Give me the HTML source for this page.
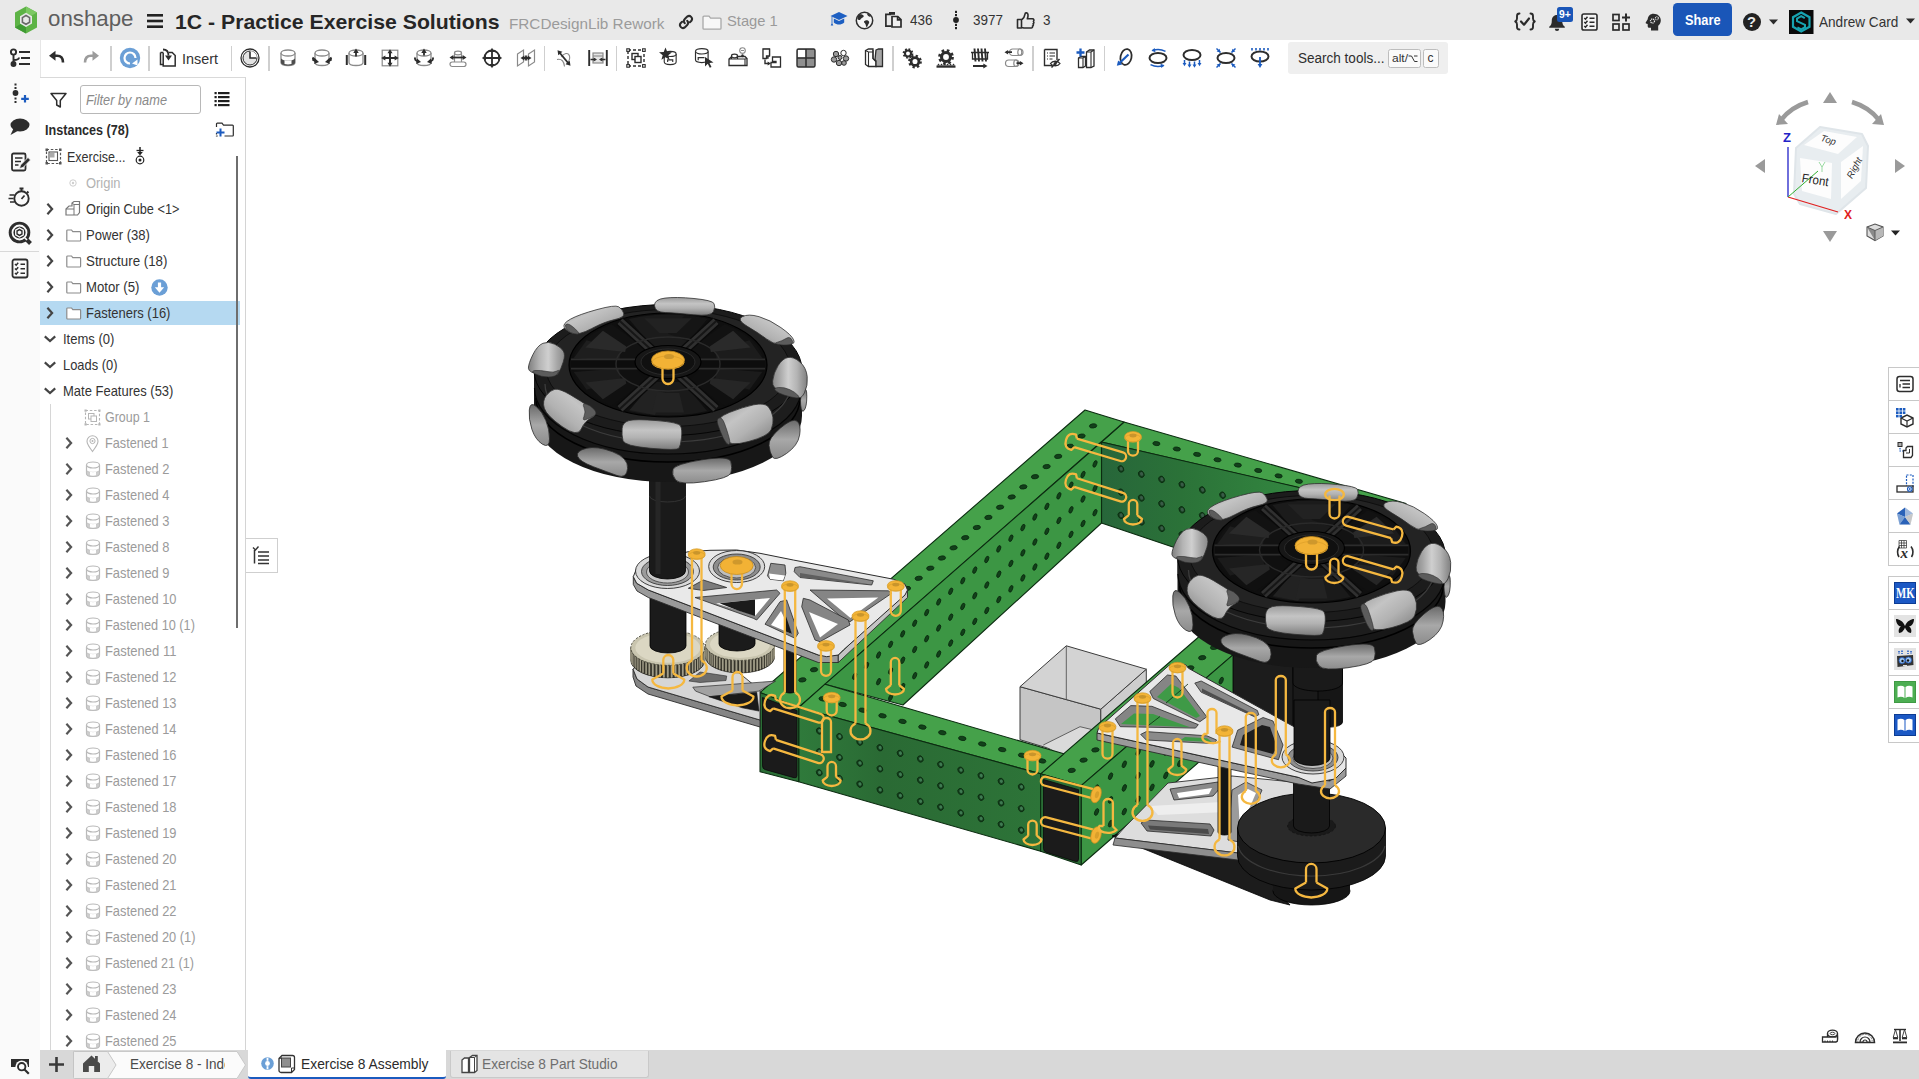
<!DOCTYPE html>
<html><head><meta charset="utf-8"><title>Onshape</title>
<style>
html,body{margin:0;padding:0;background:#fff}
html{width:1919px;height:1079px;overflow:hidden}
body{width:1919px;height:1079px;position:relative;overflow:hidden;font-family:"Liberation Sans",sans-serif}
svg{overflow:visible;display:block}
</style></head><body>
<div style="position:absolute;left:0;top:0;width:1919px;height:40px;background:#e9e9e9"></div>
<svg style="position:absolute;left:14px;top:6px;" width="24" height="28" viewBox="0 0 24 28"><polygon points="12,0.5 23,6.5 23,21.5 12,27.5 1,21.5 1,6.5" fill="#5db346"/>
<polygon points="12,0.5 23,6.5 17,10 12,7.2" fill="#7cc863"/>
<polygon points="1,21.5 12,27.5 12,21 6.5,18" fill="#3f9a33"/>
<polygon points="12,6.8 18,10.2 18,17.5 12,21 6,17.5 6,10.2" fill="#e9e9e9"/>
<polygon points="12,9.5 15.6,11.6 15.6,16.2 12,18.3 8.4,16.2 8.4,11.6" fill="none" stroke="#6a6a6a" stroke-width="1.6"/>
<polygon points="12,12.2 13.4,13 13.4,14.8 12,15.6 10.6,14.8 10.6,13" fill="#e9e9e9"/></svg>
<span style="position:absolute;left:48.0px;top:6.6px;font-size:21.5px;line-height:25.8px;color:#5e5e5e;white-space:nowrap;transform-origin:0 50%;transform:scaleX(1.0364);">onshape</span>
<svg style="position:absolute;left:146px;top:13px;" width="18" height="16" viewBox="0 0 18 16"><rect x="1" y="1" width="16" height="2.6" fill="#222"/><rect x="1" y="6.7" width="16" height="2.6" fill="#222"/><rect x="1" y="12.4" width="16" height="2.6" fill="#222"/></svg>
<span style="position:absolute;left:175.0px;top:9.4px;font-size:20.8px;line-height:25.0px;color:#262626;white-space:nowrap;transform-origin:0 50%;transform:scaleX(1.0207);font-weight:bold;">1C - Practice Exercise Solutions</span>
<span style="position:absolute;left:508.7px;top:15.7px;font-size:14.6px;line-height:17.5px;color:#9b9b9b;white-space:nowrap;transform-origin:0 50%;transform:scaleX(1.0472);">FRCDesignLib Rework</span>
<svg style="position:absolute;left:678px;top:14px;" width="16" height="16" viewBox="0 0 16 16"><g fill="none" stroke="#2b2b2b" stroke-width="2" stroke-linecap="round"><path d="M6.8 9.2a3 3 0 0 1 0-4.2l2.4-2.4a3 3 0 0 1 4.2 4.2l-1.5 1.5"/><path d="M9.2 6.8a3 3 0 0 1 0 4.2l-2.4 2.4a3 3 0 0 1-4.2-4.2l1.5-1.5"/></g></svg>
<svg style="position:absolute;left:702px;top:14.5px;" width="20" height="15" viewBox="0 0 20 15"><path d="M1 2.2a1 1 0 0 1 1-1h5l1.6 2h9.4a1 1 0 0 1 1 1v9a1 1 0 0 1-1 1H2a1 1 0 0 1-1-1z" fill="#f7f7f7" stroke="#a8a8a8" stroke-width="1.3"/></svg>
<span style="position:absolute;left:726.7px;top:12.2px;font-size:15px;line-height:18.0px;color:#9a9a9a;white-space:nowrap;transform-origin:0 50%;transform:scaleX(0.9824);">Stage 1</span>
<svg style="position:absolute;left:830px;top:11px;" width="18" height="16" viewBox="0 0 18 16"><polygon points="9,1 17.5,5 9,9 0.5,5" fill="#1d5fc2"/><path d="M3.8 7.6v3.8c1.6 1.4 3.4 2 5.2 2s3.6-.6 5.2-2V7.6L9 10z" fill="#1d5fc2"/><path d="M1.6 5.4v7.2l-.9 2h2.6l-.9-2V6z" fill="#1d5fc2"/></svg>
<svg style="position:absolute;left:855px;top:10.5px;" width="19" height="19" viewBox="0 0 19 19"><circle cx="9.5" cy="9.5" r="8.2" fill="#f4f4f4" stroke="#2e2e2e" stroke-width="1.5"/><path d="M5 3.2c1.5-.2 3 .3 3.6 1.5.5 1-.6 1.8-1.7 2.2-1.2.4-1 1.6-2 2-.9.3-2-.3-2.6-1.2.2-2 1.2-3.6 2.700-4.500zM10.500 9.500c1.300-.4 2.800 0 3.500 1 .6 1-.2 2-.8 3-.5.900-.6 2.200-1.600 2.600-.8-.7-.7-2-1.200-3-.4-1-1.700-1.500-1.400-2.500.1-.6.800-.9 1.500-1.100zM12 2.200c1.600.6 3 1.800 3.800 3.300-.9.300-1.900.1-2.500-.6-.6-.7-1.500-1.500-1.300-2.700z" fill="#2e2e2e"/></svg>
<svg style="position:absolute;left:884px;top:11px;" width="19" height="17" viewBox="0 0 19 17"><g fill="none" stroke="#2b2b2b" stroke-width="1.7"><path d="M7 3.400H1.900v11.700h5.600"/><rect x="5" y="1" width="6" height="2.800" fill="#2b2b2b" stroke="none"/><path d="M8 5.500h5.800l3.200 3.200v7.300H8z" fill="#f0f0f0"/><path d="M13.600 5.700v3.200h3.200"/></g></svg>
<span style="position:absolute;left:910.0px;top:12.4px;font-size:14.6px;line-height:17.5px;color:#333;white-space:nowrap;transform-origin:0 50%;transform:scaleX(0.9236);">436</span>
<svg style="position:absolute;left:951px;top:10px;" width="10" height="20" viewBox="0 0 10 20"><circle cx="5" cy="10" r="2.900" fill="#222"/><g fill="#222"><rect x="4" y="0.800" width="2" height="2.200"/><rect x="4" y="4" width="2" height="2.200"/><rect x="4" y="13.800" width="2" height="2.200"/><rect x="4" y="17" width="2" height="2.200"/></g></svg>
<span style="position:absolute;left:972.5px;top:12.4px;font-size:14.6px;line-height:17.5px;color:#333;white-space:nowrap;transform-origin:0 50%;transform:scaleX(0.9236);">3977</span>
<svg style="position:absolute;left:1015.5px;top:10px;" width="20" height="20" viewBox="0 0 20 20"><path d="M1.500 9.500h4v8.500h-4zM5.500 10c2-1.500 3.200-3.600 3.600-6.200.2-1.500 2.600-1.200 2.900.8.200 1.500-.2 3-.7 4.200h5.200c1.400 0 1.900 1.700.9 2.500.8.700.6 2-.3 2.500.6.800.3 1.900-.6 2.300.4 1-.2 1.900-1.300 1.900H8.500c-1.200 0-2-.5-3-.5z" fill="none" stroke="#2b2b2b" stroke-width="1.600" stroke-linejoin="round"/></svg>
<span style="position:absolute;left:1042.5px;top:12.4px;font-size:14.6px;line-height:17.5px;color:#333;white-space:nowrap;transform-origin:0 50%;transform:scaleX(0.9236);">3</span>
<svg style="position:absolute;left:1514px;top:12px;" width="22" height="19" viewBox="0 0 22 19"><g fill="none" stroke="#2b2b2b" stroke-width="1.900" stroke-linecap="round" stroke-linejoin="round"><path d="M5.500 1.500c-2 0-2.500 1-2.500 2.500v2.500c0 1.500-.6 2.500-1.800 3 1.200.5 1.800 1.500 1.800 3V15c0 1.500.5 2.500 2.500 2.500"/><path d="M16.500 1.500c2 0 2.500 1 2.500 2.500v2.500c0 1.500.6 2.500 1.800 3-1.200.5-1.800 1.500-1.800 3V15c0 1.500-.5 2.500-2.500 2.500"/><path d="M7 9.500l3 3.200 5-6.200" stroke-width="2.200"/></g></svg>
<svg style="position:absolute;left:1548px;top:14px;" width="18" height="17" viewBox="0 0 18 17"><path d="M9 1c3.400 0 5.200 2.600 5.200 5.600 0 3.400.9 4.900 2.600 6.200v1H1.200v-1c1.700-1.300 2.600-2.800 2.600-6.200C3.800 3.600 5.600 1 9 1z" fill="#2b2b2b"/><path d="M6.800 14.800a2.200 2.200 0 0 0 4.400 0z" fill="#2b2b2b"/></svg>
<div style="position:absolute;left:1557px;top:6.500px;width:15.800px;height:15px;background:#1a56b8;border-radius:2.500px"></div>
<span style="position:absolute;left:1559.0px;top:7.7px;font-size:10.5px;line-height:12.6px;color:#fff;white-space:nowrap;transform-origin:0 50%;transform:scaleX(0.9858);font-weight:bold;">9+</span>
<svg style="position:absolute;left:1580.5px;top:13px;" width="17" height="18" viewBox="0 0 17 18"><rect x="1" y="1" width="15" height="16" rx="1.800" fill="#f4f4f4" stroke="#2b2b2b" stroke-width="1.600"/><g stroke="#2b2b2b" stroke-width="1.500" fill="none"><path d="M3.300 5l1.200 1.200 2-2.400M3.300 9l1.200 1.200 2-2.400M3.300 13l1.200 1.200 2-2.400"/><path d="M8.500 5.200h5M8.500 9.200h5M8.500 13.200h5"/></g></svg>
<svg style="position:absolute;left:1612px;top:13px;" width="19" height="18" viewBox="0 0 19 18"><g fill="none" stroke="#2b2b2b" stroke-width="1.700"><rect x="1" y="1.500" width="6" height="6"/><rect x="1" y="11" width="6" height="6"/><rect x="11" y="11" width="6" height="6"/><path d="M14 0.500v8M10 4.500h8" stroke-width="2"/></g></svg>
<svg style="position:absolute;left:1645px;top:13px;" width="18" height="18" viewBox="0 0 18 18"><path d="M8.500.800c4.200 0 7.300 2.900 7.300 6.600 0 2.300-1.100 4-2.600 5.300V17.500H6v-2.700H4.200c-.9 0-1.500-.6-1.500-1.500v-2.200L1 10.400c-.4-.2-.5-.6-.3-1l2-3.200C3.100 3 5.300.800 8.500.800z" fill="#2b2b2b"/><circle cx="7.500" cy="8" r="2" fill="none" stroke="#e9e9e9" stroke-width="1.300" stroke-dasharray="1.100 0.700"/><circle cx="11.800" cy="5.200" r="1.500" fill="none" stroke="#e9e9e9" stroke-width="1.100" stroke-dasharray="0.900 0.600"/></svg>
<div style="position:absolute;left:1673px;top:3px;width:59px;height:33px;background:#1a56b8;border-radius:4.500px"></div>
<span style="position:absolute;left:1685.0px;top:11.1px;font-size:15.5px;line-height:18.6px;color:#fff;white-space:nowrap;transform-origin:0 50%;transform:scaleX(0.8241);font-weight:bold;">Share</span>
<div style="position:absolute;left:1742.500px;top:12.500px;width:18.500px;height:18.500px;border-radius:50%;background:#222"></div>
<span style="position:absolute;left:1747.3px;top:13.0px;font-size:15px;line-height:18.0px;color:#e9e9e9;white-space:nowrap;transform-origin:0 50%;transform:scaleX(0.9823);font-weight:bold;">?</span>
<svg style="position:absolute;left:1768.5px;top:18.5px;" width="9" height="6" viewBox="0 0 9 6"><polygon points="0,0.500 9,0.500 4.500,5.500" fill="#2b2b2b"/></svg>
<svg style="position:absolute;left:1789px;top:9.8px;" width="24.5" height="24" viewBox="0 0 24.5 24"><rect width="24.500" height="24" fill="#0a0a0a"/><polygon points="12.200,2.500 20.500,7.200 20.500,16.800 12.200,21.500 4,16.800 4,7.200" fill="none" stroke="#17a3b0" stroke-width="2.200"/><path d="M15.800 8.200l-3.600-2-4.200 2.400v2.600l8 3.600v2.400l-3.800 2.200-3.800-2.100" fill="none" stroke="#17a3b0" stroke-width="2"/></svg>
<span style="position:absolute;left:1819.2px;top:12.5px;font-size:15px;line-height:18.0px;color:#333;white-space:nowrap;transform-origin:0 50%;transform:scaleX(0.9059);">Andrew Card</span>
<svg style="position:absolute;left:1905.5px;top:17.5px;" width="9" height="6" viewBox="0 0 9 6"><polygon points="0,0.500 9,0.500 4.500,5.500" fill="#2b2b2b"/></svg>
<div style="position:absolute;left:40px;top:40px;width:1879px;height:37px;background:#fff"></div>
<div style="position:absolute;left:110.25px;top:45.500px;width:1.500px;height:25px;background:#cfcfcf"></div>
<div style="position:absolute;left:148.25px;top:45.500px;width:1.500px;height:25px;background:#cfcfcf"></div>
<div style="position:absolute;left:230.75px;top:45.500px;width:1.500px;height:25px;background:#cfcfcf"></div>
<div style="position:absolute;left:268.25px;top:45.500px;width:1.500px;height:25px;background:#cfcfcf"></div>
<div style="position:absolute;left:543.95px;top:45.500px;width:1.500px;height:25px;background:#cfcfcf"></div>
<div style="position:absolute;left:615.95px;top:45.500px;width:1.500px;height:25px;background:#cfcfcf"></div>
<div style="position:absolute;left:892.05px;top:45.500px;width:1.500px;height:25px;background:#cfcfcf"></div>
<div style="position:absolute;left:1032.05px;top:45.500px;width:1.500px;height:25px;background:#cfcfcf"></div>
<div style="position:absolute;left:1103.85px;top:45.500px;width:1.500px;height:25px;background:#cfcfcf"></div>
<svg style="position:absolute;left:45px;top:46px;" width="24" height="24" viewBox="0 0 24 24"><path d="M6.500 9.800h5.500c4 0 6 2.600 6 6.700" fill="none" stroke="#2d2d2d" stroke-width="2.600"/><polygon points="4,9.800 10.500,4.800 10.500,14.800" fill="#2d2d2d"/></svg>
<svg style="position:absolute;left:79px;top:46px;" width="24" height="24" viewBox="0 0 24 24"><path d="M17.500 9.800h-5.500c-4 0-6 2.600-6 6.700" fill="none" stroke="#9c9c9c" stroke-width="2.600"/><polygon points="20,9.800 13.500,4.800 13.500,14.800" fill="#9c9c9c"/></svg>
<svg style="position:absolute;left:118px;top:46px;" width="24" height="24" viewBox="0 0 24 24"><circle cx="12" cy="12" r="10.200" fill="#6b9fd6"/><path d="M17.500 12a5.500 5.500 0 1 0-5.500 5.500" fill="none" stroke="#fff" stroke-width="2.200"/><polygon points="14,17.500 19.500,13.500 19.500,19.500" fill="#fff" transform="rotate(0)"/></svg>
<svg style="position:absolute;left:156px;top:46px;" width="24" height="24" viewBox="0 0 24 24"><path d="M4.500 6.500h3M13 6.500h3.200l3 3v10.500h-12v-13" fill="none" stroke="#2d2d2d" stroke-width="1.500"/><path d="M4.500 6.500v12h3" fill="none" stroke="#2d2d2d" stroke-width="1.500"/><path d="M7 3.500c3.500 0 5.500 1.500 5.500 6" fill="none" stroke="#2d2d2d" stroke-width="1.800"/><polygon points="12.500,14.500 9,9.500 16,9.500" fill="#2d2d2d"/></svg>
<span style="position:absolute;left:181.5px;top:49.7px;font-size:15.2px;line-height:18.2px;color:#333;white-space:nowrap;transform-origin:0 50%;transform:scaleX(0.9470);">Insert</span>
<svg style="position:absolute;left:238px;top:46px;" width="24" height="24" viewBox="0 0 24 24"><circle cx="12" cy="12" r="9" fill="#fff" stroke="#2d2d2d" stroke-width="1.300"/><circle cx="12" cy="12" r="7" fill="#e3e3e3" stroke="#2d2d2d" stroke-width="1"/><path d="M12 5v7h7A7 7 0 0 0 12 5z" fill="#fff"/><path d="M12 5.500v6.500h6.500" fill="none" stroke="#2d2d2d" stroke-width="1.600"/></svg>
<svg style="position:absolute;left:276px;top:46px;" width="24" height="24" viewBox="0 0 24 24"><path d="M5 7v9.500c0 1.800 3.100 3 7 3s7-1.200 7-3V7" fill="#fff" stroke="#8a8a8a" stroke-width="1.300"/><ellipse cx="12" cy="7" rx="7" ry="3" fill="#fff" stroke="#8a8a8a" stroke-width="1.300"/><path d="M5 12.500v4c0 1.800 3.100 3 7 3s7-1.200 7-3v-4c-1.500 1.500-4 2.200-7 2.200s-5.500-.7-7-2.200z" fill="#4d4d4d"/><path d="M8.500 14.300v3.700c2 .6 5 .6 7 0v-3.700c-2 .5-5 .5-7 0z" fill="#fff"/></svg>
<svg style="position:absolute;left:310px;top:46px;" width="24" height="24" viewBox="0 0 24 24"><path d="M5 7v9.500c0 1.800 3.100 3 7 3s7-1.200 7-3V7" fill="#fff" stroke="#8a8a8a" stroke-width="1.300"/><ellipse cx="12" cy="7" rx="7" ry="3" fill="#fff" stroke="#8a8a8a" stroke-width="1.300"/><path d="M3.500 11.500c-1.500 1.500 0 3.500 3.500 4.200M20.500 11.500c1.500 1.500 0 3.500-3.500 4.200" fill="none" stroke="#2d2d2d" stroke-width="1.800"/><polygon points="0,0 -4.42,-2.72 -4.42,2.72" fill="#2d2d2d" transform="translate(9,16) rotate(10)"/><polygon points="0,0 -4.42,-2.72 -4.42,2.72" fill="#2d2d2d" transform="translate(15,16) rotate(170)"/><polygon points="0,0 -3.38,-2.08 -3.38,2.08" fill="#2d2d2d" transform="translate(3.2,11) rotate(-110)"/><polygon points="0,0 -3.38,-2.08 -3.38,2.08" fill="#2d2d2d" transform="translate(20.8,11) rotate(-70)"/></svg>
<svg style="position:absolute;left:344px;top:46px;" width="24" height="24" viewBox="0 0 24 24"><path d="M5 7v9.500c0 1.800 3.100 3 7 3s7-1.200 7-3V7" fill="#fff" stroke="#8a8a8a" stroke-width="1.300"/><ellipse cx="12" cy="7" rx="7" ry="3" fill="#fff" stroke="#8a8a8a" stroke-width="1.300"/><path d="M12 4.500v6" stroke="#2d2d2d" stroke-width="1.800"/><polygon points="0,0 -4.42,-2.72 -4.42,2.72" fill="#2d2d2d" transform="translate(12,2.5) rotate(-90)"/><path d="M2.800 9v10M21.200 9v10" stroke="#2d2d2d" stroke-width="2"/></svg>
<svg style="position:absolute;left:378px;top:46px;" width="24" height="24" viewBox="0 0 24 24"><rect x="4.200" y="4.200" width="15.600" height="15.600" fill="#fff" stroke="#8a8a8a" stroke-width="1.200"/><path d="M12 5.500v13M5.500 12h13" stroke="#2d2d2d" stroke-width="2"/><polygon points="0,0 -4.16,-2.56 -4.16,2.56" fill="#2d2d2d" transform="translate(12,3.2) rotate(-90)"/><polygon points="0,0 -4.16,-2.56 -4.16,2.56" fill="#2d2d2d" transform="translate(12,20.8) rotate(90)"/><polygon points="0,0 -4.16,-2.56 -4.16,2.56" fill="#2d2d2d" transform="translate(3.2,12) rotate(180)"/><polygon points="0,0 -4.16,-2.56 -4.16,2.56" fill="#2d2d2d" transform="translate(20.8,12) rotate(0)"/></svg>
<svg style="position:absolute;left:412px;top:46px;" width="24" height="24" viewBox="0 0 24 24"><path d="M5 7v9.500c0 1.800 3.100 3 7 3s7-1.200 7-3V7" fill="#fff" stroke="#8a8a8a" stroke-width="1.300"/><ellipse cx="12" cy="7" rx="7" ry="3" fill="#fff" stroke="#8a8a8a" stroke-width="1.300"/><path d="M12 4.500v5" stroke="#2d2d2d" stroke-width="1.800"/><polygon points="0,0 -4.42,-2.72 -4.42,2.72" fill="#2d2d2d" transform="translate(12,2.5) rotate(-90)"/><path d="M3.500 11.500c-1.500 1.500 0 3.500 3.500 4.200M20.500 11.500c1.500 1.500 0 3.500-3.500 4.200" fill="none" stroke="#2d2d2d" stroke-width="1.800"/><polygon points="0,0 -4.42,-2.72 -4.42,2.72" fill="#2d2d2d" transform="translate(9,16) rotate(10)"/><polygon points="0,0 -4.42,-2.72 -4.42,2.72" fill="#2d2d2d" transform="translate(15,16) rotate(170)"/></svg>
<svg style="position:absolute;left:446px;top:46px;" width="24" height="24" viewBox="0 0 24 24"><path d="M8.500 7v10M15.500 7v10" stroke="#8a8a8a" stroke-width="1.200"/><ellipse cx="12" cy="7" rx="3.500" ry="1.800" fill="#fff" stroke="#8a8a8a" stroke-width="1.200"/><rect x="4" y="16" width="16" height="4.500" rx="2.200" fill="#fff" stroke="#8a8a8a" stroke-width="1.200"/><path d="M6 11.500h12" stroke="#2d2d2d" stroke-width="1.800"/><polygon points="0,0 -3.9,-2.4 -3.9,2.4" fill="#2d2d2d" transform="translate(3.5,11.5) rotate(180)"/><polygon points="0,0 -3.9,-2.4 -3.9,2.4" fill="#2d2d2d" transform="translate(20.5,11.5) rotate(0)"/></svg>
<svg style="position:absolute;left:480px;top:46px;" width="24" height="24" viewBox="0 0 24 24"><circle cx="12" cy="12" r="7.500" fill="#fff" stroke="#2d2d2d" stroke-width="1.800"/><path d="M12 5v14M5 12h14" stroke="#2d2d2d" stroke-width="1.800"/><polygon points="0,0 -4.16,-2.56 -4.16,2.56" fill="#2d2d2d" transform="translate(12,1.8) rotate(-90)"/><polygon points="0,0 -4.16,-2.56 -4.16,2.56" fill="#2d2d2d" transform="translate(12,22.2) rotate(90)"/><polygon points="0,0 -4.16,-2.56 -4.16,2.56" fill="#2d2d2d" transform="translate(1.8,12) rotate(180)"/><polygon points="0,0 -4.16,-2.56 -4.16,2.56" fill="#2d2d2d" transform="translate(22.2,12) rotate(0)"/></svg>
<svg style="position:absolute;left:514px;top:46px;" width="24" height="24" viewBox="0 0 24 24"><path d="M3.500 8l6-4v12l-6 4zM14.500 8l6-4v12l-6 4z" fill="#fff" stroke="#8a8a8a" stroke-width="1.200"/><path d="M8.500 12h7M12 9.500v5" stroke="#2d2d2d" stroke-width="1.800"/><polygon points="0,0 -3.9,-2.4 -3.9,2.4" fill="#2d2d2d" transform="translate(6.5,12) rotate(180)"/><polygon points="0,0 -3.9,-2.4 -3.9,2.4" fill="#2d2d2d" transform="translate(17.5,12) rotate(0)"/></svg>
<svg style="position:absolute;left:552px;top:46px;" width="24" height="24" viewBox="0 0 24 24"><path d="M5 13.500c5-1 7 2 7.500 7M9.500 11c2-4 7-5 8-1s-1 6-3 8" fill="none" stroke="#8a8a8a" stroke-width="1.100"/><path d="M7 6l10 12" stroke="#2d2d2d" stroke-width="1.900"/><polygon points="0,0 -4.42,-2.72 -4.42,2.72" fill="#2d2d2d" transform="translate(5.5,4.2) rotate(-130)"/><polygon points="0,0 -4.42,-2.72 -4.42,2.72" fill="#2d2d2d" transform="translate(18.5,19.8) rotate(50)"/></svg>
<svg style="position:absolute;left:586px;top:46px;" width="24" height="24" viewBox="0 0 24 24"><rect x="7" y="7" width="10" height="10" fill="#e4e4e4" stroke="#8a8a8a" stroke-width="1.200"/><path d="M7 10h10" stroke="#8a8a8a" stroke-width="1.100"/><path d="M3.200 4v16M20.800 4v16" stroke="#2d2d2d" stroke-width="1.900"/><path d="M4.500 13.500h5M14.500 13.500h5" stroke="#2d2d2d" stroke-width="1.600"/><polygon points="0,0 -3.38,-2.08 -3.38,2.08" fill="#2d2d2d" transform="translate(11,13.5) rotate(0)"/><polygon points="0,0 -3.38,-2.08 -3.38,2.08" fill="#2d2d2d" transform="translate(13,13.5) rotate(180)"/></svg>
<svg style="position:absolute;left:624px;top:46px;" width="24" height="24" viewBox="0 0 24 24"><rect x="4" y="4" width="16" height="16" fill="none" stroke="#2d2d2d" stroke-width="1.400" stroke-dasharray="3 2"/><g fill="#fff" stroke="#2d2d2d" stroke-width="1.100"><rect x="2.800" y="2.800" width="2.600" height="2.600"/><rect x="18.600" y="2.800" width="2.600" height="2.600"/><rect x="2.800" y="18.600" width="2.600" height="2.600"/><rect x="18.600" y="18.600" width="2.600" height="2.600"/></g><rect x="8" y="7.500" width="6" height="6" fill="#fff" stroke="#2d2d2d" stroke-width="1.400"/><rect x="11" y="10.500" width="6" height="6" fill="#fff" stroke="#2d2d2d" stroke-width="1.400"/></svg>
<svg style="position:absolute;left:658px;top:46px;" width="24" height="24" viewBox="0 0 24 24"><g transform="translate(2,2) scale(0.850)"><path d="M5 7v9.500c0 1.800 3.100 3 7 3s7-1.200 7-3V7" fill="#fff" stroke="#2d2d2d" stroke-width="1.300"/><ellipse cx="12" cy="7" rx="7" ry="3" fill="#fff" stroke="#2d2d2d" stroke-width="1.300"/><path d="M9 16.500v-2.500h6v2.500" fill="none" stroke="#2d2d2d" stroke-width="1.300"/></g><polygon points="7.500,1.500 9.300,6 14,6.200 10.300,9.200 11.600,13.800 7.500,11.200 3.400,13.800 4.700,9.200 1,6.200 5.700,6" fill="#2d2d2d"/></svg>
<svg style="position:absolute;left:692px;top:46px;" width="24" height="24" viewBox="0 0 24 24"><g transform="translate(-1,-1) scale(0.900)"><path d="M5 7v9.500c0 1.800 3.100 3 7 3s7-1.200 7-3V7" fill="#fff" stroke="#2d2d2d" stroke-width="1.300"/><ellipse cx="12" cy="7" rx="7" ry="3" fill="#fff" stroke="#2d2d2d" stroke-width="1.300"/><path d="M8 17v-3h7" fill="none" stroke="#2d2d2d" stroke-width="1.300"/></g><polygon points="13,11 21.500,16.500 17.500,17 19.500,21 17.800,21.800 15.800,17.800 13,20.500" fill="#2d2d2d"/></svg>
<svg style="position:absolute;left:726px;top:46px;" width="24" height="24" viewBox="0 0 24 24"><path d="M3 13l3-2.500h13l2 2v7H3z" fill="#fff" stroke="#2d2d2d" stroke-width="1.300"/><path d="M3 13h16v6.500M19 13l2-.5" fill="none" stroke="#2d2d2d" stroke-width="1.100"/><ellipse cx="8.500" cy="10" rx="3" ry="1.800" fill="#fff" stroke="#2d2d2d" stroke-width="1.200"/><path d="M5.500 10v3M11.500 10v3" stroke="#2d2d2d" stroke-width="1.200"/><circle cx="16.500" cy="4.500" r="2.800" fill="#fff" stroke="#8a8a8a" stroke-width="1.100"/><path d="M15 4.500h3M16.500 7.300v2.500" stroke="#8a8a8a" stroke-width="1.100"/><polygon points="0,0 -2.86,-1.76 -2.86,1.76" fill="#2d2d2d" transform="translate(16.5,11.5) rotate(90)"/></svg>
<svg style="position:absolute;left:760px;top:46px;" width="24" height="24" viewBox="0 0 24 24"><path d="M3.500 3.500h6v5.500h-1.500v3h-4.500zM3.500 8l1.500-1.500" fill="#fff" stroke="#2d2d2d" stroke-width="1.300"/><path d="M3 3h6.500v7h-3v2.500H3z" fill="#fff" stroke="#2d2d2d" stroke-width="1.300"/><path d="M12.500 11h8v10h-9.500v-4.500h5v-1h-3.500z" fill="#fff" stroke="#2d2d2d" stroke-width="1.300" transform="translate(0,0)"/><path d="M5 13.500v4h4" fill="none" stroke="#2d2d2d" stroke-width="1.400"/><polygon points="0,0 -3.38,-2.08 -3.38,2.08" fill="#2d2d2d" transform="translate(11,17.5) rotate(0)"/></svg>
<svg style="position:absolute;left:794px;top:46px;" width="24" height="24" viewBox="0 0 24 24"><rect x="3" y="3" width="18" height="18" rx="1.500" fill="#8f8f8f" stroke="#2d2d2d" stroke-width="1.400"/><rect x="4" y="4" width="7.500" height="7.500" fill="#fff"/><path d="M12 3v18M3 12h18" stroke="#2d2d2d" stroke-width="1.500"/></svg>
<svg style="position:absolute;left:828px;top:46px;" width="24" height="24" viewBox="0 0 24 24"><g fill="#9a9a9a" stroke="#2d2d2d" stroke-width="1"><circle cx="8" cy="8" r="2.700"/><circle cx="15.500" cy="7" r="2.700" fill="#fff"/><circle cx="6" cy="13.500" r="2.700"/><circle cx="18" cy="12.500" r="2.700"/><circle cx="11" cy="17" r="2.700"/><circle cx="12" cy="11.500" r="2" /><circle cx="16" cy="17" r="2.300"/></g></svg>
<svg style="position:absolute;left:862px;top:46px;" width="24" height="24" viewBox="0 0 24 24"><path d="M3.500 4.500l3-1.500h4.500v9.500l3 3v5h-7.500l-3-2z" fill="#fff" stroke="#2d2d2d" stroke-width="1.300"/><path d="M6.500 6v14.500M3.500 4.500l3 1.500h4.500" fill="none" stroke="#2d2d2d" stroke-width="1.100"/><path d="M14 4l2.500-1h4v17.500h-6.500v-5.500l-1-1.500z" fill="#a5a5a5" stroke="#2d2d2d" stroke-width="1.300"/><path d="M11 4v8.500l3 3" fill="none" stroke="#2d2d2d" stroke-width="1.100"/></svg>
<svg style="position:absolute;left:900px;top:46px;" width="24" height="24" viewBox="0 0 24 24"><circle cx="8" cy="7.5" r="4.2" fill="none" stroke="#2d2d2d" stroke-width="2.31" stroke-dasharray="1.64934 1.64934"/><circle cx="8" cy="7.5" r="3.024" fill="none" stroke="#2d2d2d" stroke-width="2.1"/><circle cx="15" cy="15.5" r="5.4" fill="none" stroke="#2d2d2d" stroke-width="2.97" stroke-dasharray="2.12058 2.12058"/><circle cx="15" cy="15.5" r="3.888" fill="none" stroke="#2d2d2d" stroke-width="2.7"/></svg>
<svg style="position:absolute;left:934px;top:46px;" width="24" height="24" viewBox="0 0 24 24"><circle cx="12" cy="11" r="6.2" fill="none" stroke="#2d2d2d" stroke-width="3.41" stroke-dasharray="2.43474 2.43474"/><circle cx="12" cy="11" r="4.464" fill="none" stroke="#2d2d2d" stroke-width="3.1"/><rect x="2.500" y="19.500" width="19" height="2.200" fill="#2d2d2d"/><path d="M3 19.500l1.500-2 1.500 2 1.500-2 1.500 2 1.500-2 1.500 2 1.500-2 1.500 2 1.500-2 1.500 2 1.500-2 1.500 2" fill="#2d2d2d"/></svg>
<svg style="position:absolute;left:968px;top:46px;" width="24" height="24" viewBox="0 0 24 24"><path d="M3 6.500h18M4.500 6.500v6.500h15v-6.500" fill="none" stroke="#2d2d2d" stroke-width="1.300"/><path d="M6.500 2.500l1 13M10 2.500l1 13M13.500 2.500l1 13M17 2.500l1 13" stroke="#2d2d2d" stroke-width="1.900"/><path d="M5 20h11" stroke="#2d2d2d" stroke-width="2"/><polygon points="0,0 -4.16,-2.56 -4.16,2.56" fill="#2d2d2d" transform="translate(19.5,20) rotate(0)"/></svg>
<svg style="position:absolute;left:1002px;top:46px;" width="24" height="24" viewBox="0 0 24 24"><g fill="#fff" stroke="#8a8a8a" stroke-width="1.200"><rect x="7.500" y="3" width="13.500" height="6.500" rx="3.200"/><ellipse cx="17.800" cy="6.200" rx="2" ry="3.200"/><rect x="3.500" y="14" width="13.500" height="6.500" rx="3.200"/><ellipse cx="13.800" cy="17.200" rx="2" ry="3.200"/></g><path d="M4 6.200h6M14.500 17.200h5" stroke="#2d2d2d" stroke-width="1.700"/><polygon points="0,0 -3.64,-2.24 -3.64,2.24" fill="#2d2d2d" transform="translate(2.5,6.2) rotate(180)"/><polygon points="0,0 -3.64,-2.24 -3.64,2.24" fill="#2d2d2d" transform="translate(21.5,17.2) rotate(0)"/></svg>
<svg style="position:absolute;left:1040px;top:46px;" width="24" height="24" viewBox="0 0 24 24"><path d="M4.500 3.500h12.500v10.500M12 19.500h-7.500v-16" fill="#fff" stroke="#2d2d2d" stroke-width="1.400"/><path d="M7 7h1M9.500 7h5.500M7 10h1M9.500 10h5.500M7 13h1M9.500 13h3" stroke="#2d2d2d" stroke-width="1.200"/><path d="M10.500 17.500c2-3 7.500-3 9.500 0-2 3-7.500 3-9.500 0z" fill="#fff" stroke="#2d2d2d" stroke-width="1.300"/><circle cx="15.200" cy="17.500" r="1.500" fill="#2d2d2d"/><path d="M11.500 21.500l8-8.500" stroke="#2d2d2d" stroke-width="1.600"/></svg>
<svg style="position:absolute;left:1074px;top:46px;" width="24" height="24" viewBox="0 0 24 24"><path d="M12.500 6l3-2h4.500v16l-3 1.500h-4.500z" fill="#fff" stroke="#2d2d2d" stroke-width="1.300"/><path d="M12.500 6h4.500v15.500M17 6l3-2" fill="none" stroke="#2d2d2d" stroke-width="1.100"/><path d="M4.500 12l2.500-1.500h4.500v9.500l-2.500 1.500h-4.500z" fill="#fff" stroke="#2d2d2d" stroke-width="1.300"/><path d="M4.500 12h4.500v9.500M9 12l2.500-1.500" fill="none" stroke="#2d2d2d" stroke-width="1.100"/><path d="M6.500 2.500v8M2.500 6.500h8" stroke="#1b5bbf" stroke-width="2.300"/></svg>
<svg style="position:absolute;left:1112px;top:46px;" width="24" height="24" viewBox="0 0 24 24"><ellipse cx="14" cy="11" rx="5.500" ry="8" fill="none" stroke="#2d2d2d" stroke-width="1.800" transform="rotate(12 14 11)"/><path d="M16.500 8.500l-9 8.500" stroke="#1b5bbf" stroke-width="2.200"/><polygon points="0,0 -4.68,-2.88 -4.68,2.88" fill="#1b5bbf" transform="translate(4.8,19.7) rotate(136)"/></svg>
<svg style="position:absolute;left:1146px;top:46px;" width="24" height="24" viewBox="0 0 24 24"><ellipse cx="12" cy="12" rx="8.500" ry="5" fill="none" stroke="#2d2d2d" stroke-width="2"/><path d="M6.500 4.500c4-1.500 9-1.200 13 .800M17.500 19.500c-4 1.500-9 1.200-13-.800" fill="none" stroke="#1b5bbf" stroke-width="1.500"/><polygon points="0,0 -3.64,-2.24 -3.64,2.24" fill="#1b5bbf" transform="translate(5.5,4.8) rotate(170)"/><polygon points="0,0 -3.64,-2.24 -3.64,2.24" fill="#1b5bbf" transform="translate(18.5,19.2) rotate(-10)"/></svg>
<svg style="position:absolute;left:1180px;top:46px;" width="24" height="24" viewBox="0 0 24 24"><ellipse cx="12" cy="9" rx="8.500" ry="5" fill="none" stroke="#2d2d2d" stroke-width="2"/><path d="M4.5 14v4" stroke="#1b5bbf" stroke-width="1.500"/><polygon points="0,0 -3.12,-1.92 -3.12,1.92" fill="#1b5bbf" transform="translate(4.5,20.2) rotate(90)"/><path d="M9.5 15.5v4" stroke="#1b5bbf" stroke-width="1.500"/><polygon points="0,0 -3.12,-1.92 -3.12,1.92" fill="#1b5bbf" transform="translate(9.5,21.7) rotate(90)"/><path d="M14.5 15.5v4" stroke="#1b5bbf" stroke-width="1.500"/><polygon points="0,0 -3.12,-1.92 -3.12,1.92" fill="#1b5bbf" transform="translate(14.5,21.7) rotate(90)"/><path d="M19.5 14v4" stroke="#1b5bbf" stroke-width="1.500"/><polygon points="0,0 -3.12,-1.92 -3.12,1.92" fill="#1b5bbf" transform="translate(19.5,20.2) rotate(90)"/></svg>
<svg style="position:absolute;left:1214px;top:46px;" width="24" height="24" viewBox="0 0 24 24"><ellipse cx="12" cy="12" rx="8.500" ry="5" fill="none" stroke="#2d2d2d" stroke-width="2"/><path d="M2.5 2.5L6.5 6.5" stroke="#1b5bbf" stroke-width="1.500"/><polygon points="0,0 -3.38,-2.08 -3.38,2.08" fill="#1b5bbf" transform="translate(6.5,6.5) rotate(45)"/><path d="M21.5 2.5L17.5 6.5" stroke="#1b5bbf" stroke-width="1.500"/><polygon points="0,0 -3.38,-2.08 -3.38,2.08" fill="#1b5bbf" transform="translate(17.5,6.5) rotate(135)"/><path d="M2.5 21.5L6.5 17.5" stroke="#1b5bbf" stroke-width="1.500"/><polygon points="0,0 -3.38,-2.08 -3.38,2.08" fill="#1b5bbf" transform="translate(6.5,17.5) rotate(-45)"/><path d="M21.5 21.5L17.5 17.5" stroke="#1b5bbf" stroke-width="1.500"/><polygon points="0,0 -3.38,-2.08 -3.38,2.08" fill="#1b5bbf" transform="translate(17.5,17.5) rotate(-135)"/></svg>
<svg style="position:absolute;left:1248px;top:46px;" width="24" height="24" viewBox="0 0 24 24"><ellipse cx="12" cy="10.500" rx="8.500" ry="5" fill="none" stroke="#2d2d2d" stroke-width="2"/><path d="M4 2v2.500M8 2v2.500M12 2v2.500M16 2v2.500M20 2v2.500" stroke="#1b5bbf" stroke-width="1.600"/><path d="M12 11v8" stroke="#1b5bbf" stroke-width="1.800"/><polygon points="0,0 -3.9,-2.4 -3.9,2.4" fill="#1b5bbf" transform="translate(12,22) rotate(90)"/></svg>
<div style="position:absolute;left:1288px;top:42px;width:160px;height:32px;background:#efefef;border-radius:3px"></div>
<span style="position:absolute;left:1297.5px;top:49.4px;font-size:15.2px;line-height:18.2px;color:#2e2e2e;white-space:nowrap;transform-origin:0 50%;transform:scaleX(0.8903);">Search tools...</span>
<div style="position:absolute;left:1388px;top:48.500px;width:32.500px;height:19px;background:#fafafa;border:1px solid #bdbdbd;border-radius:2.500px;box-sizing:border-box"></div>
<span style="position:absolute;left:1391.5px;top:52.1px;font-size:11.5px;line-height:13.8px;color:#333;white-space:nowrap;transform-origin:0 50%;transform:scaleX(1.0430);">alt/</span>
<svg style="position:absolute;left:1408px;top:53.5px;" width="10" height="9" viewBox="0 0 10 9"><path d="M0.500 2h3l3 5.500h3M6 2h3.500" fill="none" stroke="#333" stroke-width="1"/></svg>
<div style="position:absolute;left:1422.500px;top:48.500px;width:16px;height:19px;background:#fafafa;border:1px solid #bdbdbd;border-radius:2.500px;box-sizing:border-box"></div>
<span style="position:absolute;left:1427.5px;top:51.3px;font-size:12px;line-height:14.4px;color:#333;white-space:nowrap;transform-origin:0 50%;transform:scaleX(1.0000);">c</span>
<div style="position:absolute;left:0;top:40px;width:40px;height:1039px;background:#fafafa"></div>
<div style="position:absolute;left:39.500px;top:40px;width:1px;height:1039px;background:#e6e6e6"></div>
<svg style="position:absolute;left:8px;top:46px;" width="24" height="24" viewBox="0 0 24 24"><g stroke="#2d2d2d" fill="none" stroke-width="1.900"><circle cx="5.500" cy="6" r="2.600" fill="#fafafa"/><circle cx="5.500" cy="18" r="2" fill="#2d2d2d"/><path d="M5.500 8.600v7.400M5.500 14c4 0 5.500-1 5.500-2.500"/><path d="M11 6h11M13 12h9M11 18h11" stroke-width="2.200"/></g></svg>
<svg style="position:absolute;left:9px;top:82px;" width="24" height="26" viewBox="0 0 24 26"><circle cx="6.500" cy="11" r="2.900" fill="#2d2d2d"/><g fill="#2d2d2d"><rect x="5.500" y="1.500" width="2" height="2"/><rect x="5.500" y="5" width="2" height="2"/><rect x="5.500" y="15.500" width="2" height="2"/><rect x="5.500" y="19" width="2" height="2"/></g><path d="M16 13v7.500M12.200 16.800h7.600" stroke="#1b5bbf" stroke-width="2.200"/></svg>
<svg style="position:absolute;left:9px;top:117px;" width="22" height="20" viewBox="0 0 22 20"><ellipse cx="11" cy="8" rx="9.500" ry="6.500" fill="#2d2d2d"/><path d="M4.500 11.500l-3 6.500 8-4.500z" fill="#2d2d2d"/></svg>
<svg style="position:absolute;left:10px;top:151px;" width="22" height="22" viewBox="0 0 22 22"><rect x="2" y="2.500" width="13.500" height="17" rx="1.500" fill="#fafafa" stroke="#2d2d2d" stroke-width="1.800"/><path d="M5 7h7.500M5 10.500h6M5 14h3.500" stroke="#2d2d2d" stroke-width="1.600"/><path d="M9.500 17.500l1-3.500 7.500-7.500 2.500 2.500-7.500 7.500z" fill="#2d2d2d" stroke="#fafafa" stroke-width="0.800"/></svg>
<svg style="position:absolute;left:7px;top:185px;" width="26" height="24" viewBox="0 0 26 24"><circle cx="14.500" cy="13.500" r="7.200" fill="#fafafa" stroke="#2d2d2d" stroke-width="1.900"/><path d="M12.500 3.500h4M14.500 3.500v3M20 6.500l1.500 1.500" stroke="#2d2d2d" stroke-width="1.800"/><path d="M14.500 14l3-3.500" stroke="#2d2d2d" stroke-width="1.700"/><path d="M2.500 10h5M1.500 13.500h5M3 17h4.500" stroke="#2d2d2d" stroke-width="1.500"/></svg>
<svg style="position:absolute;left:8px;top:221px;" width="25" height="25" viewBox="0 0 25 25"><circle cx="11.500" cy="11.500" r="10.800" fill="#2d2d2d"/><circle cx="11.500" cy="11.500" r="7" fill="none" stroke="#fafafa" stroke-width="1.800"/><polygon points="11.500,7 15.300,9.200 15.300,13.800 11.500,16 7.700,13.800 7.700,9.200" fill="none" stroke="#fafafa" stroke-width="1.300"/><polygon points="11.500,9.500 13.300,10.500 13.300,12.500 11.500,13.500 9.700,12.500 9.700,10.500" fill="#fafafa"/><path d="M17 17l5.500 5.500" stroke="#2d2d2d" stroke-width="4"/><path d="M16.500 16.500l2.500 2.500" stroke="#fafafa" stroke-width="1.600"/></svg>
<div style="position:absolute;left:0;top:251px;width:39px;height:1px;background:#d8d8d8"></div>
<svg style="position:absolute;left:11px;top:258px;" width="18" height="22" viewBox="0 0 18 22"><rect x="1.500" y="1.500" width="15" height="18" rx="2" fill="#fafafa" stroke="#2d2d2d" stroke-width="1.800"/><g stroke="#2d2d2d" stroke-width="1.500" fill="none"><path d="M4 6l1.200 1.200 2-2.400M4 10.500l1.200 1.200 2-2.400M4 15l1.200 1.200 2-2.400"/><path d="M9.500 6.200h4.500M9.500 10.700h4.500M9.500 15.200h4.500"/></g></svg>
<svg style="position:absolute;left:8px;top:1053px;" width="26" height="26" viewBox="0 0 26 26"><rect x="3" y="6" width="18" height="8" fill="#2d2d2d"/><circle cx="13.700" cy="13.700" r="6.300" fill="#fafafa"/><circle cx="13.700" cy="13.700" r="3.700" fill="#fafafa" stroke="#2d2d2d" stroke-width="1.900"/><path d="M16.500 16.500l4.300 4.200" stroke="#2d2d2d" stroke-width="2.200"/></svg>
<div style="position:absolute;left:40px;top:77px;width:206px;height:973px;background:#fff;border-top:1px solid #d9d9d9;border-right:1.500px solid #d4d4d4;box-sizing:border-box"></div>
<svg style="position:absolute;left:49px;top:91px;" width="19" height="19" viewBox="0 0 19 19"><path d="M2 2.500h15l-5.700 7v6.500l-3.600-2v-4.500z" fill="none" stroke="#2d2d2d" stroke-width="1.500" stroke-linejoin="round"/></svg>
<div style="position:absolute;left:79.500px;top:84.500px;width:121.500px;height:29px;border:1px solid #b8b8b8;border-radius:3px;box-sizing:border-box;background:#fff"></div>
<span style="position:absolute;left:86.0px;top:92.2px;font-size:14.3px;line-height:17.2px;color:#8a8a8a;white-space:nowrap;transform-origin:0 50%;transform:scaleX(0.8941);font-style:italic;">Filter by name</span>
<svg style="position:absolute;left:214px;top:91px;" width="16" height="16" viewBox="0 0 16 16"><g fill="#1e1e1e"><rect x="0.500" y="1" width="2.200" height="2.200"/><rect x="4" y="1" width="11.500" height="2.200"/><rect x="0.500" y="5" width="2.200" height="2.200"/><rect x="4" y="5" width="11.500" height="2.200"/><rect x="0.500" y="9" width="2.200" height="2.200"/><rect x="4" y="9" width="11.500" height="2.200"/><rect x="0.500" y="13" width="2.200" height="2.200"/><rect x="4" y="13" width="11.500" height="2.200"/></g></svg>
<span style="position:absolute;left:44.5px;top:122.9px;font-size:13.8px;line-height:16.6px;color:#2b2b2b;white-space:nowrap;transform-origin:0 50%;transform:scaleX(0.9127);font-weight:bold;">Instances (78)</span>
<svg style="position:absolute;left:215px;top:122px;" width="20" height="16" viewBox="0 0 20 16"><path d="M1.500 5v-3a.8.800 0 0 1 .8-.8h4.700l1.500 2h9a.8.800 0 0 1 .8.800v9.200a.8.800 0 0 1-.8.800h-8" fill="none" stroke="#2d2d2d" stroke-width="1.200"/><path d="M1.500 11v3h1.500" fill="none" stroke="#2d2d2d" stroke-width="1.200" stroke-dasharray="1.500 1.200"/><path d="M5.500 6.500v8M1.500 10.500h8" stroke="#1b5bbf" stroke-width="2"/></svg>
<svg style="position:absolute;left:45px;top:147.5px;" width="17" height="17" viewBox="0 0 17 17"><rect x="1.500" y="1.500" width="14" height="14" fill="none" stroke="#555" stroke-width="1.200" stroke-dasharray="2.500 1.800"/><g fill="#555"><rect x="0.500" y="0.500" width="2.500" height="2.500"/><rect x="14" y="0.500" width="2.500" height="2.500"/><rect x="0.500" y="14" width="2.500" height="2.500"/><rect x="14" y="14" width="2.500" height="2.500"/></g><rect x="4" y="4" width="8.500" height="8.500" fill="#fff" stroke="#555" stroke-width="1.100"/><rect x="5" y="5" width="4.500" height="4.500" fill="#aaa"/></svg>
<span style="position:absolute;left:66.5px;top:148.5px;font-size:14.2px;line-height:17.0px;color:#333;white-space:nowrap;transform-origin:0 50%;transform:scaleX(0.8826);">Exercise...</span>
<svg style="position:absolute;left:134px;top:146px;" width="12" height="20" viewBox="0 0 12 20"><path d="M6 1v6" stroke="#222" stroke-width="1.500"/><path d="M2.500 4.500h7" stroke="#222" stroke-width="1.300"/><polygon points="6,9.500 3.200,6 8.800,6" fill="#222"/><circle cx="6" cy="14" r="3.800" fill="#fff" stroke="#222" stroke-width="1.200"/><circle cx="6" cy="14" r="1.500" fill="#222"/></svg>
<svg style="position:absolute;left:68px;top:178px;" width="10" height="10" viewBox="0 0 10 10"><circle cx="5" cy="5" r="3.200" fill="none" stroke="#cfcfcf" stroke-width="1"/><circle cx="5" cy="5" r="1.200" fill="#cfcfcf"/></svg>
<span style="position:absolute;left:86.0px;top:174.8px;font-size:14.2px;line-height:17.0px;color:#b3b3b3;white-space:nowrap;transform-origin:0 50%;transform:scaleX(0.9109);">Origin</span>
<div style="position:absolute;left:40px;top:301px;width:200px;height:24px;background:#b5d9f1"></div>
<svg style="position:absolute;left:45px;top:201px;" width="10" height="16" viewBox="0 0 10 16"><path d="M2.400 2.800l4.700 5.200-4.700 5.200" fill="none" stroke="#444" stroke-width="2.200"/></svg>
<svg style="position:absolute;left:64px;top:200px;" width="18" height="18" viewBox="0 0 18 18"><path d="M2 9l3-3h3v-3l2-1.500h5.500v11l-2 2.500h-11.500z" fill="#fff" stroke="#777" stroke-width="1.200"/><path d="M2 9h8v-4.500l-2-1.500M10 9v6M10 4.500h5.500" fill="none" stroke="#777" stroke-width="1"/></svg>
<span style="position:absolute;left:86.0px;top:200.8px;font-size:14.2px;line-height:17.0px;color:#333;white-space:nowrap;transform-origin:0 50%;transform:scaleX(0.8974);">Origin Cube &lt;1&gt;</span>
<svg style="position:absolute;left:45px;top:227px;" width="10" height="16" viewBox="0 0 10 16"><path d="M2.400 2.800l4.700 5.200-4.700 5.200" fill="none" stroke="#444" stroke-width="2.200"/></svg>
<svg style="position:absolute;left:65.5px;top:229px;" width="15.5" height="13" viewBox="0 0 15.5 13"><path d="M0.800 1.800a.8.800 0 0 1 .8-.8h3.900l1.300 1.700h7a.8.800 0 0 1 .8.800v7.700a.8.800 0 0 1-.8.800H1.600a.8.800 0 0 1-.8-.8z" fill="#fff" stroke="#8c8c8c" stroke-width="1.200"/></svg>
<span style="position:absolute;left:86.0px;top:226.8px;font-size:14.2px;line-height:17.0px;color:#333;white-space:nowrap;transform-origin:0 50%;transform:scaleX(0.9216);">Power (38)</span>
<svg style="position:absolute;left:45px;top:253px;" width="10" height="16" viewBox="0 0 10 16"><path d="M2.400 2.800l4.700 5.200-4.700 5.200" fill="none" stroke="#444" stroke-width="2.200"/></svg>
<svg style="position:absolute;left:65.5px;top:255px;" width="15.5" height="13" viewBox="0 0 15.5 13"><path d="M0.800 1.800a.8.800 0 0 1 .8-.8h3.900l1.300 1.700h7a.8.800 0 0 1 .8.800v7.700a.8.800 0 0 1-.8.800H1.600a.8.800 0 0 1-.8-.8z" fill="#fff" stroke="#8c8c8c" stroke-width="1.200"/></svg>
<span style="position:absolute;left:86.0px;top:252.8px;font-size:14.2px;line-height:17.0px;color:#333;white-space:nowrap;transform-origin:0 50%;transform:scaleX(0.9389);">Structure (18)</span>
<svg style="position:absolute;left:45px;top:279px;" width="10" height="16" viewBox="0 0 10 16"><path d="M2.400 2.800l4.700 5.200-4.700 5.200" fill="none" stroke="#444" stroke-width="2.200"/></svg>
<svg style="position:absolute;left:65.5px;top:281px;" width="15.5" height="13" viewBox="0 0 15.5 13"><path d="M0.800 1.800a.8.800 0 0 1 .8-.8h3.900l1.300 1.700h7a.8.800 0 0 1 .8.800v7.700a.8.800 0 0 1-.8.800H1.600a.8.800 0 0 1-.8-.8z" fill="#fff" stroke="#8c8c8c" stroke-width="1.200"/></svg>
<span style="position:absolute;left:86.0px;top:278.8px;font-size:14.2px;line-height:17.0px;color:#333;white-space:nowrap;transform-origin:0 50%;transform:scaleX(0.9289);">Motor (5)</span>
<svg style="position:absolute;left:45px;top:305px;" width="10" height="16" viewBox="0 0 10 16"><path d="M2.400 2.800l4.700 5.200-4.700 5.200" fill="none" stroke="#444" stroke-width="2.200"/></svg>
<svg style="position:absolute;left:65.5px;top:307px;" width="15.5" height="13" viewBox="0 0 15.5 13"><path d="M0.800 1.800a.8.800 0 0 1 .8-.8h3.900l1.300 1.700h7a.8.800 0 0 1 .8.800v7.700a.8.800 0 0 1-.8.800H1.600a.8.800 0 0 1-.8-.8z" fill="#fff" stroke="#8c8c8c" stroke-width="1.200"/></svg>
<span style="position:absolute;left:86.0px;top:304.8px;font-size:14.2px;line-height:17.0px;color:#333;white-space:nowrap;transform-origin:0 50%;transform:scaleX(0.9152);">Fasteners (16)</span>
<svg style="position:absolute;left:151px;top:278.5px;" width="17" height="17" viewBox="0 0 17 17"><circle cx="8.500" cy="8.500" r="8.200" fill="#6b9fd6"/><path d="M8.500 3.500v6" stroke="#fff" stroke-width="3.200"/><polygon points="8.500,13.800 3.800,8.200 13.200,8.200" fill="#fff"/></svg>
<svg style="position:absolute;left:42px;top:334px;" width="16" height="10" viewBox="0 0 16 10"><path d="M2.800 2.400l5.200 4.700 5.200-4.700" fill="none" stroke="#444" stroke-width="2.200"/></svg>
<span style="position:absolute;left:63.0px;top:330.8px;font-size:14.2px;line-height:17.0px;color:#333;white-space:nowrap;transform-origin:0 50%;transform:scaleX(0.9194);">Items (0)</span>
<svg style="position:absolute;left:42px;top:360px;" width="16" height="10" viewBox="0 0 16 10"><path d="M2.800 2.400l5.200 4.700 5.200-4.700" fill="none" stroke="#444" stroke-width="2.200"/></svg>
<span style="position:absolute;left:63.0px;top:356.8px;font-size:14.2px;line-height:17.0px;color:#333;white-space:nowrap;transform-origin:0 50%;transform:scaleX(0.9085);">Loads (0)</span>
<svg style="position:absolute;left:42px;top:386px;" width="16" height="10" viewBox="0 0 16 10"><path d="M2.800 2.400l5.200 4.700 5.200-4.700" fill="none" stroke="#444" stroke-width="2.200"/></svg>
<span style="position:absolute;left:63.0px;top:382.8px;font-size:14.2px;line-height:17.0px;color:#333;white-space:nowrap;transform-origin:0 50%;transform:scaleX(0.9152);">Mate Features (53)</span>
<div style="position:absolute;left:49.500px;top:404px;width:1px;height:646px;background:#d6d6d6"></div>
<svg style="position:absolute;left:84px;top:408.5px;" width="17" height="17" viewBox="0 0 17 17"><rect x="1.500" y="1.500" width="14" height="14" fill="none" stroke="#b5b5b5" stroke-width="1.100" stroke-dasharray="2.500 1.800"/><g fill="#b5b5b5"><rect x="0.500" y="0.500" width="2.200" height="2.200"/><rect x="14.300" y="0.500" width="2.200" height="2.200"/><rect x="0.500" y="14.300" width="2.200" height="2.200"/><rect x="14.300" y="14.300" width="2.200" height="2.200"/></g><rect x="4.500" y="4.500" width="5.500" height="5.500" fill="#fff" stroke="#b5b5b5" stroke-width="1"/><rect x="7" y="7" width="5.500" height="5.500" fill="#fff" stroke="#b5b5b5" stroke-width="1"/></svg>
<span style="position:absolute;left:105.0px;top:408.8px;font-size:14.2px;line-height:17.0px;color:#9b9b9b;white-space:nowrap;transform-origin:0 50%;transform:scaleX(0.8771);">Group 1</span>
<svg style="position:absolute;left:63.5px;top:435px;" width="10" height="16" viewBox="0 0 10 16"><path d="M2.400 2.800l4.700 5.200-4.700 5.200" fill="none" stroke="#555" stroke-width="2.200"/></svg>
<svg style="position:absolute;left:85px;top:433.5px;" width="15" height="19" viewBox="0 0 15 19"><path d="M7.500 17.500c-3.500-4.500-5.500-7.500-5.500-10.200a5.500 5.500 0 0 1 11 0c0 2.700-2 5.700-5.500 10.200z" fill="#fff" stroke="#b5b5b5" stroke-width="1.100"/><circle cx="7.500" cy="7" r="2.600" fill="none" stroke="#b5b5b5" stroke-width="1"/><circle cx="7.500" cy="7" r="1" fill="#b5b5b5"/></svg>
<span style="position:absolute;left:105.0px;top:434.8px;font-size:14.2px;line-height:17.0px;color:#9b9b9b;white-space:nowrap;transform-origin:0 50%;transform:scaleX(0.8938);">Fastened 1</span>
<svg style="position:absolute;left:63.5px;top:461px;" width="10" height="16" viewBox="0 0 10 16"><path d="M2.400 2.800l4.700 5.200-4.700 5.200" fill="none" stroke="#555" stroke-width="2.200"/></svg>
<svg style="position:absolute;left:84.5px;top:460px;" width="16" height="18" viewBox="0 0 16 18"><path d="M1.500 5v8.500c0 1.700 2.900 3 6.500 3s6.500-1.300 6.500-3V5" fill="#fff" stroke="#b9b9b9" stroke-width="1.200"/><path d="M1.500 10.500v3c0 1.700 2.900 3 6.500 3s6.500-1.300 6.500-3v-3c-1.500 1.300-3.500 1.800-6.500 1.800s-5-.5-6.500-1.800z" fill="#cdcdcd" stroke="#b9b9b9" stroke-width="0.600"/><path d="M5 11.800v3.400c1.800.6 4.200.6 6 0v-3.400c-1.800.5-4.200.5-6 0z" fill="#fff"/><ellipse cx="8" cy="5" rx="6.500" ry="3" fill="#fff" stroke="#b9b9b9" stroke-width="1.200"/></svg>
<span style="position:absolute;left:105.0px;top:460.8px;font-size:14.2px;line-height:17.0px;color:#9b9b9b;white-space:nowrap;transform-origin:0 50%;transform:scaleX(0.9079);">Fastened 2</span>
<svg style="position:absolute;left:63.5px;top:487px;" width="10" height="16" viewBox="0 0 10 16"><path d="M2.400 2.800l4.700 5.200-4.700 5.200" fill="none" stroke="#555" stroke-width="2.200"/></svg>
<svg style="position:absolute;left:84.5px;top:486px;" width="16" height="18" viewBox="0 0 16 18"><path d="M1.500 5v8.500c0 1.700 2.900 3 6.500 3s6.500-1.300 6.500-3V5" fill="#fff" stroke="#b9b9b9" stroke-width="1.200"/><path d="M1.500 10.500v3c0 1.700 2.900 3 6.500 3s6.500-1.300 6.500-3v-3c-1.500 1.300-3.500 1.800-6.500 1.800s-5-.5-6.500-1.800z" fill="#cdcdcd" stroke="#b9b9b9" stroke-width="0.600"/><path d="M5 11.800v3.400c1.800.6 4.200.6 6 0v-3.400c-1.800.5-4.200.5-6 0z" fill="#fff"/><ellipse cx="8" cy="5" rx="6.500" ry="3" fill="#fff" stroke="#b9b9b9" stroke-width="1.200"/></svg>
<span style="position:absolute;left:105.0px;top:486.8px;font-size:14.2px;line-height:17.0px;color:#9b9b9b;white-space:nowrap;transform-origin:0 50%;transform:scaleX(0.9079);">Fastened 4</span>
<svg style="position:absolute;left:63.5px;top:513px;" width="10" height="16" viewBox="0 0 10 16"><path d="M2.400 2.800l4.700 5.200-4.700 5.200" fill="none" stroke="#555" stroke-width="2.200"/></svg>
<svg style="position:absolute;left:84.5px;top:512px;" width="16" height="18" viewBox="0 0 16 18"><path d="M1.500 5v8.500c0 1.700 2.900 3 6.500 3s6.500-1.300 6.500-3V5" fill="#fff" stroke="#b9b9b9" stroke-width="1.200"/><path d="M1.500 10.500v3c0 1.700 2.900 3 6.500 3s6.500-1.300 6.500-3v-3c-1.500 1.300-3.500 1.800-6.500 1.800s-5-.5-6.500-1.800z" fill="#cdcdcd" stroke="#b9b9b9" stroke-width="0.600"/><path d="M5 11.800v3.400c1.800.6 4.200.6 6 0v-3.400c-1.800.5-4.200.5-6 0z" fill="#fff"/><ellipse cx="8" cy="5" rx="6.500" ry="3" fill="#fff" stroke="#b9b9b9" stroke-width="1.200"/></svg>
<span style="position:absolute;left:105.0px;top:512.8px;font-size:14.2px;line-height:17.0px;color:#9b9b9b;white-space:nowrap;transform-origin:0 50%;transform:scaleX(0.9079);">Fastened 3</span>
<svg style="position:absolute;left:63.5px;top:539px;" width="10" height="16" viewBox="0 0 10 16"><path d="M2.400 2.800l4.700 5.200-4.700 5.200" fill="none" stroke="#555" stroke-width="2.200"/></svg>
<svg style="position:absolute;left:84.5px;top:538px;" width="16" height="18" viewBox="0 0 16 18"><path d="M1.500 5v8.500c0 1.700 2.900 3 6.500 3s6.500-1.300 6.500-3V5" fill="#fff" stroke="#b9b9b9" stroke-width="1.200"/><path d="M1.500 10.500v3c0 1.700 2.900 3 6.500 3s6.500-1.300 6.500-3v-3c-1.500 1.300-3.500 1.800-6.500 1.800s-5-.5-6.500-1.800z" fill="#cdcdcd" stroke="#b9b9b9" stroke-width="0.600"/><path d="M5 11.800v3.400c1.800.6 4.200.6 6 0v-3.400c-1.800.5-4.200.5-6 0z" fill="#fff"/><ellipse cx="8" cy="5" rx="6.500" ry="3" fill="#fff" stroke="#b9b9b9" stroke-width="1.200"/></svg>
<span style="position:absolute;left:105.0px;top:538.8px;font-size:14.2px;line-height:17.0px;color:#9b9b9b;white-space:nowrap;transform-origin:0 50%;transform:scaleX(0.9079);">Fastened 8</span>
<svg style="position:absolute;left:63.5px;top:565px;" width="10" height="16" viewBox="0 0 10 16"><path d="M2.400 2.800l4.700 5.200-4.700 5.200" fill="none" stroke="#555" stroke-width="2.200"/></svg>
<svg style="position:absolute;left:84.5px;top:564px;" width="16" height="18" viewBox="0 0 16 18"><path d="M1.500 5v8.500c0 1.700 2.900 3 6.500 3s6.500-1.300 6.500-3V5" fill="#fff" stroke="#b9b9b9" stroke-width="1.200"/><path d="M1.500 10.500v3c0 1.700 2.900 3 6.500 3s6.500-1.300 6.500-3v-3c-1.500 1.300-3.500 1.800-6.500 1.800s-5-.5-6.500-1.800z" fill="#cdcdcd" stroke="#b9b9b9" stroke-width="0.600"/><path d="M5 11.800v3.400c1.800.6 4.200.6 6 0v-3.400c-1.800.5-4.200.5-6 0z" fill="#fff"/><ellipse cx="8" cy="5" rx="6.500" ry="3" fill="#fff" stroke="#b9b9b9" stroke-width="1.200"/></svg>
<span style="position:absolute;left:105.0px;top:564.8px;font-size:14.2px;line-height:17.0px;color:#9b9b9b;white-space:nowrap;transform-origin:0 50%;transform:scaleX(0.9079);">Fastened 9</span>
<svg style="position:absolute;left:63.5px;top:591px;" width="10" height="16" viewBox="0 0 10 16"><path d="M2.400 2.800l4.700 5.200-4.700 5.200" fill="none" stroke="#555" stroke-width="2.200"/></svg>
<svg style="position:absolute;left:84.5px;top:590px;" width="16" height="18" viewBox="0 0 16 18"><path d="M1.500 5v8.500c0 1.700 2.900 3 6.500 3s6.500-1.300 6.500-3V5" fill="#fff" stroke="#b9b9b9" stroke-width="1.200"/><path d="M1.500 10.500v3c0 1.700 2.900 3 6.500 3s6.500-1.300 6.500-3v-3c-1.500 1.300-3.500 1.800-6.500 1.800s-5-.5-6.500-1.800z" fill="#cdcdcd" stroke="#b9b9b9" stroke-width="0.600"/><path d="M5 11.800v3.400c1.800.6 4.200.6 6 0v-3.400c-1.800.5-4.200.5-6 0z" fill="#fff"/><ellipse cx="8" cy="5" rx="6.500" ry="3" fill="#fff" stroke="#b9b9b9" stroke-width="1.200"/></svg>
<span style="position:absolute;left:105.0px;top:590.8px;font-size:14.2px;line-height:17.0px;color:#9b9b9b;white-space:nowrap;transform-origin:0 50%;transform:scaleX(0.9057);">Fastened 10</span>
<svg style="position:absolute;left:63.5px;top:617px;" width="10" height="16" viewBox="0 0 10 16"><path d="M2.400 2.800l4.700 5.200-4.700 5.200" fill="none" stroke="#555" stroke-width="2.200"/></svg>
<svg style="position:absolute;left:84.5px;top:616px;" width="16" height="18" viewBox="0 0 16 18"><path d="M1.500 5v8.500c0 1.700 2.900 3 6.500 3s6.500-1.300 6.500-3V5" fill="#fff" stroke="#b9b9b9" stroke-width="1.200"/><path d="M1.500 10.500v3c0 1.700 2.900 3 6.500 3s6.500-1.300 6.500-3v-3c-1.500 1.300-3.500 1.800-6.500 1.800s-5-.5-6.500-1.800z" fill="#cdcdcd" stroke="#b9b9b9" stroke-width="0.600"/><path d="M5 11.800v3.400c1.800.6 4.200.6 6 0v-3.400c-1.800.5-4.200.5-6 0z" fill="#fff"/><ellipse cx="8" cy="5" rx="6.500" ry="3" fill="#fff" stroke="#b9b9b9" stroke-width="1.200"/></svg>
<span style="position:absolute;left:105.0px;top:616.8px;font-size:14.2px;line-height:17.0px;color:#9b9b9b;white-space:nowrap;transform-origin:0 50%;transform:scaleX(0.8978);">Fastened 10 (1)</span>
<svg style="position:absolute;left:63.5px;top:643px;" width="10" height="16" viewBox="0 0 10 16"><path d="M2.400 2.800l4.700 5.200-4.700 5.200" fill="none" stroke="#555" stroke-width="2.200"/></svg>
<svg style="position:absolute;left:84.5px;top:642px;" width="16" height="18" viewBox="0 0 16 18"><path d="M1.500 5v8.500c0 1.700 2.900 3 6.500 3s6.500-1.300 6.500-3V5" fill="#fff" stroke="#b9b9b9" stroke-width="1.200"/><path d="M1.500 10.500v3c0 1.700 2.900 3 6.500 3s6.500-1.300 6.500-3v-3c-1.500 1.300-3.500 1.800-6.500 1.800s-5-.5-6.500-1.800z" fill="#cdcdcd" stroke="#b9b9b9" stroke-width="0.600"/><path d="M5 11.800v3.400c1.800.6 4.200.6 6 0v-3.400c-1.800.5-4.200.5-6 0z" fill="#fff"/><ellipse cx="8" cy="5" rx="6.500" ry="3" fill="#fff" stroke="#b9b9b9" stroke-width="1.200"/></svg>
<span style="position:absolute;left:105.0px;top:642.8px;font-size:14.2px;line-height:17.0px;color:#9b9b9b;white-space:nowrap;transform-origin:0 50%;transform:scaleX(0.9180);">Fastened 11</span>
<svg style="position:absolute;left:63.5px;top:669px;" width="10" height="16" viewBox="0 0 10 16"><path d="M2.400 2.800l4.700 5.200-4.700 5.200" fill="none" stroke="#555" stroke-width="2.200"/></svg>
<svg style="position:absolute;left:84.5px;top:668px;" width="16" height="18" viewBox="0 0 16 18"><path d="M1.500 5v8.500c0 1.700 2.900 3 6.500 3s6.500-1.300 6.500-3V5" fill="#fff" stroke="#b9b9b9" stroke-width="1.200"/><path d="M1.500 10.500v3c0 1.700 2.900 3 6.500 3s6.500-1.300 6.500-3v-3c-1.500 1.300-3.500 1.800-6.500 1.800s-5-.5-6.500-1.800z" fill="#cdcdcd" stroke="#b9b9b9" stroke-width="0.600"/><path d="M5 11.800v3.400c1.800.6 4.200.6 6 0v-3.400c-1.800.5-4.200.5-6 0z" fill="#fff"/><ellipse cx="8" cy="5" rx="6.500" ry="3" fill="#fff" stroke="#b9b9b9" stroke-width="1.200"/></svg>
<span style="position:absolute;left:105.0px;top:668.8px;font-size:14.2px;line-height:17.0px;color:#9b9b9b;white-space:nowrap;transform-origin:0 50%;transform:scaleX(0.9057);">Fastened 12</span>
<svg style="position:absolute;left:63.5px;top:695px;" width="10" height="16" viewBox="0 0 10 16"><path d="M2.400 2.800l4.700 5.200-4.700 5.200" fill="none" stroke="#555" stroke-width="2.200"/></svg>
<svg style="position:absolute;left:84.5px;top:694px;" width="16" height="18" viewBox="0 0 16 18"><path d="M1.500 5v8.500c0 1.700 2.900 3 6.500 3s6.500-1.300 6.500-3V5" fill="#fff" stroke="#b9b9b9" stroke-width="1.200"/><path d="M1.500 10.500v3c0 1.700 2.900 3 6.500 3s6.500-1.300 6.500-3v-3c-1.500 1.300-3.500 1.800-6.500 1.800s-5-.5-6.500-1.800z" fill="#cdcdcd" stroke="#b9b9b9" stroke-width="0.600"/><path d="M5 11.800v3.400c1.800.6 4.200.6 6 0v-3.400c-1.800.5-4.200.5-6 0z" fill="#fff"/><ellipse cx="8" cy="5" rx="6.500" ry="3" fill="#fff" stroke="#b9b9b9" stroke-width="1.200"/></svg>
<span style="position:absolute;left:105.0px;top:694.8px;font-size:14.2px;line-height:17.0px;color:#9b9b9b;white-space:nowrap;transform-origin:0 50%;transform:scaleX(0.9057);">Fastened 13</span>
<svg style="position:absolute;left:63.5px;top:721px;" width="10" height="16" viewBox="0 0 10 16"><path d="M2.400 2.800l4.700 5.200-4.700 5.200" fill="none" stroke="#555" stroke-width="2.200"/></svg>
<svg style="position:absolute;left:84.5px;top:720px;" width="16" height="18" viewBox="0 0 16 18"><path d="M1.500 5v8.500c0 1.700 2.900 3 6.500 3s6.500-1.300 6.500-3V5" fill="#fff" stroke="#b9b9b9" stroke-width="1.200"/><path d="M1.500 10.500v3c0 1.700 2.900 3 6.500 3s6.500-1.300 6.500-3v-3c-1.500 1.300-3.500 1.800-6.500 1.800s-5-.5-6.500-1.800z" fill="#cdcdcd" stroke="#b9b9b9" stroke-width="0.600"/><path d="M5 11.800v3.400c1.800.6 4.200.6 6 0v-3.400c-1.800.5-4.200.5-6 0z" fill="#fff"/><ellipse cx="8" cy="5" rx="6.500" ry="3" fill="#fff" stroke="#b9b9b9" stroke-width="1.200"/></svg>
<span style="position:absolute;left:105.0px;top:720.8px;font-size:14.2px;line-height:17.0px;color:#9b9b9b;white-space:nowrap;transform-origin:0 50%;transform:scaleX(0.9057);">Fastened 14</span>
<svg style="position:absolute;left:63.5px;top:747px;" width="10" height="16" viewBox="0 0 10 16"><path d="M2.400 2.800l4.700 5.200-4.700 5.200" fill="none" stroke="#555" stroke-width="2.200"/></svg>
<svg style="position:absolute;left:84.5px;top:746px;" width="16" height="18" viewBox="0 0 16 18"><path d="M1.500 5v8.500c0 1.700 2.900 3 6.500 3s6.500-1.300 6.500-3V5" fill="#fff" stroke="#b9b9b9" stroke-width="1.200"/><path d="M1.500 10.500v3c0 1.700 2.900 3 6.500 3s6.500-1.300 6.500-3v-3c-1.500 1.300-3.500 1.800-6.500 1.800s-5-.5-6.500-1.800z" fill="#cdcdcd" stroke="#b9b9b9" stroke-width="0.600"/><path d="M5 11.800v3.400c1.800.6 4.200.6 6 0v-3.400c-1.800.5-4.200.5-6 0z" fill="#fff"/><ellipse cx="8" cy="5" rx="6.500" ry="3" fill="#fff" stroke="#b9b9b9" stroke-width="1.200"/></svg>
<span style="position:absolute;left:105.0px;top:746.8px;font-size:14.2px;line-height:17.0px;color:#9b9b9b;white-space:nowrap;transform-origin:0 50%;transform:scaleX(0.9057);">Fastened 16</span>
<svg style="position:absolute;left:63.5px;top:773px;" width="10" height="16" viewBox="0 0 10 16"><path d="M2.400 2.800l4.700 5.200-4.700 5.200" fill="none" stroke="#555" stroke-width="2.200"/></svg>
<svg style="position:absolute;left:84.5px;top:772px;" width="16" height="18" viewBox="0 0 16 18"><path d="M1.500 5v8.500c0 1.700 2.900 3 6.500 3s6.500-1.300 6.500-3V5" fill="#fff" stroke="#b9b9b9" stroke-width="1.200"/><path d="M1.500 10.500v3c0 1.700 2.900 3 6.500 3s6.500-1.300 6.500-3v-3c-1.500 1.300-3.500 1.800-6.500 1.800s-5-.5-6.500-1.800z" fill="#cdcdcd" stroke="#b9b9b9" stroke-width="0.600"/><path d="M5 11.800v3.400c1.800.6 4.200.6 6 0v-3.400c-1.800.5-4.200.5-6 0z" fill="#fff"/><ellipse cx="8" cy="5" rx="6.500" ry="3" fill="#fff" stroke="#b9b9b9" stroke-width="1.200"/></svg>
<span style="position:absolute;left:105.0px;top:772.8px;font-size:14.2px;line-height:17.0px;color:#9b9b9b;white-space:nowrap;transform-origin:0 50%;transform:scaleX(0.9057);">Fastened 17</span>
<svg style="position:absolute;left:63.5px;top:799px;" width="10" height="16" viewBox="0 0 10 16"><path d="M2.400 2.800l4.700 5.200-4.700 5.200" fill="none" stroke="#555" stroke-width="2.200"/></svg>
<svg style="position:absolute;left:84.5px;top:798px;" width="16" height="18" viewBox="0 0 16 18"><path d="M1.500 5v8.500c0 1.700 2.900 3 6.500 3s6.500-1.300 6.500-3V5" fill="#fff" stroke="#b9b9b9" stroke-width="1.200"/><path d="M1.500 10.500v3c0 1.700 2.900 3 6.500 3s6.500-1.300 6.500-3v-3c-1.500 1.300-3.500 1.800-6.500 1.800s-5-.5-6.500-1.800z" fill="#cdcdcd" stroke="#b9b9b9" stroke-width="0.600"/><path d="M5 11.800v3.400c1.800.6 4.200.6 6 0v-3.400c-1.800.5-4.200.5-6 0z" fill="#fff"/><ellipse cx="8" cy="5" rx="6.500" ry="3" fill="#fff" stroke="#b9b9b9" stroke-width="1.200"/></svg>
<span style="position:absolute;left:105.0px;top:798.8px;font-size:14.2px;line-height:17.0px;color:#9b9b9b;white-space:nowrap;transform-origin:0 50%;transform:scaleX(0.9057);">Fastened 18</span>
<svg style="position:absolute;left:63.5px;top:825px;" width="10" height="16" viewBox="0 0 10 16"><path d="M2.400 2.800l4.700 5.200-4.700 5.200" fill="none" stroke="#555" stroke-width="2.200"/></svg>
<svg style="position:absolute;left:84.5px;top:824px;" width="16" height="18" viewBox="0 0 16 18"><path d="M1.500 5v8.500c0 1.700 2.900 3 6.500 3s6.500-1.300 6.500-3V5" fill="#fff" stroke="#b9b9b9" stroke-width="1.200"/><path d="M1.500 10.500v3c0 1.700 2.900 3 6.500 3s6.500-1.300 6.500-3v-3c-1.500 1.300-3.500 1.800-6.500 1.800s-5-.5-6.500-1.800z" fill="#cdcdcd" stroke="#b9b9b9" stroke-width="0.600"/><path d="M5 11.800v3.400c1.800.6 4.200.6 6 0v-3.400c-1.800.5-4.200.5-6 0z" fill="#fff"/><ellipse cx="8" cy="5" rx="6.500" ry="3" fill="#fff" stroke="#b9b9b9" stroke-width="1.200"/></svg>
<span style="position:absolute;left:105.0px;top:824.8px;font-size:14.2px;line-height:17.0px;color:#9b9b9b;white-space:nowrap;transform-origin:0 50%;transform:scaleX(0.9057);">Fastened 19</span>
<svg style="position:absolute;left:63.5px;top:851px;" width="10" height="16" viewBox="0 0 10 16"><path d="M2.400 2.800l4.700 5.200-4.700 5.200" fill="none" stroke="#555" stroke-width="2.200"/></svg>
<svg style="position:absolute;left:84.5px;top:850px;" width="16" height="18" viewBox="0 0 16 18"><path d="M1.500 5v8.500c0 1.700 2.900 3 6.500 3s6.500-1.300 6.500-3V5" fill="#fff" stroke="#b9b9b9" stroke-width="1.200"/><path d="M1.500 10.500v3c0 1.700 2.900 3 6.500 3s6.500-1.300 6.500-3v-3c-1.500 1.300-3.500 1.800-6.500 1.800s-5-.5-6.500-1.800z" fill="#cdcdcd" stroke="#b9b9b9" stroke-width="0.600"/><path d="M5 11.800v3.400c1.800.6 4.200.6 6 0v-3.400c-1.800.5-4.200.5-6 0z" fill="#fff"/><ellipse cx="8" cy="5" rx="6.500" ry="3" fill="#fff" stroke="#b9b9b9" stroke-width="1.200"/></svg>
<span style="position:absolute;left:105.0px;top:850.8px;font-size:14.2px;line-height:17.0px;color:#9b9b9b;white-space:nowrap;transform-origin:0 50%;transform:scaleX(0.9057);">Fastened 20</span>
<svg style="position:absolute;left:63.5px;top:877px;" width="10" height="16" viewBox="0 0 10 16"><path d="M2.400 2.800l4.700 5.200-4.700 5.200" fill="none" stroke="#555" stroke-width="2.200"/></svg>
<svg style="position:absolute;left:84.5px;top:876px;" width="16" height="18" viewBox="0 0 16 18"><path d="M1.500 5v8.500c0 1.700 2.900 3 6.500 3s6.500-1.300 6.500-3V5" fill="#fff" stroke="#b9b9b9" stroke-width="1.200"/><path d="M1.500 10.500v3c0 1.700 2.900 3 6.500 3s6.500-1.300 6.500-3v-3c-1.500 1.300-3.500 1.800-6.500 1.800s-5-.5-6.500-1.800z" fill="#cdcdcd" stroke="#b9b9b9" stroke-width="0.600"/><path d="M5 11.800v3.400c1.800.6 4.200.6 6 0v-3.400c-1.800.5-4.200.5-6 0z" fill="#fff"/><ellipse cx="8" cy="5" rx="6.500" ry="3" fill="#fff" stroke="#b9b9b9" stroke-width="1.200"/></svg>
<span style="position:absolute;left:105.0px;top:876.8px;font-size:14.2px;line-height:17.0px;color:#9b9b9b;white-space:nowrap;transform-origin:0 50%;transform:scaleX(0.9057);">Fastened 21</span>
<svg style="position:absolute;left:63.5px;top:903px;" width="10" height="16" viewBox="0 0 10 16"><path d="M2.400 2.800l4.700 5.200-4.700 5.200" fill="none" stroke="#555" stroke-width="2.200"/></svg>
<svg style="position:absolute;left:84.5px;top:902px;" width="16" height="18" viewBox="0 0 16 18"><path d="M1.500 5v8.500c0 1.700 2.900 3 6.500 3s6.500-1.300 6.500-3V5" fill="#fff" stroke="#b9b9b9" stroke-width="1.200"/><path d="M1.500 10.500v3c0 1.700 2.900 3 6.500 3s6.500-1.300 6.500-3v-3c-1.500 1.300-3.500 1.800-6.500 1.800s-5-.5-6.500-1.800z" fill="#cdcdcd" stroke="#b9b9b9" stroke-width="0.600"/><path d="M5 11.800v3.400c1.800.6 4.200.6 6 0v-3.400c-1.800.5-4.200.5-6 0z" fill="#fff"/><ellipse cx="8" cy="5" rx="6.500" ry="3" fill="#fff" stroke="#b9b9b9" stroke-width="1.200"/></svg>
<span style="position:absolute;left:105.0px;top:902.8px;font-size:14.2px;line-height:17.0px;color:#9b9b9b;white-space:nowrap;transform-origin:0 50%;transform:scaleX(0.9057);">Fastened 22</span>
<svg style="position:absolute;left:63.5px;top:929px;" width="10" height="16" viewBox="0 0 10 16"><path d="M2.400 2.800l4.700 5.200-4.700 5.200" fill="none" stroke="#555" stroke-width="2.200"/></svg>
<svg style="position:absolute;left:84.5px;top:928px;" width="16" height="18" viewBox="0 0 16 18"><path d="M1.500 5v8.500c0 1.700 2.900 3 6.500 3s6.500-1.300 6.500-3V5" fill="#fff" stroke="#b9b9b9" stroke-width="1.200"/><path d="M1.500 10.500v3c0 1.700 2.900 3 6.500 3s6.500-1.300 6.500-3v-3c-1.500 1.300-3.500 1.800-6.500 1.800s-5-.5-6.500-1.800z" fill="#cdcdcd" stroke="#b9b9b9" stroke-width="0.600"/><path d="M5 11.800v3.400c1.800.6 4.200.6 6 0v-3.400c-1.800.5-4.200.5-6 0z" fill="#fff"/><ellipse cx="8" cy="5" rx="6.500" ry="3" fill="#fff" stroke="#b9b9b9" stroke-width="1.200"/></svg>
<span style="position:absolute;left:105.0px;top:928.8px;font-size:14.2px;line-height:17.0px;color:#9b9b9b;white-space:nowrap;transform-origin:0 50%;transform:scaleX(0.9028);">Fastened 20 (1)</span>
<svg style="position:absolute;left:63.5px;top:955px;" width="10" height="16" viewBox="0 0 10 16"><path d="M2.400 2.800l4.700 5.200-4.700 5.200" fill="none" stroke="#555" stroke-width="2.200"/></svg>
<svg style="position:absolute;left:84.5px;top:954px;" width="16" height="18" viewBox="0 0 16 18"><path d="M1.500 5v8.500c0 1.700 2.900 3 6.500 3s6.500-1.300 6.500-3V5" fill="#fff" stroke="#b9b9b9" stroke-width="1.200"/><path d="M1.500 10.500v3c0 1.700 2.900 3 6.500 3s6.500-1.300 6.500-3v-3c-1.500 1.300-3.500 1.800-6.500 1.800s-5-.5-6.500-1.800z" fill="#cdcdcd" stroke="#b9b9b9" stroke-width="0.600"/><path d="M5 11.800v3.400c1.800.6 4.200.6 6 0v-3.400c-1.800.5-4.200.5-6 0z" fill="#fff"/><ellipse cx="8" cy="5" rx="6.500" ry="3" fill="#fff" stroke="#b9b9b9" stroke-width="1.200"/></svg>
<span style="position:absolute;left:105.0px;top:954.8px;font-size:14.2px;line-height:17.0px;color:#9b9b9b;white-space:nowrap;transform-origin:0 50%;transform:scaleX(0.8879);">Fastened 21 (1)</span>
<svg style="position:absolute;left:63.5px;top:981px;" width="10" height="16" viewBox="0 0 10 16"><path d="M2.400 2.800l4.700 5.200-4.700 5.200" fill="none" stroke="#555" stroke-width="2.200"/></svg>
<svg style="position:absolute;left:84.5px;top:980px;" width="16" height="18" viewBox="0 0 16 18"><path d="M1.500 5v8.500c0 1.700 2.900 3 6.500 3s6.500-1.300 6.500-3V5" fill="#fff" stroke="#b9b9b9" stroke-width="1.200"/><path d="M1.500 10.500v3c0 1.700 2.900 3 6.500 3s6.500-1.300 6.500-3v-3c-1.500 1.300-3.500 1.800-6.500 1.800s-5-.5-6.500-1.800z" fill="#cdcdcd" stroke="#b9b9b9" stroke-width="0.600"/><path d="M5 11.800v3.400c1.800.6 4.200.6 6 0v-3.400c-1.800.5-4.200.5-6 0z" fill="#fff"/><ellipse cx="8" cy="5" rx="6.500" ry="3" fill="#fff" stroke="#b9b9b9" stroke-width="1.200"/></svg>
<span style="position:absolute;left:105.0px;top:980.8px;font-size:14.2px;line-height:17.0px;color:#9b9b9b;white-space:nowrap;transform-origin:0 50%;transform:scaleX(0.9057);">Fastened 23</span>
<svg style="position:absolute;left:63.5px;top:1007px;" width="10" height="16" viewBox="0 0 10 16"><path d="M2.400 2.800l4.700 5.200-4.700 5.200" fill="none" stroke="#555" stroke-width="2.200"/></svg>
<svg style="position:absolute;left:84.5px;top:1006px;" width="16" height="18" viewBox="0 0 16 18"><path d="M1.500 5v8.500c0 1.700 2.900 3 6.500 3s6.500-1.300 6.500-3V5" fill="#fff" stroke="#b9b9b9" stroke-width="1.200"/><path d="M1.500 10.500v3c0 1.700 2.900 3 6.500 3s6.500-1.300 6.500-3v-3c-1.500 1.300-3.500 1.800-6.500 1.800s-5-.5-6.500-1.800z" fill="#cdcdcd" stroke="#b9b9b9" stroke-width="0.600"/><path d="M5 11.800v3.400c1.800.6 4.200.6 6 0v-3.400c-1.800.5-4.200.5-6 0z" fill="#fff"/><ellipse cx="8" cy="5" rx="6.500" ry="3" fill="#fff" stroke="#b9b9b9" stroke-width="1.200"/></svg>
<span style="position:absolute;left:105.0px;top:1006.8px;font-size:14.2px;line-height:17.0px;color:#9b9b9b;white-space:nowrap;transform-origin:0 50%;transform:scaleX(0.9057);">Fastened 24</span>
<svg style="position:absolute;left:63.5px;top:1033px;" width="10" height="16" viewBox="0 0 10 16"><path d="M2.400 2.800l4.700 5.200-4.700 5.200" fill="none" stroke="#555" stroke-width="2.200"/></svg>
<svg style="position:absolute;left:84.5px;top:1032px;" width="16" height="18" viewBox="0 0 16 18"><path d="M1.500 5v8.500c0 1.700 2.900 3 6.500 3s6.500-1.300 6.500-3V5" fill="#fff" stroke="#b9b9b9" stroke-width="1.200"/><path d="M1.500 10.500v3c0 1.700 2.900 3 6.500 3s6.500-1.300 6.500-3v-3c-1.500 1.300-3.500 1.800-6.500 1.800s-5-.5-6.500-1.800z" fill="#cdcdcd" stroke="#b9b9b9" stroke-width="0.600"/><path d="M5 11.800v3.400c1.800.6 4.200.6 6 0v-3.400c-1.800.5-4.200.5-6 0z" fill="#fff"/><ellipse cx="8" cy="5" rx="6.500" ry="3" fill="#fff" stroke="#b9b9b9" stroke-width="1.200"/></svg>
<span style="position:absolute;left:105.0px;top:1032.8px;font-size:14.2px;line-height:17.0px;color:#9b9b9b;white-space:nowrap;transform-origin:0 50%;transform:scaleX(0.9057);">Fastened 25</span>
<div style="position:absolute;left:235.500px;top:156px;width:2.500px;height:472px;background:#6e6e6e"></div>
<div style="position:absolute;left:246px;top:537.500px;width:32px;height:35px;background:#fff;border:1px solid #cfcfcf;border-left:none;box-sizing:border-box"></div>
<svg style="position:absolute;left:252px;top:545px;" width="20" height="20" viewBox="0 0 20 20"><g stroke="#333" stroke-width="1.500" fill="none"><path d="M2.500 5v13.500"/><path d="M6 7h11M6 11h11M6 15h11M6 18.500h11" stroke-width="1.300"/><path d="M1 2.500l2.500 2.500 3-3.500" stroke-width="1.400"/></g></svg>
<svg style="position:absolute;left:0;top:0" width="1919" height="1079" viewBox="0 0 1919 1079"><defs><linearGradient id="gV" x1="0" x2="0" y1="0" y2="1"><stop offset="0" stop-color="#9b9b9b"/><stop offset="0.35" stop-color="#c4c4c4"/><stop offset="0.6" stop-color="#b2b2b2"/><stop offset="1" stop-color="#7c7c7c"/></linearGradient><linearGradient id="gH" x1="0" x2="1" y1="0" y2="0"><stop offset="0" stop-color="#7f7f7f"/><stop offset="0.3" stop-color="#b4b4b4"/><stop offset="0.55" stop-color="#cfcfcf"/><stop offset="0.8" stop-color="#a6a6a6"/><stop offset="1" stop-color="#8a8a8a"/></linearGradient><linearGradient id="gHr" x1="1" x2="0" y1="0" y2="0"><stop offset="0" stop-color="#7f7f7f"/><stop offset="0.3" stop-color="#b4b4b4"/><stop offset="0.55" stop-color="#cfcfcf"/><stop offset="0.8" stop-color="#a6a6a6"/><stop offset="1" stop-color="#8a8a8a"/></linearGradient><linearGradient id="gD1" x1="0" x2="1" y1="0" y2="1"><stop offset="0" stop-color="#9b9b9b"/><stop offset="0.35" stop-color="#c4c4c4"/><stop offset="0.6" stop-color="#b2b2b2"/><stop offset="1" stop-color="#7c7c7c"/></linearGradient><linearGradient id="gD2" x1="1" x2="0" y1="0" y2="1"><stop offset="0" stop-color="#9b9b9b"/><stop offset="0.35" stop-color="#c4c4c4"/><stop offset="0.6" stop-color="#b2b2b2"/><stop offset="1" stop-color="#7c7c7c"/></linearGradient><linearGradient id="gB" x1="0" x2="0" y1="0" y2="1"><stop offset="0" stop-color="#6a6a6a"/><stop offset="0.5" stop-color="#a8a8a8"/><stop offset="1" stop-color="#8c8c8c"/></linearGradient><g id="wheel"><path d="M534 372 v44 a134 66 0 0 0 268 0 v-44z" fill="#171717"/><path d="M536 398a132 64 0 0 0 264 0" fill="none" stroke="#000" stroke-width="1.500"/><path d="M586.4 448.3Q596.9 445.7 612.7 451.8Q628.4 458.0 627.6 468.5Q626.7 479.0 617.0 475.5Q607.4 472.0 593.3 466.7Q579.3 461.4 577.6 456.2Q575.9 450.9 586.4 448.3z" fill="url(#gB)" stroke="#2a2a2a" stroke-width="0.800"/><path d="M701.9 459.8Q729.0 455.5 730.8 461.6Q732.6 467.7 730.8 473.0Q729.0 478.2 704.5 481.7Q680.0 485.2 675.6 479.9Q671.3 474.7 673.0 469.4Q674.7 464.2 701.9 459.8z" fill="url(#gB)" stroke="#2a2a2a" stroke-width="0.800"/><path d="M780.4 428.1Q792.6 417.6 797.0 421.1Q801.4 424.6 799.6 435.1Q797.9 445.6 786.5 453.5Q775.1 461.4 772.5 457.0Q769.8 452.6 769.0 445.6Q768.1 438.6 780.4 428.1z" fill="url(#gB)" stroke="#2a2a2a" stroke-width="0.800"/><path d="M536.3 406.5Q542.4 411.8 545.9 420.6Q549.5 429.3 549.5 438.9Q549.5 448.5 542.4 444.2Q535.4 439.8 531.9 429.3Q528.4 418.8 529.3 410.0Q530.1 401.2 536.3 406.5z" fill="url(#gB)" stroke="#2a2a2a" stroke-width="0.800"/><path d="M803.3 390.9Q806.8 385.7 806.8 396.2Q806.8 406.8 804.2 410.3Q801.6 413.8 800.7 405.0Q799.7 396.2 803.3 390.9z" fill="url(#gB)" stroke="#2a2a2a" stroke-width="0.800"/><path d="M534 370 v18 a134 66 0 0 0 268 0 v-18z" fill="#1d1d1d"/><path d="M534.500 388a133.500 66 0 0 0 267 0" fill="none" stroke="#050505" stroke-width="1.200"/><ellipse cx="668.0" cy="370.0" rx="134.0" ry="65.5" fill="#1c1c1c" stroke="#050505" stroke-width="1" /><path d="M545 384a123 58 0 0 0 246 0" fill="none" stroke="#3c3c3c" stroke-width="1.300"/><ellipse cx="668.0" cy="368.0" rx="122.0" ry="58.5" fill="#232323" stroke="#0a0a0a" stroke-width="0.8" /><ellipse cx="668.0" cy="365.0" rx="99.0" ry="52.0" fill="#0f0f0f" stroke="#000" stroke-width="1.2" /><polygon points="682.5,347.9 707.1,318.9 694.5,316.5 681.4,315.1 668.0,314.6 654.6,315.1 641.5,316.5 628.9,318.9 653.5,347.9" fill="#1b1b1b" stroke="none" stroke-width="0" stroke-linejoin="round" /><polygon points="653.5,382.1 628.9,411.1 641.5,413.5 654.6,414.9 668.0,415.4 681.4,414.9 694.5,413.5 707.1,411.1 682.5,382.1" fill="#1a1a1a" stroke="none" stroke-width="0" stroke-linejoin="round" /><polygon points="703.4,363.0 763.5,359.7 761.2,352.8 757.0,346.1 751.2,339.8 743.7,333.9 734.7,328.7 724.4,324.2 688.9,349.9" fill="#121212" stroke="none" stroke-width="0" stroke-linejoin="round" /><polygon points="647.1,349.9 611.6,324.2 601.3,328.7 592.3,333.9 584.8,339.8 579.0,346.1 574.8,352.8 572.5,359.7 632.6,363.0" fill="#121212" stroke="none" stroke-width="0" stroke-linejoin="round" /><polygon points="632.6,367.0 572.5,370.3 574.8,377.2 579.0,383.9 584.8,390.2 592.3,396.1 601.3,401.3 611.6,405.8 647.1,380.1" fill="#101010" stroke="none" stroke-width="0" stroke-linejoin="round" /><polygon points="688.9,380.1 724.4,405.8 734.7,401.3 743.7,396.1 751.2,390.2 757.0,383.9 761.2,377.2 763.5,370.3 703.4,367.0" fill="#101010" stroke="none" stroke-width="0" stroke-linejoin="round" /><polygon points="707.1,318.9 684.7,315.3 668.0,333.8 688.1,341.2" fill="#151515" stroke="none" stroke-width="0" stroke-linejoin="round" /><polygon points="647.9,388.8 629.7,410.1 654.6,414.9 668.0,393.6" fill="#222" stroke="none" stroke-width="0" stroke-linejoin="round" /><polygon points="620.8,350.7 586.6,340.3 573.9,358.1 619.0,361.4" fill="#1e1e1e" stroke="none" stroke-width="0" stroke-linejoin="round" /><polygon points="715.2,350.7 749.4,340.3 762.1,358.1 717.0,361.4" fill="#1c1c1c" stroke="none" stroke-width="0" stroke-linejoin="round" /><polygon points="620.8,379.3 586.6,389.7 573.9,371.9 619.0,368.6" fill="#1b1b1b" stroke="none" stroke-width="0" stroke-linejoin="round" /><polygon points="715.2,379.3 749.4,389.7 762.1,371.9 717.0,368.6" fill="#1b1b1b" stroke="none" stroke-width="0" stroke-linejoin="round" /><polygon points="602.9,330.8 626.3,346.6 625.1,352.0 585.4,347.5" fill="#2a2a2a" stroke="none" stroke-width="0" stroke-linejoin="round" /><polygon points="733.1,330.8 709.7,346.6 710.9,352.0 750.6,347.5" fill="#2a2a2a" stroke="none" stroke-width="0" stroke-linejoin="round" /><polygon points="602.9,399.2 626.3,383.4 625.1,378.0 585.4,382.5" fill="#262626" stroke="none" stroke-width="0" stroke-linejoin="round" /><polygon points="733.1,399.2 709.7,383.4 710.9,378.0 750.6,382.5" fill="#262626" stroke="none" stroke-width="0" stroke-linejoin="round" /><polygon points="656.7,393.0 679.3,393.0 684.0,412.6 652.0,412.6" fill="#232323" stroke="none" stroke-width="0" stroke-linejoin="round" /><polygon points="691.8,318.3 644.2,318.3 659.5,333.1 676.5,333.1" fill="#222" stroke="none" stroke-width="0" stroke-linejoin="round" /><path d="M668.0 365.0L716.0 321.3" stroke="#0a0a0a" stroke-width="10" fill="none"/><path d="M668.0 365.0L716.0 321.3" stroke="#303030" stroke-width="7.500" fill="none"/><path d="M668.0 365.0L716.0 321.3" stroke="#161616" stroke-width="2" fill="none"/><path d="M668.0 365.0L620.0 321.3" stroke="#0a0a0a" stroke-width="10" fill="none"/><path d="M668.0 365.0L620.0 321.3" stroke="#303030" stroke-width="7.500" fill="none"/><path d="M668.0 365.0L620.0 321.3" stroke="#161616" stroke-width="2" fill="none"/><path d="M668.0 365.0L620.0 408.7" stroke="#0a0a0a" stroke-width="10" fill="none"/><path d="M668.0 365.0L620.0 408.7" stroke="#303030" stroke-width="7.500" fill="none"/><path d="M668.0 365.0L620.0 408.7" stroke="#161616" stroke-width="2" fill="none"/><path d="M668.0 365.0L716.0 408.7" stroke="#0a0a0a" stroke-width="10" fill="none"/><path d="M668.0 365.0L716.0 408.7" stroke="#303030" stroke-width="7.500" fill="none"/><path d="M668.0 365.0L716.0 408.7" stroke="#161616" stroke-width="2" fill="none"/><path d="M668.0 364.0L765.0 364.0" stroke="#2c2c2c" stroke-width="11" fill="none"/><path d="M668.0 364.0L765.0 364.0" stroke="#0d0d0d" stroke-width="7.500" fill="none"/><path d="M668.0 364.0L571.0 364.0" stroke="#2c2c2c" stroke-width="11" fill="none"/><path d="M668.0 364.0L571.0 364.0" stroke="#0d0d0d" stroke-width="7.500" fill="none"/><ellipse cx="668.0" cy="364.0" rx="52.0" ry="27.0" fill="none" stroke="#2a2a2a" stroke-width="1.4" /><ellipse cx="668.0" cy="362.0" rx="33.0" ry="16.5" fill="#171717" stroke="#000" stroke-width="1.2" /><ellipse cx="668.0" cy="362.0" rx="27.0" ry="13.0" fill="#101010" stroke="#2c2c2c" stroke-width="0.9" /><path d="M665.0 298.1Q675.9 296.7 694.0 298.5Q712.2 300.3 714.0 303.5Q715.8 306.7 713.4 311.7Q711.1 316.6 693.5 314.8Q675.9 313.0 665.4 312.6Q655.0 312.2 654.5 305.8Q654.1 299.4 665.0 298.1z" fill="url(#gV)" stroke="#303030" stroke-width="0.800"/><path d="M742.2 316.7Q748.2 313.5 759.1 316.7Q770.0 319.8 780.9 327.6Q791.8 335.3 793.6 339.8Q795.4 344.3 790.0 343.9Q784.5 343.5 779.1 343.9Q773.6 344.3 766.4 338.9Q759.1 333.4 747.7 326.6Q736.2 319.8 742.2 316.7z" fill="url(#gD2)" stroke="#303030" stroke-width="0.800"/><path d="M788.0 357.5Q793.5 356.5 799.9 362.0Q806.2 367.4 807.2 376.5Q808.1 385.6 804.4 392.9Q800.8 400.1 797.1 396.5Q793.5 392.9 782.6 391.1Q771.7 389.2 772.6 381.1Q773.5 372.9 778.1 365.6Q782.6 358.4 788.0 357.5z" fill="url(#gHr)" stroke="#303030" stroke-width="0.800"/><path d="M729.2 412.5Q742.8 407.1 753.7 404.8Q764.6 402.6 768.3 406.7Q771.9 410.8 772.9 417.1Q773.8 423.4 771.1 429.8Q768.3 436.2 748.3 441.6Q728.3 447.1 725.6 438.9Q722.9 430.7 719.2 424.3Q715.6 418.0 729.2 412.5z" fill="url(#gD1)" stroke="#303030" stroke-width="0.800"/><path d="M628.9 420.6Q635.2 418.8 657.0 420.6Q678.8 422.4 680.6 426.0Q682.4 429.7 681.5 437.8Q680.6 446.0 678.8 448.3Q677.0 450.6 650.7 448.3Q624.3 446.0 623.0 440.6Q621.6 435.1 622.1 428.7Q622.5 422.4 628.9 420.6z" fill="url(#gV)" stroke="#303030" stroke-width="0.800"/><path d="M546.2 395.6Q550.3 390.2 554.8 389.3Q559.3 388.3 570.2 394.7Q581.1 401.1 590.2 407.4Q599.3 413.7 592.0 417.4Q584.7 421.0 581.1 429.2Q577.5 437.4 562.0 426.5Q546.6 415.6 544.3 408.3Q542.1 401.1 546.2 395.6z" fill="url(#gD2)" stroke="#303030" stroke-width="0.800"/><path d="M532.9 354.6Q537.4 345.6 542.9 343.3Q548.3 341.0 554.7 344.2Q561.1 347.3 563.3 351.0Q565.6 354.6 563.3 361.9Q561.1 369.1 558.3 373.2Q555.6 377.3 542.0 375.1Q528.4 372.8 528.4 368.3Q528.4 363.7 532.9 354.6z" fill="url(#gH)" stroke="#303030" stroke-width="0.800"/><path d="M570.6 319.1Q578.7 314.6 596.9 309.6Q615.0 304.6 618.7 306.8Q622.3 309.1 623.7 313.2Q625.1 317.3 614.6 319.6Q604.1 321.9 591.4 328.7Q578.7 335.5 572.4 333.2Q566.0 330.9 564.2 327.3Q562.4 323.6 570.6 319.1z" fill="url(#gD1)" stroke="#303030" stroke-width="0.800"/><path d="M586.0 404.0Q590.0 405.0 594.0 409.2Q598.0 413.5 594.0 415.8Q590.0 418.0 586.0 419.5Q582.0 421.0 584.0 416.5Q586.0 412.0 584.0 407.5Q582.0 403.0 586.0 404.0z" fill="#5c5c5c" stroke="#2a2a2a" stroke-width="0.600"/><path d="M719.0 418.0Q722.0 417.0 724.5 423.5Q727.0 430.0 729.0 437.5Q731.0 445.0 728.5 444.5Q726.0 444.0 723.0 437.5Q720.0 431.0 718.0 425.0Q716.0 419.0 719.0 418.0z" fill="#5c5c5c" stroke="#2a2a2a" stroke-width="0.600"/><path d="M567.2 324.0Q570.0 324.0 575.5 329.2Q581.0 334.5 577.5 334.2Q574.0 334.0 570.5 332.5Q567.0 331.0 565.8 327.5Q564.5 324.0 567.2 324.0z" fill="#5c5c5c" stroke="#2a2a2a" stroke-width="0.600"/><path d="M777.5 342.2Q782.0 341.0 786.0 338.5Q790.0 336.0 792.0 340.0Q794.0 344.0 789.0 344.8Q784.0 345.5 778.5 344.5Q773.0 343.5 777.5 342.2z" fill="#5c5c5c" stroke="#2a2a2a" stroke-width="0.600"/><path d="M535.0 370.5Q540.0 370.0 547.0 371.5Q554.0 373.0 557.0 371.0Q560.0 369.0 558.0 373.0Q556.0 377.0 548.5 377.0Q541.0 377.0 535.5 374.0Q530.0 371.0 535.0 370.5z" fill="#5c5c5c" stroke="#2a2a2a" stroke-width="0.600"/><path d="M778.5 387.5Q784.0 387.0 789.5 389.5Q795.0 392.0 797.8 395.2Q800.5 398.5 795.2 397.8Q790.0 397.0 784.0 395.0Q778.0 393.0 775.5 390.5Q773.0 388.0 778.5 387.5z" fill="#5c5c5c" stroke="#2a2a2a" stroke-width="0.600"/></g></defs><polygon points="1124.0,422.0 1406.0,503.5 1395.0,510.0 1101.5,442.0" fill="#45a14a" stroke="#0b2b10" stroke-width="1.1" stroke-linejoin="round" /><defs><linearGradient id="bf" gradientUnits="userSpaceOnUse" x1="1101" x2="1330" y1="0" y2="0"><stop offset="0" stop-color="#27663a"/><stop offset="0.35" stop-color="#2b7238"/><stop offset="1" stop-color="#358c42"/></linearGradient></defs><polygon points="1101.5,442.0 1330.0,494.6 1330.0,600.0 1101.5,523.0" fill="url(#bf)" stroke="#0b2b10" stroke-width="1.1" stroke-linejoin="round" /><ellipse cx="1136.1" cy="438.2" rx="3.6" ry="2.0" fill="#12401a" stroke="#0a2a0f" stroke-width="0.8" transform="rotate(8 1136.08 438.232)" /><ellipse cx="1156.4" cy="443.6" rx="3.6" ry="2.0" fill="#12401a" stroke="#0a2a0f" stroke-width="0.8" transform="rotate(8 1156.43 443.613)" /><ellipse cx="1176.8" cy="449.0" rx="3.6" ry="2.0" fill="#12401a" stroke="#0a2a0f" stroke-width="0.8" transform="rotate(8 1176.79 448.994)" /><ellipse cx="1197.1" cy="454.4" rx="3.6" ry="2.0" fill="#12401a" stroke="#0a2a0f" stroke-width="0.8" transform="rotate(8 1197.14 454.374)" /><ellipse cx="1217.5" cy="459.8" rx="3.6" ry="2.0" fill="#12401a" stroke="#0a2a0f" stroke-width="0.8" transform="rotate(8 1217.49 459.755)" /><ellipse cx="1237.8" cy="465.1" rx="3.6" ry="2.0" fill="#12401a" stroke="#0a2a0f" stroke-width="0.8" transform="rotate(8 1237.85 465.136)" /><ellipse cx="1258.2" cy="470.5" rx="3.6" ry="2.0" fill="#12401a" stroke="#0a2a0f" stroke-width="0.8" transform="rotate(8 1258.2 470.517)" /><ellipse cx="1278.6" cy="475.9" rx="3.6" ry="2.0" fill="#12401a" stroke="#0a2a0f" stroke-width="0.8" transform="rotate(8 1278.56 475.898)" /><ellipse cx="1298.9" cy="481.3" rx="3.6" ry="2.0" fill="#12401a" stroke="#0a2a0f" stroke-width="0.8" transform="rotate(8 1298.91 481.278)" /><ellipse cx="1319.3" cy="486.7" rx="3.6" ry="2.0" fill="#12401a" stroke="#0a2a0f" stroke-width="0.8" transform="rotate(8 1319.27 486.659)" /><ellipse cx="1339.6" cy="492.0" rx="3.6" ry="2.0" fill="#12401a" stroke="#0a2a0f" stroke-width="0.8" transform="rotate(8 1339.62 492.04)" /><ellipse cx="1360.0" cy="497.4" rx="3.6" ry="2.0" fill="#12401a" stroke="#0a2a0f" stroke-width="0.8" transform="rotate(8 1359.98 497.421)" /><ellipse cx="1120.9" cy="468.9" rx="2.7" ry="3.4" fill="#153f1e" stroke="#0a2a0f" stroke-width="0.8" transform="rotate(-28 1120.92 468.901)" /><ellipse cx="1121.2" cy="468.7" rx="1.5" ry="1.9" fill="#3a5a48" stroke="none" stroke-width="0" transform="rotate(-28 1121.22 468.701)" /><ellipse cx="1141.3" cy="474.2" rx="2.7" ry="3.4" fill="#153f1e" stroke="#0a2a0f" stroke-width="0.8" transform="rotate(-28 1141.26 474.169)" /><ellipse cx="1141.6" cy="474.0" rx="1.5" ry="1.9" fill="#3a5a48" stroke="none" stroke-width="0" transform="rotate(-28 1141.56 473.969)" /><ellipse cx="1161.6" cy="479.4" rx="2.7" ry="3.4" fill="#153f1e" stroke="#0a2a0f" stroke-width="0.8" transform="rotate(-28 1161.6 479.436)" /><ellipse cx="1161.9" cy="479.2" rx="1.5" ry="1.9" fill="#3a5a48" stroke="none" stroke-width="0" transform="rotate(-28 1161.9 479.236)" /><ellipse cx="1181.9" cy="484.7" rx="2.7" ry="3.4" fill="#153f1e" stroke="#0a2a0f" stroke-width="0.8" transform="rotate(-28 1181.93 484.704)" /><ellipse cx="1182.2" cy="484.5" rx="1.5" ry="1.9" fill="#3a5a48" stroke="none" stroke-width="0" transform="rotate(-28 1182.23 484.504)" /><ellipse cx="1202.3" cy="490.0" rx="2.7" ry="3.4" fill="#153f1e" stroke="#0a2a0f" stroke-width="0.8" transform="rotate(-28 1202.27 489.972)" /><ellipse cx="1202.6" cy="489.8" rx="1.5" ry="1.9" fill="#3a5a48" stroke="none" stroke-width="0" transform="rotate(-28 1202.57 489.772)" /><ellipse cx="1222.6" cy="495.2" rx="2.7" ry="3.4" fill="#153f1e" stroke="#0a2a0f" stroke-width="0.8" transform="rotate(-28 1222.61 495.24)" /><ellipse cx="1222.9" cy="495.0" rx="1.5" ry="1.9" fill="#3a5a48" stroke="none" stroke-width="0" transform="rotate(-28 1222.9 495.04)" /><ellipse cx="1242.9" cy="500.5" rx="2.7" ry="3.4" fill="#153f1e" stroke="#0a2a0f" stroke-width="0.8" transform="rotate(-28 1242.94 500.507)" /><ellipse cx="1243.2" cy="500.3" rx="1.5" ry="1.9" fill="#3a5a48" stroke="none" stroke-width="0" transform="rotate(-28 1243.24 500.307)" /><ellipse cx="1263.3" cy="505.8" rx="2.7" ry="3.4" fill="#153f1e" stroke="#0a2a0f" stroke-width="0.8" transform="rotate(-28 1263.28 505.775)" /><ellipse cx="1263.6" cy="505.6" rx="1.5" ry="1.9" fill="#3a5a48" stroke="none" stroke-width="0" transform="rotate(-28 1263.58 505.575)" /><ellipse cx="1120.9" cy="492.2" rx="2.7" ry="3.4" fill="#153f1e" stroke="#0a2a0f" stroke-width="0.8" transform="rotate(-28 1120.92 492.162)" /><ellipse cx="1121.2" cy="492.0" rx="1.5" ry="1.9" fill="#3a5a48" stroke="none" stroke-width="0" transform="rotate(-28 1121.22 491.962)" /><ellipse cx="1141.3" cy="498.0" rx="2.7" ry="3.4" fill="#153f1e" stroke="#0a2a0f" stroke-width="0.8" transform="rotate(-28 1141.26 498.037)" /><ellipse cx="1141.6" cy="497.8" rx="1.5" ry="1.9" fill="#3a5a48" stroke="none" stroke-width="0" transform="rotate(-28 1141.56 497.837)" /><ellipse cx="1161.6" cy="503.9" rx="2.7" ry="3.4" fill="#153f1e" stroke="#0a2a0f" stroke-width="0.8" transform="rotate(-28 1161.6 503.913)" /><ellipse cx="1161.9" cy="503.7" rx="1.5" ry="1.9" fill="#3a5a48" stroke="none" stroke-width="0" transform="rotate(-28 1161.9 503.713)" /><ellipse cx="1181.9" cy="509.8" rx="2.7" ry="3.4" fill="#153f1e" stroke="#0a2a0f" stroke-width="0.8" transform="rotate(-28 1181.93 509.789)" /><ellipse cx="1182.2" cy="509.6" rx="1.5" ry="1.9" fill="#3a5a48" stroke="none" stroke-width="0" transform="rotate(-28 1182.23 509.589)" /><ellipse cx="1202.3" cy="515.7" rx="2.7" ry="3.4" fill="#153f1e" stroke="#0a2a0f" stroke-width="0.8" transform="rotate(-28 1202.27 515.665)" /><ellipse cx="1202.6" cy="515.5" rx="1.5" ry="1.9" fill="#3a5a48" stroke="none" stroke-width="0" transform="rotate(-28 1202.57 515.465)" /><ellipse cx="1222.6" cy="521.5" rx="2.7" ry="3.4" fill="#153f1e" stroke="#0a2a0f" stroke-width="0.8" transform="rotate(-28 1222.61 521.541)" /><ellipse cx="1222.9" cy="521.3" rx="1.5" ry="1.9" fill="#3a5a48" stroke="none" stroke-width="0" transform="rotate(-28 1222.9 521.341)" /><ellipse cx="1242.9" cy="527.4" rx="2.7" ry="3.4" fill="#153f1e" stroke="#0a2a0f" stroke-width="0.8" transform="rotate(-28 1242.94 527.416)" /><ellipse cx="1243.2" cy="527.2" rx="1.5" ry="1.9" fill="#3a5a48" stroke="none" stroke-width="0" transform="rotate(-28 1243.24 527.216)" /><ellipse cx="1263.3" cy="533.3" rx="2.7" ry="3.4" fill="#153f1e" stroke="#0a2a0f" stroke-width="0.8" transform="rotate(-28 1263.28 533.292)" /><ellipse cx="1263.6" cy="533.1" rx="1.5" ry="1.9" fill="#3a5a48" stroke="none" stroke-width="0" transform="rotate(-28 1263.58 533.092)" /><ellipse cx="1120.9" cy="515.4" rx="2.7" ry="3.4" fill="#153f1e" stroke="#0a2a0f" stroke-width="0.8" transform="rotate(-28 1120.92 515.422)" /><ellipse cx="1121.2" cy="515.2" rx="1.5" ry="1.9" fill="#3a5a48" stroke="none" stroke-width="0" transform="rotate(-28 1121.22 515.222)" /><ellipse cx="1141.3" cy="521.9" rx="2.7" ry="3.4" fill="#153f1e" stroke="#0a2a0f" stroke-width="0.8" transform="rotate(-28 1141.26 521.906)" /><ellipse cx="1141.6" cy="521.7" rx="1.5" ry="1.9" fill="#3a5a48" stroke="none" stroke-width="0" transform="rotate(-28 1141.56 521.706)" /><ellipse cx="1161.6" cy="528.4" rx="2.7" ry="3.4" fill="#153f1e" stroke="#0a2a0f" stroke-width="0.8" transform="rotate(-28 1161.6 528.39)" /><ellipse cx="1161.9" cy="528.2" rx="1.5" ry="1.9" fill="#3a5a48" stroke="none" stroke-width="0" transform="rotate(-28 1161.9 528.19)" /><ellipse cx="1181.9" cy="534.9" rx="2.7" ry="3.4" fill="#153f1e" stroke="#0a2a0f" stroke-width="0.8" transform="rotate(-28 1181.93 534.874)" /><ellipse cx="1182.2" cy="534.7" rx="1.5" ry="1.9" fill="#3a5a48" stroke="none" stroke-width="0" transform="rotate(-28 1182.23 534.674)" /><ellipse cx="1202.3" cy="541.4" rx="2.7" ry="3.4" fill="#153f1e" stroke="#0a2a0f" stroke-width="0.8" transform="rotate(-28 1202.27 541.358)" /><ellipse cx="1202.6" cy="541.2" rx="1.5" ry="1.9" fill="#3a5a48" stroke="none" stroke-width="0" transform="rotate(-28 1202.57 541.158)" /><ellipse cx="1222.6" cy="547.8" rx="2.7" ry="3.4" fill="#153f1e" stroke="#0a2a0f" stroke-width="0.8" transform="rotate(-28 1222.61 547.842)" /><ellipse cx="1222.9" cy="547.6" rx="1.5" ry="1.9" fill="#3a5a48" stroke="none" stroke-width="0" transform="rotate(-28 1222.9 547.642)" /><ellipse cx="1242.9" cy="554.3" rx="2.7" ry="3.4" fill="#153f1e" stroke="#0a2a0f" stroke-width="0.8" transform="rotate(-28 1242.94 554.325)" /><ellipse cx="1243.2" cy="554.1" rx="1.5" ry="1.9" fill="#3a5a48" stroke="none" stroke-width="0" transform="rotate(-28 1243.24 554.125)" /><ellipse cx="1263.3" cy="560.8" rx="2.7" ry="3.4" fill="#153f1e" stroke="#0a2a0f" stroke-width="0.8" transform="rotate(-28 1263.28 560.809)" /><ellipse cx="1263.6" cy="560.6" rx="1.5" ry="1.9" fill="#3a5a48" stroke="none" stroke-width="0" transform="rotate(-28 1263.58 560.609)" /><polygon points="760.0,692.5 798.7,707.5 1124.0,422.0 1085.0,410.0" fill="#45a14a" stroke="#0b2b10" stroke-width="1.1" stroke-linejoin="round" /><polygon points="825.0,684.2 1101.5,442.0 1101.5,523.0 903.0,705.0" fill="#3c9644" stroke="#0b2b10" stroke-width="1.1" stroke-linejoin="round" /><ellipse cx="790.7" cy="690.1" rx="3.7" ry="2.1" fill="#12401a" stroke="#0a2a0f" stroke-width="0.8" transform="rotate(-8 790.73 690.06)" /><ellipse cx="802.4" cy="679.9" rx="3.7" ry="2.1" fill="#12401a" stroke="#0a2a0f" stroke-width="0.8" transform="rotate(-8 802.361 679.902)" /><ellipse cx="814.0" cy="669.7" rx="3.7" ry="2.1" fill="#12401a" stroke="#0a2a0f" stroke-width="0.8" transform="rotate(-8 813.991 669.743)" /><ellipse cx="825.6" cy="659.6" rx="3.7" ry="2.1" fill="#12401a" stroke="#0a2a0f" stroke-width="0.8" transform="rotate(-8 825.621 659.585)" /><ellipse cx="837.3" cy="649.4" rx="3.7" ry="2.1" fill="#12401a" stroke="#0a2a0f" stroke-width="0.8" transform="rotate(-8 837.252 649.426)" /><ellipse cx="848.9" cy="639.3" rx="3.7" ry="2.1" fill="#12401a" stroke="#0a2a0f" stroke-width="0.8" transform="rotate(-8 848.882 639.268)" /><ellipse cx="860.5" cy="629.1" rx="3.7" ry="2.1" fill="#12401a" stroke="#0a2a0f" stroke-width="0.8" transform="rotate(-8 860.512 629.109)" /><ellipse cx="872.1" cy="619.0" rx="3.7" ry="2.1" fill="#12401a" stroke="#0a2a0f" stroke-width="0.8" transform="rotate(-8 872.143 618.951)" /><ellipse cx="883.8" cy="608.8" rx="3.7" ry="2.1" fill="#12401a" stroke="#0a2a0f" stroke-width="0.8" transform="rotate(-8 883.773 608.792)" /><ellipse cx="895.4" cy="598.6" rx="3.7" ry="2.1" fill="#12401a" stroke="#0a2a0f" stroke-width="0.8" transform="rotate(-8 895.404 598.634)" /><ellipse cx="907.0" cy="588.5" rx="3.7" ry="2.1" fill="#12401a" stroke="#0a2a0f" stroke-width="0.8" transform="rotate(-8 907.034 588.475)" /><ellipse cx="918.7" cy="578.3" rx="3.7" ry="2.1" fill="#12401a" stroke="#0a2a0f" stroke-width="0.8" transform="rotate(-8 918.664 578.317)" /><ellipse cx="930.3" cy="568.2" rx="3.7" ry="2.1" fill="#12401a" stroke="#0a2a0f" stroke-width="0.8" transform="rotate(-8 930.295 568.158)" /><ellipse cx="941.9" cy="558.0" rx="3.7" ry="2.1" fill="#12401a" stroke="#0a2a0f" stroke-width="0.8" transform="rotate(-8 941.925 558)" /><ellipse cx="953.6" cy="547.8" rx="3.7" ry="2.1" fill="#12401a" stroke="#0a2a0f" stroke-width="0.8" transform="rotate(-8 953.555 547.842)" /><ellipse cx="965.2" cy="537.7" rx="3.7" ry="2.1" fill="#12401a" stroke="#0a2a0f" stroke-width="0.8" transform="rotate(-8 965.186 537.683)" /><ellipse cx="976.8" cy="527.5" rx="3.7" ry="2.1" fill="#12401a" stroke="#0a2a0f" stroke-width="0.8" transform="rotate(-8 976.816 527.525)" /><ellipse cx="988.4" cy="517.4" rx="3.7" ry="2.1" fill="#12401a" stroke="#0a2a0f" stroke-width="0.8" transform="rotate(-8 988.446 517.366)" /><ellipse cx="1000.1" cy="507.2" rx="3.7" ry="2.1" fill="#12401a" stroke="#0a2a0f" stroke-width="0.8" transform="rotate(-8 1000.08 507.208)" /><ellipse cx="1011.7" cy="497.0" rx="3.7" ry="2.1" fill="#12401a" stroke="#0a2a0f" stroke-width="0.8" transform="rotate(-8 1011.71 497.049)" /><ellipse cx="1023.3" cy="486.9" rx="3.7" ry="2.1" fill="#12401a" stroke="#0a2a0f" stroke-width="0.8" transform="rotate(-8 1023.34 486.891)" /><ellipse cx="1035.0" cy="476.7" rx="3.7" ry="2.1" fill="#12401a" stroke="#0a2a0f" stroke-width="0.8" transform="rotate(-8 1034.97 476.732)" /><ellipse cx="1046.6" cy="466.6" rx="3.7" ry="2.1" fill="#12401a" stroke="#0a2a0f" stroke-width="0.8" transform="rotate(-8 1046.6 466.574)" /><ellipse cx="1058.2" cy="456.4" rx="3.7" ry="2.1" fill="#12401a" stroke="#0a2a0f" stroke-width="0.8" transform="rotate(-8 1058.23 456.415)" /><ellipse cx="1069.9" cy="446.3" rx="3.7" ry="2.1" fill="#12401a" stroke="#0a2a0f" stroke-width="0.8" transform="rotate(-8 1069.86 446.257)" /><ellipse cx="1081.5" cy="436.1" rx="3.7" ry="2.1" fill="#12401a" stroke="#0a2a0f" stroke-width="0.8" transform="rotate(-8 1081.49 436.098)" /><ellipse cx="1093.1" cy="425.9" rx="3.7" ry="2.1" fill="#12401a" stroke="#0a2a0f" stroke-width="0.8" transform="rotate(-8 1093.12 425.94)" /><ellipse cx="854.6" cy="676.2" rx="1.7" ry="3.5" fill="#12401a" stroke="#0a2a0f" stroke-width="0.8" transform="rotate(22 854.573 676.245)" /><ellipse cx="866.6" cy="665.6" rx="1.7" ry="3.5" fill="#12401a" stroke="#0a2a0f" stroke-width="0.8" transform="rotate(22 866.595 665.63)" /><ellipse cx="878.6" cy="655.0" rx="1.7" ry="3.5" fill="#12401a" stroke="#0a2a0f" stroke-width="0.8" transform="rotate(22 878.617 655.014)" /><ellipse cx="890.6" cy="644.4" rx="1.7" ry="3.5" fill="#12401a" stroke="#0a2a0f" stroke-width="0.8" transform="rotate(22 890.639 644.399)" /><ellipse cx="902.7" cy="633.8" rx="1.7" ry="3.5" fill="#12401a" stroke="#0a2a0f" stroke-width="0.8" transform="rotate(22 902.66 633.783)" /><ellipse cx="914.7" cy="623.2" rx="1.7" ry="3.5" fill="#12401a" stroke="#0a2a0f" stroke-width="0.8" transform="rotate(22 914.682 623.167)" /><ellipse cx="926.7" cy="612.6" rx="1.7" ry="3.5" fill="#12401a" stroke="#0a2a0f" stroke-width="0.8" transform="rotate(22 926.704 612.552)" /><ellipse cx="938.7" cy="601.9" rx="1.7" ry="3.5" fill="#12401a" stroke="#0a2a0f" stroke-width="0.8" transform="rotate(22 938.726 601.936)" /><ellipse cx="950.7" cy="591.3" rx="1.7" ry="3.5" fill="#12401a" stroke="#0a2a0f" stroke-width="0.8" transform="rotate(22 950.747 591.32)" /><ellipse cx="962.8" cy="580.7" rx="1.7" ry="3.5" fill="#12401a" stroke="#0a2a0f" stroke-width="0.8" transform="rotate(22 962.769 580.705)" /><ellipse cx="974.8" cy="570.1" rx="1.7" ry="3.5" fill="#12401a" stroke="#0a2a0f" stroke-width="0.8" transform="rotate(22 974.791 570.089)" /><ellipse cx="986.8" cy="559.5" rx="1.7" ry="3.5" fill="#12401a" stroke="#0a2a0f" stroke-width="0.8" transform="rotate(22 986.813 559.473)" /><ellipse cx="998.8" cy="548.9" rx="1.7" ry="3.5" fill="#12401a" stroke="#0a2a0f" stroke-width="0.8" transform="rotate(22 998.834 548.858)" /><ellipse cx="1010.9" cy="538.2" rx="1.7" ry="3.5" fill="#12401a" stroke="#0a2a0f" stroke-width="0.8" transform="rotate(22 1010.86 538.242)" /><ellipse cx="1022.9" cy="527.6" rx="1.7" ry="3.5" fill="#12401a" stroke="#0a2a0f" stroke-width="0.8" transform="rotate(22 1022.88 527.626)" /><ellipse cx="1034.9" cy="517.0" rx="1.7" ry="3.5" fill="#12401a" stroke="#0a2a0f" stroke-width="0.8" transform="rotate(22 1034.9 517.011)" /><ellipse cx="1046.9" cy="506.4" rx="1.7" ry="3.5" fill="#12401a" stroke="#0a2a0f" stroke-width="0.8" transform="rotate(22 1046.92 506.395)" /><ellipse cx="1058.9" cy="495.8" rx="1.7" ry="3.5" fill="#12401a" stroke="#0a2a0f" stroke-width="0.8" transform="rotate(22 1058.94 495.779)" /><ellipse cx="1071.0" cy="485.2" rx="1.7" ry="3.5" fill="#12401a" stroke="#0a2a0f" stroke-width="0.8" transform="rotate(22 1070.96 485.164)" /><ellipse cx="1083.0" cy="474.5" rx="1.7" ry="3.5" fill="#12401a" stroke="#0a2a0f" stroke-width="0.8" transform="rotate(22 1082.99 474.548)" /><ellipse cx="1095.0" cy="463.9" rx="1.7" ry="3.5" fill="#12401a" stroke="#0a2a0f" stroke-width="0.8" transform="rotate(22 1095.01 463.932)" /><ellipse cx="878.6" cy="681.7" rx="1.7" ry="3.5" fill="#12401a" stroke="#0a2a0f" stroke-width="0.8" transform="rotate(22 878.617 681.684)" /><ellipse cx="890.6" cy="670.9" rx="1.7" ry="3.5" fill="#12401a" stroke="#0a2a0f" stroke-width="0.8" transform="rotate(22 890.639 670.941)" /><ellipse cx="902.7" cy="660.2" rx="1.7" ry="3.5" fill="#12401a" stroke="#0a2a0f" stroke-width="0.8" transform="rotate(22 902.66 660.197)" /><ellipse cx="914.7" cy="649.5" rx="1.7" ry="3.5" fill="#12401a" stroke="#0a2a0f" stroke-width="0.8" transform="rotate(22 914.682 649.454)" /><ellipse cx="926.7" cy="638.7" rx="1.7" ry="3.5" fill="#12401a" stroke="#0a2a0f" stroke-width="0.8" transform="rotate(22 926.704 638.71)" /><ellipse cx="938.7" cy="628.0" rx="1.7" ry="3.5" fill="#12401a" stroke="#0a2a0f" stroke-width="0.8" transform="rotate(22 938.726 627.967)" /><ellipse cx="950.7" cy="617.2" rx="1.7" ry="3.5" fill="#12401a" stroke="#0a2a0f" stroke-width="0.8" transform="rotate(22 950.747 617.223)" /><ellipse cx="962.8" cy="606.5" rx="1.7" ry="3.5" fill="#12401a" stroke="#0a2a0f" stroke-width="0.8" transform="rotate(22 962.769 606.48)" /><ellipse cx="974.8" cy="595.7" rx="1.7" ry="3.5" fill="#12401a" stroke="#0a2a0f" stroke-width="0.8" transform="rotate(22 974.791 595.736)" /><ellipse cx="986.8" cy="585.0" rx="1.7" ry="3.5" fill="#12401a" stroke="#0a2a0f" stroke-width="0.8" transform="rotate(22 986.813 584.993)" /><ellipse cx="998.8" cy="574.2" rx="1.7" ry="3.5" fill="#12401a" stroke="#0a2a0f" stroke-width="0.8" transform="rotate(22 998.834 574.249)" /><ellipse cx="1010.9" cy="563.5" rx="1.7" ry="3.5" fill="#12401a" stroke="#0a2a0f" stroke-width="0.8" transform="rotate(22 1010.86 563.506)" /><ellipse cx="1022.9" cy="552.8" rx="1.7" ry="3.5" fill="#12401a" stroke="#0a2a0f" stroke-width="0.8" transform="rotate(22 1022.88 552.762)" /><ellipse cx="1034.9" cy="542.0" rx="1.7" ry="3.5" fill="#12401a" stroke="#0a2a0f" stroke-width="0.8" transform="rotate(22 1034.9 542.019)" /><ellipse cx="1046.9" cy="531.3" rx="1.7" ry="3.5" fill="#12401a" stroke="#0a2a0f" stroke-width="0.8" transform="rotate(22 1046.92 531.275)" /><ellipse cx="1058.9" cy="520.5" rx="1.7" ry="3.5" fill="#12401a" stroke="#0a2a0f" stroke-width="0.8" transform="rotate(22 1058.94 520.532)" /><ellipse cx="1071.0" cy="509.8" rx="1.7" ry="3.5" fill="#12401a" stroke="#0a2a0f" stroke-width="0.8" transform="rotate(22 1070.96 509.788)" /><ellipse cx="1083.0" cy="499.0" rx="1.7" ry="3.5" fill="#12401a" stroke="#0a2a0f" stroke-width="0.8" transform="rotate(22 1082.99 499.045)" /><ellipse cx="1095.0" cy="488.3" rx="1.7" ry="3.5" fill="#12401a" stroke="#0a2a0f" stroke-width="0.8" transform="rotate(22 1095.01 488.301)" /><ellipse cx="890.6" cy="697.5" rx="1.7" ry="3.5" fill="#12401a" stroke="#0a2a0f" stroke-width="0.8" transform="rotate(22 890.639 697.483)" /><ellipse cx="902.7" cy="686.6" rx="1.7" ry="3.5" fill="#12401a" stroke="#0a2a0f" stroke-width="0.8" transform="rotate(22 902.66 686.611)" /><ellipse cx="914.7" cy="675.7" rx="1.7" ry="3.5" fill="#12401a" stroke="#0a2a0f" stroke-width="0.8" transform="rotate(22 914.682 675.74)" /><ellipse cx="926.7" cy="664.9" rx="1.7" ry="3.5" fill="#12401a" stroke="#0a2a0f" stroke-width="0.8" transform="rotate(22 926.704 664.869)" /><ellipse cx="938.7" cy="654.0" rx="1.7" ry="3.5" fill="#12401a" stroke="#0a2a0f" stroke-width="0.8" transform="rotate(22 938.726 653.997)" /><ellipse cx="950.7" cy="643.1" rx="1.7" ry="3.5" fill="#12401a" stroke="#0a2a0f" stroke-width="0.8" transform="rotate(22 950.747 643.126)" /><ellipse cx="962.8" cy="632.3" rx="1.7" ry="3.5" fill="#12401a" stroke="#0a2a0f" stroke-width="0.8" transform="rotate(22 962.769 632.255)" /><ellipse cx="974.8" cy="621.4" rx="1.7" ry="3.5" fill="#12401a" stroke="#0a2a0f" stroke-width="0.8" transform="rotate(22 974.791 621.384)" /><ellipse cx="986.8" cy="610.5" rx="1.7" ry="3.5" fill="#12401a" stroke="#0a2a0f" stroke-width="0.8" transform="rotate(22 986.813 610.512)" /><ellipse cx="998.8" cy="599.6" rx="1.7" ry="3.5" fill="#12401a" stroke="#0a2a0f" stroke-width="0.8" transform="rotate(22 998.834 599.641)" /><ellipse cx="1010.9" cy="588.8" rx="1.7" ry="3.5" fill="#12401a" stroke="#0a2a0f" stroke-width="0.8" transform="rotate(22 1010.86 588.77)" /><ellipse cx="1022.9" cy="577.9" rx="1.7" ry="3.5" fill="#12401a" stroke="#0a2a0f" stroke-width="0.8" transform="rotate(22 1022.88 577.898)" /><ellipse cx="1034.9" cy="567.0" rx="1.7" ry="3.5" fill="#12401a" stroke="#0a2a0f" stroke-width="0.8" transform="rotate(22 1034.9 567.027)" /><ellipse cx="1046.9" cy="556.2" rx="1.7" ry="3.5" fill="#12401a" stroke="#0a2a0f" stroke-width="0.8" transform="rotate(22 1046.92 556.156)" /><ellipse cx="1058.9" cy="545.3" rx="1.7" ry="3.5" fill="#12401a" stroke="#0a2a0f" stroke-width="0.8" transform="rotate(22 1058.94 545.284)" /><ellipse cx="1071.0" cy="534.4" rx="1.7" ry="3.5" fill="#12401a" stroke="#0a2a0f" stroke-width="0.8" transform="rotate(22 1070.96 534.413)" /><ellipse cx="1083.0" cy="523.5" rx="1.7" ry="3.5" fill="#12401a" stroke="#0a2a0f" stroke-width="0.8" transform="rotate(22 1082.99 523.542)" /><ellipse cx="1095.0" cy="512.7" rx="1.7" ry="3.5" fill="#12401a" stroke="#0a2a0f" stroke-width="0.8" transform="rotate(22 1095.01 512.671)" /><polygon points="1020.0,686.7 1100.8,709.2 1100.8,764.2 1020.0,739.7" fill="#c5c5c5" stroke="#3c3c3c" stroke-width="1" stroke-linejoin="round" /><polygon points="1100.8,709.2 1146.3,669.2 1146.3,722.2 1100.8,764.2" fill="#cdcdcd" stroke="#3c3c3c" stroke-width="1" stroke-linejoin="round" /><polygon points="1066.3,645.8 1146.3,669.2 1100.8,709.2 1020.0,686.7" fill="#d3d3d3" stroke="#3c3c3c" stroke-width="1" stroke-linejoin="round" /><polygon points="1043.3,745.0 1080.0,726.7 1100.8,731.7 1100.8,765.0 1060.0,754.0" fill="#dadada" stroke="none" stroke-width="0" stroke-linejoin="round" /><path d="M1066.3 645.8V699.5" fill="none" stroke="#555" stroke-width="0.9" /><path d="M1080 726.7L1043.3 745M1080 726.7L1100.8 731.7" fill="none" stroke="#555" stroke-width="0.9" /><polygon points="1040.6,773.8 1081.2,785.6 1235.0,653.2 1205.0,631.5" fill="#45a14a" stroke="#0b2b10" stroke-width="1.1" stroke-linejoin="round" /><polygon points="1081.2,785.6 1235.0,653.2 1235.0,730.5 1081.2,865.0" fill="#3c9644" stroke="#0b2b10" stroke-width="1.1" stroke-linejoin="round" /><ellipse cx="1071.7" cy="770.4" rx="3.7" ry="2.1" fill="#12401a" stroke="#0a2a0f" stroke-width="0.8" transform="rotate(-8 1071.71 770.363)" /><ellipse cx="1083.6" cy="760.1" rx="3.7" ry="2.1" fill="#12401a" stroke="#0a2a0f" stroke-width="0.8" transform="rotate(-8 1083.57 760.12)" /><ellipse cx="1095.4" cy="749.9" rx="3.7" ry="2.1" fill="#12401a" stroke="#0a2a0f" stroke-width="0.8" transform="rotate(-8 1095.44 749.877)" /><ellipse cx="1107.3" cy="739.6" rx="3.7" ry="2.1" fill="#12401a" stroke="#0a2a0f" stroke-width="0.8" transform="rotate(-8 1107.3 739.634)" /><ellipse cx="1119.2" cy="729.4" rx="3.7" ry="2.1" fill="#12401a" stroke="#0a2a0f" stroke-width="0.8" transform="rotate(-8 1119.17 729.392)" /><ellipse cx="1131.0" cy="719.1" rx="3.7" ry="2.1" fill="#12401a" stroke="#0a2a0f" stroke-width="0.8" transform="rotate(-8 1131.03 719.149)" /><ellipse cx="1142.9" cy="708.9" rx="3.7" ry="2.1" fill="#12401a" stroke="#0a2a0f" stroke-width="0.8" transform="rotate(-8 1142.89 708.906)" /><ellipse cx="1154.8" cy="698.7" rx="3.7" ry="2.1" fill="#12401a" stroke="#0a2a0f" stroke-width="0.8" transform="rotate(-8 1154.76 698.663)" /><ellipse cx="1166.6" cy="688.4" rx="3.7" ry="2.1" fill="#12401a" stroke="#0a2a0f" stroke-width="0.8" transform="rotate(-8 1166.62 688.42)" /><ellipse cx="1178.5" cy="678.2" rx="3.7" ry="2.1" fill="#12401a" stroke="#0a2a0f" stroke-width="0.8" transform="rotate(-8 1178.48 678.177)" /><ellipse cx="1190.3" cy="667.9" rx="3.7" ry="2.1" fill="#12401a" stroke="#0a2a0f" stroke-width="0.8" transform="rotate(-8 1190.35 667.934)" /><ellipse cx="1202.2" cy="657.7" rx="3.7" ry="2.1" fill="#12401a" stroke="#0a2a0f" stroke-width="0.8" transform="rotate(-8 1202.21 657.691)" /><ellipse cx="1214.1" cy="647.4" rx="3.7" ry="2.1" fill="#12401a" stroke="#0a2a0f" stroke-width="0.8" transform="rotate(-8 1214.08 647.448)" /><ellipse cx="1096.6" cy="788.2" rx="1.8" ry="3.6" fill="#12401a" stroke="#0a2a0f" stroke-width="0.8" transform="rotate(22 1096.62 788.198)" /><ellipse cx="1110.5" cy="776.2" rx="1.8" ry="3.6" fill="#12401a" stroke="#0a2a0f" stroke-width="0.8" transform="rotate(22 1110.46 776.244)" /><ellipse cx="1124.3" cy="764.3" rx="1.8" ry="3.6" fill="#12401a" stroke="#0a2a0f" stroke-width="0.8" transform="rotate(22 1124.3 764.29)" /><ellipse cx="1138.1" cy="752.3" rx="1.8" ry="3.6" fill="#12401a" stroke="#0a2a0f" stroke-width="0.8" transform="rotate(22 1138.14 752.337)" /><ellipse cx="1152.0" cy="740.4" rx="1.8" ry="3.6" fill="#12401a" stroke="#0a2a0f" stroke-width="0.8" transform="rotate(22 1151.97 740.383)" /><ellipse cx="1165.8" cy="728.4" rx="1.8" ry="3.6" fill="#12401a" stroke="#0a2a0f" stroke-width="0.8" transform="rotate(22 1165.81 728.429)" /><ellipse cx="1179.7" cy="716.5" rx="1.8" ry="3.6" fill="#12401a" stroke="#0a2a0f" stroke-width="0.8" transform="rotate(22 1179.65 716.475)" /><ellipse cx="1193.5" cy="704.5" rx="1.8" ry="3.6" fill="#12401a" stroke="#0a2a0f" stroke-width="0.8" transform="rotate(22 1193.49 704.521)" /><ellipse cx="1207.3" cy="692.6" rx="1.8" ry="3.6" fill="#12401a" stroke="#0a2a0f" stroke-width="0.8" transform="rotate(22 1207.33 692.568)" /><ellipse cx="1221.2" cy="680.6" rx="1.8" ry="3.6" fill="#12401a" stroke="#0a2a0f" stroke-width="0.8" transform="rotate(22 1221.16 680.614)" /><ellipse cx="1096.6" cy="812.0" rx="1.8" ry="3.6" fill="#12401a" stroke="#0a2a0f" stroke-width="0.8" transform="rotate(22 1096.62 811.955)" /><ellipse cx="1110.5" cy="799.9" rx="1.8" ry="3.6" fill="#12401a" stroke="#0a2a0f" stroke-width="0.8" transform="rotate(22 1110.46 799.945)" /><ellipse cx="1124.3" cy="787.9" rx="1.8" ry="3.6" fill="#12401a" stroke="#0a2a0f" stroke-width="0.8" transform="rotate(22 1124.3 787.934)" /><ellipse cx="1138.1" cy="775.9" rx="1.8" ry="3.6" fill="#12401a" stroke="#0a2a0f" stroke-width="0.8" transform="rotate(22 1138.14 775.924)" /><ellipse cx="1152.0" cy="763.9" rx="1.8" ry="3.6" fill="#12401a" stroke="#0a2a0f" stroke-width="0.8" transform="rotate(22 1151.97 763.913)" /><ellipse cx="1165.8" cy="751.9" rx="1.8" ry="3.6" fill="#12401a" stroke="#0a2a0f" stroke-width="0.8" transform="rotate(22 1165.81 751.903)" /><ellipse cx="1179.7" cy="739.9" rx="1.8" ry="3.6" fill="#12401a" stroke="#0a2a0f" stroke-width="0.8" transform="rotate(22 1179.65 739.892)" /><ellipse cx="1193.5" cy="727.9" rx="1.8" ry="3.6" fill="#12401a" stroke="#0a2a0f" stroke-width="0.8" transform="rotate(22 1193.49 727.882)" /><ellipse cx="1207.3" cy="715.9" rx="1.8" ry="3.6" fill="#12401a" stroke="#0a2a0f" stroke-width="0.8" transform="rotate(22 1207.33 715.871)" /><ellipse cx="1221.2" cy="703.9" rx="1.8" ry="3.6" fill="#12401a" stroke="#0a2a0f" stroke-width="0.8" transform="rotate(22 1221.16 703.861)" /><ellipse cx="1096.6" cy="835.7" rx="1.8" ry="3.6" fill="#12401a" stroke="#0a2a0f" stroke-width="0.8" transform="rotate(22 1096.62 835.712)" /><ellipse cx="1110.5" cy="823.6" rx="1.8" ry="3.6" fill="#12401a" stroke="#0a2a0f" stroke-width="0.8" transform="rotate(22 1110.46 823.645)" /><ellipse cx="1124.3" cy="811.6" rx="1.8" ry="3.6" fill="#12401a" stroke="#0a2a0f" stroke-width="0.8" transform="rotate(22 1124.3 811.578)" /><ellipse cx="1138.1" cy="799.5" rx="1.8" ry="3.6" fill="#12401a" stroke="#0a2a0f" stroke-width="0.8" transform="rotate(22 1138.14 799.51)" /><ellipse cx="1152.0" cy="787.4" rx="1.8" ry="3.6" fill="#12401a" stroke="#0a2a0f" stroke-width="0.8" transform="rotate(22 1151.97 787.443)" /><ellipse cx="1165.8" cy="775.4" rx="1.8" ry="3.6" fill="#12401a" stroke="#0a2a0f" stroke-width="0.8" transform="rotate(22 1165.81 775.376)" /><ellipse cx="1179.7" cy="763.3" rx="1.8" ry="3.6" fill="#12401a" stroke="#0a2a0f" stroke-width="0.8" transform="rotate(22 1179.65 763.309)" /><ellipse cx="1193.5" cy="751.2" rx="1.8" ry="3.6" fill="#12401a" stroke="#0a2a0f" stroke-width="0.8" transform="rotate(22 1193.49 751.242)" /><ellipse cx="1207.3" cy="739.2" rx="1.8" ry="3.6" fill="#12401a" stroke="#0a2a0f" stroke-width="0.8" transform="rotate(22 1207.33 739.174)" /><ellipse cx="1221.2" cy="727.1" rx="1.8" ry="3.6" fill="#12401a" stroke="#0a2a0f" stroke-width="0.8" transform="rotate(22 1221.16 727.107)" /><polygon points="798.7,707.5 825.0,684.2 1063.8,753.8 1040.6,773.8" fill="#45a14a" stroke="#0b2b10" stroke-width="1.1" stroke-linejoin="round" /><defs><linearGradient id="cf" x1="0" x2="1" y1="0" y2="0"><stop offset="0" stop-color="#2f7a3b"/><stop offset="0.35" stop-color="#2a6a34"/><stop offset="1" stop-color="#2d7438"/></linearGradient></defs><polygon points="798.7,707.5 1040.6,773.8 1040.6,851.2 798.7,781.7" fill="url(#cf)" stroke="#0b2b10" stroke-width="1.1" stroke-linejoin="round" /><ellipse cx="822.7" cy="698.9" rx="3.8" ry="2.1" fill="#12401a" stroke="#0a2a0f" stroke-width="0.8" transform="rotate(10 822.665 698.906)" /><ellipse cx="842.6" cy="704.5" rx="3.8" ry="2.1" fill="#12401a" stroke="#0a2a0f" stroke-width="0.8" transform="rotate(10 842.612 704.541)" /><ellipse cx="862.6" cy="710.2" rx="3.8" ry="2.1" fill="#12401a" stroke="#0a2a0f" stroke-width="0.8" transform="rotate(10 862.559 710.177)" /><ellipse cx="882.5" cy="715.8" rx="3.8" ry="2.1" fill="#12401a" stroke="#0a2a0f" stroke-width="0.8" transform="rotate(10 882.506 715.813)" /><ellipse cx="902.5" cy="721.4" rx="3.8" ry="2.1" fill="#12401a" stroke="#0a2a0f" stroke-width="0.8" transform="rotate(10 902.453 721.448)" /><ellipse cx="922.4" cy="727.1" rx="3.8" ry="2.1" fill="#12401a" stroke="#0a2a0f" stroke-width="0.8" transform="rotate(10 922.399 727.084)" /><ellipse cx="942.3" cy="732.7" rx="3.8" ry="2.1" fill="#12401a" stroke="#0a2a0f" stroke-width="0.8" transform="rotate(10 942.346 732.72)" /><ellipse cx="962.3" cy="738.4" rx="3.8" ry="2.1" fill="#12401a" stroke="#0a2a0f" stroke-width="0.8" transform="rotate(10 962.293 738.355)" /><ellipse cx="982.2" cy="744.0" rx="3.8" ry="2.1" fill="#12401a" stroke="#0a2a0f" stroke-width="0.8" transform="rotate(10 982.24 743.991)" /><ellipse cx="1002.2" cy="749.6" rx="3.8" ry="2.1" fill="#12401a" stroke="#0a2a0f" stroke-width="0.8" transform="rotate(10 1002.19 749.627)" /><ellipse cx="1022.1" cy="755.3" rx="3.8" ry="2.1" fill="#12401a" stroke="#0a2a0f" stroke-width="0.8" transform="rotate(10 1022.13 755.263)" /><ellipse cx="1042.1" cy="760.9" rx="3.8" ry="2.1" fill="#12401a" stroke="#0a2a0f" stroke-width="0.8" transform="rotate(10 1042.08 760.898)" /><ellipse cx="819.3" cy="731.0" rx="2.7" ry="3.3" fill="#153f1e" stroke="#0a2a0f" stroke-width="0.8" transform="rotate(-28 819.262 731.007)" /><ellipse cx="819.6" cy="730.8" rx="1.5" ry="1.8" fill="#3f7a52" stroke="none" stroke-width="0" transform="rotate(-28 819.562 730.807)" /><ellipse cx="839.5" cy="736.6" rx="2.7" ry="3.3" fill="#153f1e" stroke="#0a2a0f" stroke-width="0.8" transform="rotate(-28 839.46 736.605)" /><ellipse cx="839.8" cy="736.4" rx="1.5" ry="1.8" fill="#3f7a52" stroke="none" stroke-width="0" transform="rotate(-28 839.76 736.405)" /><ellipse cx="859.7" cy="742.2" rx="2.7" ry="3.3" fill="#153f1e" stroke="#0a2a0f" stroke-width="0.8" transform="rotate(-28 859.659 742.203)" /><ellipse cx="860.0" cy="742.0" rx="1.5" ry="1.8" fill="#3f7a52" stroke="none" stroke-width="0" transform="rotate(-28 859.959 742.003)" /><ellipse cx="879.9" cy="747.8" rx="2.7" ry="3.3" fill="#153f1e" stroke="#0a2a0f" stroke-width="0.8" transform="rotate(-28 879.857 747.801)" /><ellipse cx="880.2" cy="747.6" rx="1.5" ry="1.8" fill="#3f7a52" stroke="none" stroke-width="0" transform="rotate(-28 880.157 747.601)" /><ellipse cx="900.1" cy="753.4" rx="2.7" ry="3.3" fill="#153f1e" stroke="#0a2a0f" stroke-width="0.8" transform="rotate(-28 900.056 753.399)" /><ellipse cx="900.4" cy="753.2" rx="1.5" ry="1.8" fill="#3f7a52" stroke="none" stroke-width="0" transform="rotate(-28 900.356 753.199)" /><ellipse cx="920.3" cy="759.0" rx="2.7" ry="3.3" fill="#153f1e" stroke="#0a2a0f" stroke-width="0.8" transform="rotate(-28 920.255 758.997)" /><ellipse cx="920.6" cy="758.8" rx="1.5" ry="1.8" fill="#3f7a52" stroke="none" stroke-width="0" transform="rotate(-28 920.555 758.797)" /><ellipse cx="940.5" cy="764.6" rx="2.7" ry="3.3" fill="#153f1e" stroke="#0a2a0f" stroke-width="0.8" transform="rotate(-28 940.453 764.595)" /><ellipse cx="940.8" cy="764.4" rx="1.5" ry="1.8" fill="#3f7a52" stroke="none" stroke-width="0" transform="rotate(-28 940.753 764.395)" /><ellipse cx="960.7" cy="770.2" rx="2.7" ry="3.3" fill="#153f1e" stroke="#0a2a0f" stroke-width="0.8" transform="rotate(-28 960.652 770.193)" /><ellipse cx="961.0" cy="770.0" rx="1.5" ry="1.8" fill="#3f7a52" stroke="none" stroke-width="0" transform="rotate(-28 960.952 769.993)" /><ellipse cx="980.9" cy="775.8" rx="2.7" ry="3.3" fill="#153f1e" stroke="#0a2a0f" stroke-width="0.8" transform="rotate(-28 980.851 775.791)" /><ellipse cx="981.2" cy="775.6" rx="1.5" ry="1.8" fill="#3f7a52" stroke="none" stroke-width="0" transform="rotate(-28 981.151 775.591)" /><ellipse cx="1001.0" cy="781.4" rx="2.7" ry="3.3" fill="#153f1e" stroke="#0a2a0f" stroke-width="0.8" transform="rotate(-28 1001.05 781.389)" /><ellipse cx="1001.3" cy="781.2" rx="1.5" ry="1.8" fill="#3f7a52" stroke="none" stroke-width="0" transform="rotate(-28 1001.35 781.189)" /><ellipse cx="1021.2" cy="787.0" rx="2.7" ry="3.3" fill="#153f1e" stroke="#0a2a0f" stroke-width="0.8" transform="rotate(-28 1021.25 786.987)" /><ellipse cx="1021.5" cy="786.8" rx="1.5" ry="1.8" fill="#3f7a52" stroke="none" stroke-width="0" transform="rotate(-28 1021.55 786.787)" /><ellipse cx="819.3" cy="751.9" rx="2.7" ry="3.3" fill="#153f1e" stroke="#0a2a0f" stroke-width="0.8" transform="rotate(-28 819.262 751.861)" /><ellipse cx="819.6" cy="751.7" rx="1.5" ry="1.8" fill="#3f7a52" stroke="none" stroke-width="0" transform="rotate(-28 819.562 751.661)" /><ellipse cx="839.5" cy="757.5" rx="2.7" ry="3.3" fill="#153f1e" stroke="#0a2a0f" stroke-width="0.8" transform="rotate(-28 839.46 757.536)" /><ellipse cx="839.8" cy="757.3" rx="1.5" ry="1.8" fill="#3f7a52" stroke="none" stroke-width="0" transform="rotate(-28 839.76 757.336)" /><ellipse cx="859.7" cy="763.2" rx="2.7" ry="3.3" fill="#153f1e" stroke="#0a2a0f" stroke-width="0.8" transform="rotate(-28 859.659 763.211)" /><ellipse cx="860.0" cy="763.0" rx="1.5" ry="1.8" fill="#3f7a52" stroke="none" stroke-width="0" transform="rotate(-28 859.959 763.011)" /><ellipse cx="879.9" cy="768.9" rx="2.7" ry="3.3" fill="#153f1e" stroke="#0a2a0f" stroke-width="0.8" transform="rotate(-28 879.857 768.887)" /><ellipse cx="880.2" cy="768.7" rx="1.5" ry="1.8" fill="#3f7a52" stroke="none" stroke-width="0" transform="rotate(-28 880.157 768.687)" /><ellipse cx="900.1" cy="774.6" rx="2.7" ry="3.3" fill="#153f1e" stroke="#0a2a0f" stroke-width="0.8" transform="rotate(-28 900.056 774.562)" /><ellipse cx="900.4" cy="774.4" rx="1.5" ry="1.8" fill="#3f7a52" stroke="none" stroke-width="0" transform="rotate(-28 900.356 774.362)" /><ellipse cx="920.3" cy="780.2" rx="2.7" ry="3.3" fill="#153f1e" stroke="#0a2a0f" stroke-width="0.8" transform="rotate(-28 920.255 780.237)" /><ellipse cx="920.6" cy="780.0" rx="1.5" ry="1.8" fill="#3f7a52" stroke="none" stroke-width="0" transform="rotate(-28 920.555 780.037)" /><ellipse cx="940.5" cy="785.9" rx="2.7" ry="3.3" fill="#153f1e" stroke="#0a2a0f" stroke-width="0.8" transform="rotate(-28 940.453 785.912)" /><ellipse cx="940.8" cy="785.7" rx="1.5" ry="1.8" fill="#3f7a52" stroke="none" stroke-width="0" transform="rotate(-28 940.753 785.712)" /><ellipse cx="960.7" cy="791.6" rx="2.7" ry="3.3" fill="#153f1e" stroke="#0a2a0f" stroke-width="0.8" transform="rotate(-28 960.652 791.587)" /><ellipse cx="961.0" cy="791.4" rx="1.5" ry="1.8" fill="#3f7a52" stroke="none" stroke-width="0" transform="rotate(-28 960.952 791.387)" /><ellipse cx="980.9" cy="797.3" rx="2.7" ry="3.3" fill="#153f1e" stroke="#0a2a0f" stroke-width="0.8" transform="rotate(-28 980.851 797.262)" /><ellipse cx="981.2" cy="797.1" rx="1.5" ry="1.8" fill="#3f7a52" stroke="none" stroke-width="0" transform="rotate(-28 981.151 797.062)" /><ellipse cx="1001.0" cy="802.9" rx="2.7" ry="3.3" fill="#153f1e" stroke="#0a2a0f" stroke-width="0.8" transform="rotate(-28 1001.05 802.938)" /><ellipse cx="1001.3" cy="802.7" rx="1.5" ry="1.8" fill="#3f7a52" stroke="none" stroke-width="0" transform="rotate(-28 1001.35 802.738)" /><ellipse cx="1021.2" cy="808.6" rx="2.7" ry="3.3" fill="#153f1e" stroke="#0a2a0f" stroke-width="0.8" transform="rotate(-28 1021.25 808.613)" /><ellipse cx="1021.5" cy="808.4" rx="1.5" ry="1.8" fill="#3f7a52" stroke="none" stroke-width="0" transform="rotate(-28 1021.55 808.413)" /><ellipse cx="819.3" cy="772.7" rx="2.7" ry="3.3" fill="#153f1e" stroke="#0a2a0f" stroke-width="0.8" transform="rotate(-28 819.262 772.716)" /><ellipse cx="819.6" cy="772.5" rx="1.5" ry="1.8" fill="#3f7a52" stroke="none" stroke-width="0" transform="rotate(-28 819.562 772.516)" /><ellipse cx="839.5" cy="778.5" rx="2.7" ry="3.3" fill="#153f1e" stroke="#0a2a0f" stroke-width="0.8" transform="rotate(-28 839.46 778.468)" /><ellipse cx="839.8" cy="778.3" rx="1.5" ry="1.8" fill="#3f7a52" stroke="none" stroke-width="0" transform="rotate(-28 839.76 778.268)" /><ellipse cx="859.7" cy="784.2" rx="2.7" ry="3.3" fill="#153f1e" stroke="#0a2a0f" stroke-width="0.8" transform="rotate(-28 859.659 784.22)" /><ellipse cx="860.0" cy="784.0" rx="1.5" ry="1.8" fill="#3f7a52" stroke="none" stroke-width="0" transform="rotate(-28 859.959 784.02)" /><ellipse cx="879.9" cy="790.0" rx="2.7" ry="3.3" fill="#153f1e" stroke="#0a2a0f" stroke-width="0.8" transform="rotate(-28 879.857 789.973)" /><ellipse cx="880.2" cy="789.8" rx="1.5" ry="1.8" fill="#3f7a52" stroke="none" stroke-width="0" transform="rotate(-28 880.157 789.773)" /><ellipse cx="900.1" cy="795.7" rx="2.7" ry="3.3" fill="#153f1e" stroke="#0a2a0f" stroke-width="0.8" transform="rotate(-28 900.056 795.725)" /><ellipse cx="900.4" cy="795.5" rx="1.5" ry="1.8" fill="#3f7a52" stroke="none" stroke-width="0" transform="rotate(-28 900.356 795.525)" /><ellipse cx="920.3" cy="801.5" rx="2.7" ry="3.3" fill="#153f1e" stroke="#0a2a0f" stroke-width="0.8" transform="rotate(-28 920.255 801.477)" /><ellipse cx="920.6" cy="801.3" rx="1.5" ry="1.8" fill="#3f7a52" stroke="none" stroke-width="0" transform="rotate(-28 920.555 801.277)" /><ellipse cx="940.5" cy="807.2" rx="2.7" ry="3.3" fill="#153f1e" stroke="#0a2a0f" stroke-width="0.8" transform="rotate(-28 940.453 807.23)" /><ellipse cx="940.8" cy="807.0" rx="1.5" ry="1.8" fill="#3f7a52" stroke="none" stroke-width="0" transform="rotate(-28 940.753 807.03)" /><ellipse cx="960.7" cy="813.0" rx="2.7" ry="3.3" fill="#153f1e" stroke="#0a2a0f" stroke-width="0.8" transform="rotate(-28 960.652 812.982)" /><ellipse cx="961.0" cy="812.8" rx="1.5" ry="1.8" fill="#3f7a52" stroke="none" stroke-width="0" transform="rotate(-28 960.952 812.782)" /><ellipse cx="980.9" cy="818.7" rx="2.7" ry="3.3" fill="#153f1e" stroke="#0a2a0f" stroke-width="0.8" transform="rotate(-28 980.851 818.734)" /><ellipse cx="981.2" cy="818.5" rx="1.5" ry="1.8" fill="#3f7a52" stroke="none" stroke-width="0" transform="rotate(-28 981.151 818.534)" /><ellipse cx="1001.0" cy="824.5" rx="2.7" ry="3.3" fill="#153f1e" stroke="#0a2a0f" stroke-width="0.8" transform="rotate(-28 1001.05 824.486)" /><ellipse cx="1001.3" cy="824.3" rx="1.5" ry="1.8" fill="#3f7a52" stroke="none" stroke-width="0" transform="rotate(-28 1001.35 824.286)" /><ellipse cx="1021.2" cy="830.2" rx="2.7" ry="3.3" fill="#153f1e" stroke="#0a2a0f" stroke-width="0.8" transform="rotate(-28 1021.25 830.239)" /><ellipse cx="1021.5" cy="830.0" rx="1.5" ry="1.8" fill="#3f7a52" stroke="none" stroke-width="0" transform="rotate(-28 1021.55 830.039)" /><polygon points="760.0,692.5 798.7,707.5 798.7,781.7 760.0,771.7" fill="#2a6d35" stroke="#0b2b10" stroke-width="1.1" stroke-linejoin="round" /><path d="M762.500 697.500l34.500 13v65q0 3-3 2.200l-28.500-8q-3-0.800-3-3.800z" fill="#1b1b1b" stroke="#0a0a0a" stroke-width="0.800"/><polygon points="1040.6,773.8 1081.2,785.6 1081.2,865.0 1040.6,851.2" fill="#2a6d35" stroke="#0b2b10" stroke-width="1.1" stroke-linejoin="round" /><path d="M1043.500 779.500l35 10.200v69.500q0 3-3 2.200l-29-9q-3-0.800-3-3.800z" fill="#1b1b1b" stroke="#0a0a0a" stroke-width="0.800"/><polygon points="633.0,669.0 637.0,679.0 648.0,687.0 760.0,720.0 760.0,727.0 648.0,694.0 636.0,686.0 633.0,677.0" fill="#858585" stroke="#2b2b2b" stroke-width="0.9" stroke-linejoin="round" /><polygon points="633.0,669.0 637.0,679.0 648.0,687.0 760.0,720.0 760.0,690.0 733.0,668.0 690.0,652.0 650.0,655.0" fill="#d6d6d6" stroke="#2b2b2b" stroke-width="0.9" stroke-linejoin="round" /><polygon points="692.8,687.2 775.6,681.1 758.9,691.1 710.0,696.7 695.6,691.1" fill="#a2a2a2" stroke="#2b2b2b" stroke-width="0.7" stroke-linejoin="round" /><polygon points="708.9,696.7 756.7,692.2 759.0,711.1 742.2,707.8" fill="#1a1a1a" stroke="#111" stroke-width="0.6" stroke-linejoin="round" /><polygon points="688.9,681.0 700.0,672.0 726.7,676.0 726.0,680.5 700.0,682.5" fill="#6d6d6d" stroke="#2b2b2b" stroke-width="0.6" stroke-linejoin="round" /><path d="M784.0 600.0V690.0A6.0 3.0 0 0 0 796.0 690.0V600.0z" fill="#151515" stroke="#000" stroke-width="0.800"/><ellipse cx="790.0" cy="600.0" rx="6.0" ry="3.0" fill="#222" stroke="#000" stroke-width="0.8" /><path d="M705.5 644.4v12.5a34.5 16.0 0 0 0 69.0 0v-12.5z" fill="#35332a" stroke="#1f1e18" stroke-width="0.800"/><path d="M774.5 644.9v11.0" stroke="#a19d88" stroke-width="0.8" stroke-linecap="round"/><path d="M774.3 646.6v11.0" stroke="#a19d88" stroke-width="0.8" stroke-linecap="round"/><path d="M773.7 648.2v11.0" stroke="#a19d88" stroke-width="0.8" stroke-linecap="round"/><path d="M772.8 649.8v11.0" stroke="#a19d88" stroke-width="0.9" stroke-linecap="round"/><path d="M771.5 651.4v11.0" stroke="#a19d88" stroke-width="1.0" stroke-linecap="round"/><path d="M769.9 652.9v11.0" stroke="#a19d88" stroke-width="1.1" stroke-linecap="round"/><path d="M767.9 654.3v11.0" stroke="#a19d88" stroke-width="1.3" stroke-linecap="round"/><path d="M765.6 655.6v11.0" stroke="#a19d88" stroke-width="1.4" stroke-linecap="round"/><path d="M763.1 656.8v11.0" stroke="#a19d88" stroke-width="1.5" stroke-linecap="round"/><path d="M760.3 657.8v11.0" stroke="#a19d88" stroke-width="1.6" stroke-linecap="round"/><path d="M757.2 658.8v11.0" stroke="#a19d88" stroke-width="1.7" stroke-linecap="round"/><path d="M754.0 659.5v11.0" stroke="#a19d88" stroke-width="1.8" stroke-linecap="round"/><path d="M750.7 660.1v11.0" stroke="#a19d88" stroke-width="1.8" stroke-linecap="round"/><path d="M747.2 660.6v11.0" stroke="#a19d88" stroke-width="1.9" stroke-linecap="round"/><path d="M743.6 660.8v11.0" stroke="#a19d88" stroke-width="1.9" stroke-linecap="round"/><path d="M740.0 660.9v11.0" stroke="#a19d88" stroke-width="1.9" stroke-linecap="round"/><path d="M736.4 660.8v11.0" stroke="#a19d88" stroke-width="1.9" stroke-linecap="round"/><path d="M732.8 660.6v11.0" stroke="#a19d88" stroke-width="1.9" stroke-linecap="round"/><path d="M729.3 660.1v11.0" stroke="#a19d88" stroke-width="1.8" stroke-linecap="round"/><path d="M726.0 659.5v11.0" stroke="#a19d88" stroke-width="1.8" stroke-linecap="round"/><path d="M722.8 658.8v11.0" stroke="#a19d88" stroke-width="1.7" stroke-linecap="round"/><path d="M719.7 657.8v11.0" stroke="#a19d88" stroke-width="1.6" stroke-linecap="round"/><path d="M716.9 656.8v11.0" stroke="#a19d88" stroke-width="1.5" stroke-linecap="round"/><path d="M714.4 655.6v11.0" stroke="#a19d88" stroke-width="1.4" stroke-linecap="round"/><path d="M712.1 654.3v11.0" stroke="#a19d88" stroke-width="1.3" stroke-linecap="round"/><path d="M710.1 652.9v11.0" stroke="#a19d88" stroke-width="1.1" stroke-linecap="round"/><path d="M708.5 651.4v11.0" stroke="#a19d88" stroke-width="1.0" stroke-linecap="round"/><path d="M707.2 649.8v11.0" stroke="#a19d88" stroke-width="0.9" stroke-linecap="round"/><path d="M706.3 648.2v11.0" stroke="#a19d88" stroke-width="0.8" stroke-linecap="round"/><path d="M705.7 646.6v11.0" stroke="#a19d88" stroke-width="0.8" stroke-linecap="round"/><path d="M705.5 644.9v11.0" stroke="#a19d88" stroke-width="0.8" stroke-linecap="round"/><ellipse cx="740.0" cy="644.4" rx="34.5" ry="16.0" fill="#c9c5af" stroke="#4a483b" stroke-width="0.9" stroke-dasharray="2.300 1.500"/><ellipse cx="740.0" cy="644.4" rx="30.0" ry="13.5" fill="#dbd7c3" stroke="none" stroke-width="0" /><path d="M630.8 647.8v12.5a37.0 17.5 0 0 0 74.0 0v-12.5z" fill="#35332a" stroke="#1f1e18" stroke-width="0.800"/><path d="M704.8 648.3v11.0" stroke="#a19d88" stroke-width="0.8" stroke-linecap="round"/><path d="M704.6 650.1v11.0" stroke="#a19d88" stroke-width="0.8" stroke-linecap="round"/><path d="M704.0 651.9v11.0" stroke="#a19d88" stroke-width="0.8" stroke-linecap="round"/><path d="M703.0 653.7v11.0" stroke="#a19d88" stroke-width="0.9" stroke-linecap="round"/><path d="M701.6 655.4v11.0" stroke="#a19d88" stroke-width="1.0" stroke-linecap="round"/><path d="M699.8 657.0v11.0" stroke="#a19d88" stroke-width="1.1" stroke-linecap="round"/><path d="M697.7 658.6v11.0" stroke="#a19d88" stroke-width="1.3" stroke-linecap="round"/><path d="M695.3 660.0v11.0" stroke="#a19d88" stroke-width="1.4" stroke-linecap="round"/><path d="M692.6 661.3v11.0" stroke="#a19d88" stroke-width="1.5" stroke-linecap="round"/><path d="M689.5 662.5v11.0" stroke="#a19d88" stroke-width="1.6" stroke-linecap="round"/><path d="M686.3 663.5v11.0" stroke="#a19d88" stroke-width="1.7" stroke-linecap="round"/><path d="M682.8 664.3v11.0" stroke="#a19d88" stroke-width="1.8" stroke-linecap="round"/><path d="M679.2 664.9v11.0" stroke="#a19d88" stroke-width="1.8" stroke-linecap="round"/><path d="M675.5 665.4v11.0" stroke="#a19d88" stroke-width="1.9" stroke-linecap="round"/><path d="M671.7 665.7v11.0" stroke="#a19d88" stroke-width="1.9" stroke-linecap="round"/><path d="M667.8 665.8v11.0" stroke="#a19d88" stroke-width="1.9" stroke-linecap="round"/><path d="M663.9 665.7v11.0" stroke="#a19d88" stroke-width="1.9" stroke-linecap="round"/><path d="M660.1 665.4v11.0" stroke="#a19d88" stroke-width="1.9" stroke-linecap="round"/><path d="M656.4 664.9v11.0" stroke="#a19d88" stroke-width="1.8" stroke-linecap="round"/><path d="M652.8 664.3v11.0" stroke="#a19d88" stroke-width="1.8" stroke-linecap="round"/><path d="M649.3 663.5v11.0" stroke="#a19d88" stroke-width="1.7" stroke-linecap="round"/><path d="M646.1 662.5v11.0" stroke="#a19d88" stroke-width="1.6" stroke-linecap="round"/><path d="M643.0 661.3v11.0" stroke="#a19d88" stroke-width="1.5" stroke-linecap="round"/><path d="M640.3 660.0v11.0" stroke="#a19d88" stroke-width="1.4" stroke-linecap="round"/><path d="M637.9 658.6v11.0" stroke="#a19d88" stroke-width="1.3" stroke-linecap="round"/><path d="M635.8 657.0v11.0" stroke="#a19d88" stroke-width="1.1" stroke-linecap="round"/><path d="M634.0 655.4v11.0" stroke="#a19d88" stroke-width="1.0" stroke-linecap="round"/><path d="M632.6 653.7v11.0" stroke="#a19d88" stroke-width="0.9" stroke-linecap="round"/><path d="M631.6 651.9v11.0" stroke="#a19d88" stroke-width="0.8" stroke-linecap="round"/><path d="M631.0 650.1v11.0" stroke="#a19d88" stroke-width="0.8" stroke-linecap="round"/><path d="M630.8 648.3v11.0" stroke="#a19d88" stroke-width="0.8" stroke-linecap="round"/><ellipse cx="667.8" cy="647.8" rx="37.0" ry="17.5" fill="#c9c5af" stroke="#4a483b" stroke-width="0.9" stroke-dasharray="2.300 1.500"/><ellipse cx="667.8" cy="647.8" rx="32.5" ry="15.0" fill="#dbd7c3" stroke="none" stroke-width="0" /><path d="M719.0 600.0V644.0A18.0 7.0 0 0 0 755.0 644.0V600.0z" fill="#1b1b1b" stroke="#000" stroke-width="0.800"/><ellipse cx="737.0" cy="600.0" rx="18.0" ry="7.0" fill="#252525" stroke="#000" stroke-width="0.8" /><path d="M650.0 585.0V646.0A18.0 7.0 0 0 0 686.0 646.0V585.0z" fill="#1b1b1b" stroke="#000" stroke-width="0.800"/><ellipse cx="668.0" cy="585.0" rx="18.0" ry="7.0" fill="#252525" stroke="#000" stroke-width="0.8" /><polygon points="633.3,576.7 633.3,584.5 637.0,591.0 648.3,597.5 818.3,662.5 838.3,662.5 838.3,655.0 818.3,655.0 648.3,590.0 636.7,583.3" fill="#9a9a9a" stroke="#2b2b2b" stroke-width="0.9" stroke-linejoin="round" /><polygon points="838.3,655.0 838.3,662.5 907.5,597.5 907.5,590.0" fill="#c4c4c4" stroke="#2b2b2b" stroke-width="0.9" stroke-linejoin="round" /><polygon points="633.3,576.7 636.7,568.3 650.0,560.8 668.3,556.7 688.3,551.7 710.0,550.3 736.7,550.0 760.0,553.3 793.3,560.0 893.3,579.2 905.0,584.2 907.5,590.0 905.0,595.0 843.3,650.0 838.3,655.0 826.7,656.7 818.3,655.0 648.3,590.0 636.7,583.3" fill="#e9e9e9" stroke="#2b2b2b" stroke-width="1" stroke-linejoin="round" /><polygon points="688.3,588.3 703.3,580.0 726.7,587.5 703.3,590.5" fill="#7c7c7c" stroke="#2b2b2b" stroke-width="0.8" stroke-linejoin="round" /><polygon points="770.8,563.3 785.0,565.0 785.8,573.3 783.3,580.8 770.0,579.2 767.5,575.8" fill="#8e8e8e" stroke="#2b2b2b" stroke-width="0.8" stroke-linejoin="round" /><polygon points="769.0,573.5 785.0,575.5 783.0,580.5 770.0,579.0" fill="#fff" stroke="none" stroke-width="0" stroke-linejoin="round" /><polygon points="795.0,567.5 800.0,566.7 873.3,580.8 871.7,585.0 800.0,577.5 794.2,571.7" fill="#8a8a8a" stroke="#2b2b2b" stroke-width="0.8" stroke-linejoin="round" /><polygon points="800.0,573.0 869.0,584.3 800.0,577.2" fill="#5f5f5f" stroke="none" stroke-width="0" stroke-linejoin="round" /><polygon points="810.0,590.0 888.3,590.8 891.7,593.3 850.0,621.7 846.7,621.7" fill="#858585" stroke="#2b2b2b" stroke-width="0.8" stroke-linejoin="round" /><polygon points="827.0,598.5 878.3,597.5 850.5,618.0" fill="#fff" stroke="none" stroke-width="0" stroke-linejoin="round" /><polygon points="695.0,597.5 776.7,590.0 780.0,593.3 756.7,620.0 753.3,618.3" fill="#858585" stroke="#2b2b2b" stroke-width="0.8" stroke-linejoin="round" /><polygon points="716.0,603.5 770.0,598.0 755.5,615.5" fill="#fff" stroke="none" stroke-width="0" stroke-linejoin="round" /><polygon points="719.5,603.2 755.0,599.6 755.0,616.0 738.0,610.5" fill="#1b1b1b" stroke="none" stroke-width="0" stroke-linejoin="round" /><polygon points="780.0,601.7 786.7,600.0 798.3,633.3 795.0,638.3 765.0,624.2" fill="#858585" stroke="#2b2b2b" stroke-width="0.8" stroke-linejoin="round" /><polygon points="781.0,611.0 792.0,634.0 771.0,625.0" fill="#fff" stroke="none" stroke-width="0" stroke-linejoin="round" /><polygon points="784.5,612.0 792.0,634.0 784.5,631.0" fill="#1b1b1b" stroke="none" stroke-width="0" stroke-linejoin="round" /><polygon points="803.3,598.3 810.0,600.0 848.3,620.0 850.0,625.0 820.0,641.7 815.0,640.0 801.7,606.7" fill="#858585" stroke="#2b2b2b" stroke-width="0.8" stroke-linejoin="round" /><polygon points="809.0,612.0 838.0,624.0 820.0,637.5" fill="#fff" stroke="none" stroke-width="0" stroke-linejoin="round" /><ellipse cx="667.5" cy="571.0" rx="32.0" ry="17.5" fill="#d9d9d9" stroke="#2b2b2b" stroke-width="0.9" /><ellipse cx="667.5" cy="571.5" rx="26.0" ry="14.0" fill="#9b9b9b" stroke="#2b2b2b" stroke-width="0.8" /><ellipse cx="667.5" cy="572.0" rx="21.0" ry="11.0" fill="#c8c8c8" stroke="#2b2b2b" stroke-width="0.7" /><ellipse cx="736.7" cy="566.5" rx="28.0" ry="16.0" fill="#d9d9d9" stroke="#2b2b2b" stroke-width="0.9" /><ellipse cx="736.7" cy="567.0" rx="23.5" ry="13.0" fill="#8d8d8d" stroke="#2b2b2b" stroke-width="0.8" /><ellipse cx="736.7" cy="567.5" rx="19.0" ry="10.5" fill="#bdbdbd" stroke="#2b2b2b" stroke-width="0.7" /><path d="M649.500 440V571a18 8 0 0 0 36 0V440z" fill="#1a1a1a" stroke="#000" stroke-width="0.800"/><path d="M649.500 496a18 6 0 0 0 36 0" fill="none" stroke="#333" stroke-width="1"/><path d="M658 445V574" stroke="#262626" stroke-width="5"/><use href="#wheel"/><polygon points="1112.0,836.0 1128.0,831.0 1250.0,858.0 1290.0,905.0 1270.0,900.0" fill="#1c1c1c" stroke="#000" stroke-width="0.8" stroke-linejoin="round" /><polygon points="1125.0,827.0 1168.0,783.0 1232.0,776.0 1293.0,782.0 1300.0,800.0 1262.0,856.0 1238.0,853.0 1115.0,838.0" fill="#dddddd" stroke="#2b2b2b" stroke-width="0.9" stroke-linejoin="round" /><polygon points="1115.0,838.0 1238.0,853.0 1262.0,856.0 1262.0,863.0 1238.0,860.0 1113.0,845.0" fill="#8e8e8e" stroke="#2b2b2b" stroke-width="0.8" stroke-linejoin="round" /><polygon points="1170.0,789.0 1218.0,782.0 1222.0,786.0 1213.0,796.0 1174.0,800.0" fill="#8a8a8a" stroke="#2b2b2b" stroke-width="0.8" stroke-linejoin="round" /><polygon points="1177.0,793.0 1212.0,788.0 1209.0,794.0 1179.0,798.0" fill="#fff" stroke="none" stroke-width="0" stroke-linejoin="round" /><polygon points="1141.0,823.0 1146.0,820.0 1210.0,824.0 1214.0,830.0 1211.0,836.0 1147.0,831.0" fill="#7a7a7a" stroke="#2b2b2b" stroke-width="0.8" stroke-linejoin="round" /><polygon points="1148.0,825.5 1208.0,829.0 1209.0,834.0 1150.0,829.5" fill="#4b4b4b" stroke="none" stroke-width="0" stroke-linejoin="round" /><polygon points="1232.0,790.0 1246.0,782.0 1262.0,790.0 1240.0,842.0 1228.0,840.0" fill="#9b9b9b" stroke="#2b2b2b" stroke-width="0.8" stroke-linejoin="round" /><polygon points="1238.0,795.0 1248.0,789.0 1256.0,793.0 1240.0,830.0" fill="#fff" stroke="none" stroke-width="0" stroke-linejoin="round" /><polygon points="1150.0,806.0 1222.0,802.0 1226.0,812.0 1158.0,815.0" fill="#eeeeee" stroke="none" stroke-width="0" stroke-linejoin="round" /><path d="M1218.0 750.0V832.0A6.5 3.0 0 0 0 1231.0 832.0V750.0z" fill="#151515" stroke="#000" stroke-width="0.800"/><ellipse cx="1224.5" cy="750.0" rx="6.5" ry="3.0" fill="#222" stroke="#000" stroke-width="0.8" /><ellipse cx="1311.5" cy="891.0" rx="38.5" ry="14.0" fill="#161616" stroke="#000" stroke-width="0.8" /><path d="M1273 878v13h77v-13z" fill="#161616"/><path d="M1237.500 828v28a74 34 0 0 0 148 0v-28z" fill="#1b1b1b" stroke="#000" stroke-width="0.800"/><path d="M1238 846a74 34 0 0 0 147 0" fill="none" stroke="#3a3a3a" stroke-width="1.200"/><ellipse cx="1311.5" cy="828.0" rx="74.0" ry="35.0" fill="#2a2a2a" stroke="#000" stroke-width="0.9" /><ellipse cx="1311.5" cy="826.0" rx="24.0" ry="10.0" fill="#1a1a1a" stroke="#111" stroke-width="0.8" stroke-dasharray="2.500 2"/><path d="M1293.500 650V826a18 7 0 0 0 36 0V650z" fill="#1a1a1a" stroke="#000" stroke-width="0.800"/><path d="M1233 640V735a30 10 0 0 0 60 0V640z" fill="#1c1c1c" stroke="#000" stroke-width="0.800"/><path d="M1318 640V722a12 5 0 0 0 24.500 0V640z" fill="#161616" stroke="#000" stroke-width="0.800"/><path d="M1293 640V683a24.500 8 0 0 0 49.500 0V640z" fill="#1a1a1a" stroke="#000" stroke-width="0.800"/><path d="M1329.500 700V790" stroke="#000" stroke-width="1"/><polygon points="1097.0,733.0 1097.0,740.0 1298.0,784.0 1330.0,789.0 1346.0,776.0 1346.0,768.0 1330.0,781.0 1298.0,777.3" fill="#9a9a9a" stroke="#2b2b2b" stroke-width="0.9" stroke-linejoin="round" /><polygon points="1097.0,733.0 1098.4,728.8 1100.6,726.0 1168.8,665.5 1177.2,662.7 1185.7,664.8 1188.5,668.3 1294.0,726.7 1310.0,745.0 1335.0,747.0 1346.0,758.0 1346.0,768.0 1335.0,779.0 1312.0,783.0 1298.2,777.3" fill="#e8e8e8" stroke="#2b2b2b" stroke-width="1" stroke-linejoin="round" /><polygon points="1149.8,691.5 1167.4,675.0 1175.8,676.0 1206.8,716.8 1199.8,721.8 1153.3,698.5" fill="#858585" stroke="#2b2b2b" stroke-width="0.8" stroke-linejoin="round" /><polygon points="1157.0,697.0 1171.0,684.0 1179.0,688.0 1200.0,716.0 1196.0,718.0" fill="#3f9a47" stroke="none" stroke-width="0" stroke-linejoin="round" /><path d="M1166 703L1188 684" fill="none" stroke="#0b2b10" stroke-width="0.8" /><polygon points="1194.8,683.1 1201.2,681.0 1257.4,710.5 1258.8,714.7 1254.6,716.8 1201.2,692.2" fill="#8a8a8a" stroke="#2b2b2b" stroke-width="0.8" stroke-linejoin="round" /><polygon points="1202.0,688.5 1254.0,714.5 1253.0,716.0 1202.0,692.0" fill="#4e4e4e" stroke="none" stroke-width="0" stroke-linejoin="round" /><polygon points="1115.3,718.9 1130.8,705.6 1151.9,706.3 1198.3,724.6 1195.5,728.1 1120.3,726.7" fill="#858585" stroke="#2b2b2b" stroke-width="0.8" stroke-linejoin="round" /><polygon points="1121.0,724.0 1134.0,713.5 1153.0,714.0 1190.0,727.3" fill="#3f9a47" stroke="none" stroke-width="0" stroke-linejoin="round" /><path d="M1147 726.5L1160 716.5" fill="none" stroke="#0b2b10" stroke-width="0.8" /><polygon points="1140.7,734.4 1146.3,731.6 1206.8,735.8 1216.6,740.0 1213.8,743.6 1146.3,740.0" fill="#8a8a8a" stroke="#2b2b2b" stroke-width="0.8" stroke-linejoin="round" /><polygon points="1180.0,740.5 1212.0,742.0 1207.0,738.2 1185.0,737.0" fill="#3f9a47" stroke="none" stroke-width="0" stroke-linejoin="round" /><polygon points="1237.7,730.2 1263.1,717.5 1273.0,721.0 1283.0,745.0 1278.5,759.7 1232.1,747.1" fill="#858585" stroke="#2b2b2b" stroke-width="0.8" stroke-linejoin="round" /><polygon points="1243.0,735.0 1262.0,725.0 1270.0,727.0 1277.0,747.0 1273.0,754.0 1240.0,745.0" fill="#1d1d1d" stroke="none" stroke-width="0" stroke-linejoin="round" /><ellipse cx="1313.0" cy="757.0" rx="31.0" ry="17.0" fill="#d9d9d9" stroke="#2b2b2b" stroke-width="0.9" /><ellipse cx="1313.0" cy="757.5" rx="25.0" ry="13.5" fill="#8d8d8d" stroke="#2b2b2b" stroke-width="0.8" /><ellipse cx="1313.0" cy="758.0" rx="20.0" ry="10.5" fill="#bcbcbc" stroke="#2b2b2b" stroke-width="0.7" /><path d="M1294 700V758a18 7.500 0 0 0 36 0V700z" fill="#1a1a1a" stroke="#000" stroke-width="0.800"/><use href="#wheel" transform="translate(643.5,186)"/><path d="M662.5 363.0V378.5a5.5 5.5 0 0 0 11.0 0V363.0" fill="none" stroke="#f5b840" stroke-width="2.3"/><ellipse cx="668.0" cy="360.0" rx="16.5" ry="9.0" fill="#f2b235" stroke="#c98f1f" stroke-width="0.8" /><ellipse cx="668.0" cy="362.5" rx="16.0" ry="6.5" fill="none" stroke="#e3a42c" stroke-width="1" /><ellipse cx="669.0" cy="356.5" rx="5.0" ry="2.6" fill="#cf982c" stroke="none" stroke-width="0" /><path d="M1306.0 548.5V564.0a5.5 5.5 0 0 0 11.0 0V548.5" fill="none" stroke="#f5b840" stroke-width="2.3"/><ellipse cx="1311.5" cy="545.5" rx="16.5" ry="9.0" fill="#f2b235" stroke="#c98f1f" stroke-width="0.8" /><ellipse cx="1311.5" cy="548.0" rx="16.0" ry="6.5" fill="none" stroke="#e3a42c" stroke-width="1" /><ellipse cx="1312.5" cy="542.0" rx="5.0" ry="2.6" fill="#cf982c" stroke="none" stroke-width="0" /><path d="M692.0 555.0V660.5M701.5 555.0V660.5" stroke="#f5b840" stroke-width="2.3" fill="none"/><path d="M692.0 660.5A10.0 8.5 0 1 0 701.5 660.5" fill="none" stroke="#f5b840" stroke-width="2.3"/><ellipse cx="696.7" cy="554.0" rx="8.5" ry="5.2" fill="#f3b437" stroke="#d39a25" stroke-width="0.7" /><ellipse cx="696.7" cy="555.6" rx="8.2" ry="3.7" fill="none" stroke="#e0a52e" stroke-width="0.9" /><ellipse cx="696.7" cy="552.8" rx="3.6" ry="1.9" fill="#c9952c" stroke="none" stroke-width="0" /><path d="M731.5 573.0V583.8a5.2 5.2 0 0 0 10.5 0V573.0" fill="none" stroke="#f5b840" stroke-width="2.3"/><ellipse cx="736.7" cy="565.5" rx="16.5" ry="9.0" fill="#f2b235" stroke="#c98f1f" stroke-width="0.8" /><ellipse cx="737.5" cy="562.0" rx="5.0" ry="2.6" fill="#cf982c" stroke="none" stroke-width="0" /><path d="M784.8 587.0V692.5M795.2 587.0V692.5" stroke="#f5b840" stroke-width="2.3" fill="none"/><path d="M784.8 692.5A10.0 8.5 0 1 0 795.2 692.5" fill="none" stroke="#f5b840" stroke-width="2.3"/><ellipse cx="790.0" cy="586.0" rx="8.5" ry="5.2" fill="#f3b437" stroke="#d39a25" stroke-width="0.7" /><ellipse cx="790.0" cy="587.6" rx="8.2" ry="3.7" fill="none" stroke="#e0a52e" stroke-width="0.9" /><ellipse cx="790.0" cy="584.8" rx="3.6" ry="1.9" fill="#c9952c" stroke="none" stroke-width="0" /><path d="M890.8 586.8V610.8a5.0 5.0 0 0 0 10.0 0V586.8" fill="none" stroke="#f5b840" stroke-width="2.3"/><ellipse cx="895.8" cy="585.8" rx="8.5" ry="5.2" fill="#f3b437" stroke="#d39a25" stroke-width="0.7" /><ellipse cx="895.8" cy="587.4" rx="8.2" ry="3.7" fill="none" stroke="#e0a52e" stroke-width="0.9" /><ellipse cx="895.8" cy="584.6" rx="3.6" ry="1.9" fill="#c9952c" stroke="none" stroke-width="0" /><path d="M855.5 617.0V723.5M865.5 617.0V723.5" stroke="#f5b840" stroke-width="2.3" fill="none"/><path d="M855.5 723.5A10.0 8.5 0 1 0 865.5 723.5" fill="none" stroke="#f5b840" stroke-width="2.3"/><ellipse cx="860.5" cy="616.0" rx="8.5" ry="5.2" fill="#f3b437" stroke="#d39a25" stroke-width="0.7" /><ellipse cx="860.5" cy="617.6" rx="8.2" ry="3.7" fill="none" stroke="#e0a52e" stroke-width="0.9" /><ellipse cx="860.5" cy="614.8" rx="3.6" ry="1.9" fill="#c9952c" stroke="none" stroke-width="0" /><path d="M821.0 646.8V670.8a5.0 5.0 0 0 0 10.0 0V646.8" fill="none" stroke="#f5b840" stroke-width="2.3"/><ellipse cx="826.0" cy="645.8" rx="8.5" ry="5.2" fill="#f3b437" stroke="#d39a25" stroke-width="0.7" /><ellipse cx="826.0" cy="647.4" rx="8.2" ry="3.7" fill="none" stroke="#e0a52e" stroke-width="0.9" /><ellipse cx="826.0" cy="644.6" rx="3.6" ry="1.9" fill="#c9952c" stroke="none" stroke-width="0" /><path d="M663.3 673.6V660.0a5.0 5.0 0 0 1 10.0 0V673.6M663.3 673.6L652.3 679.5A16.0 9.0 0 0 0 684.3 679.5L673.3 673.6" fill="none" stroke="#f5b840" stroke-width="2.3" stroke-linejoin="round"/><path d="M732.5 690.6V677.0a5.0 5.0 0 0 1 10.0 0V690.6M732.5 690.6L721.5 696.5A16.0 9.0 0 0 0 753.5 696.5L742.5 690.6" fill="none" stroke="#f5b840" stroke-width="2.3" stroke-linejoin="round"/><path d="M890.8 685.2V662.2a4.2 4.2 0 0 1 8.5 0V685.2M890.8 685.2L886.0 689.0A9.0 5.5 0 0 0 904.0 689.0L899.2 685.2" fill="none" stroke="#f5b840" stroke-width="2.3" stroke-linejoin="round"/><path d="M10 -4.5H56.9a4.5 4.5 0 0 1 0 9.0H10M10 -4.5L8 -8.0Q0 -8.5 0 0Q0 8.5 8 8.0L10 4.5" fill="none" stroke="#f5b840" stroke-width="2.3" stroke-linejoin="round" transform="translate(765.0 701.0) rotate(17.55)"/><path d="M10 -4.5H57.0a4.5 4.5 0 0 1 0 9.0H10M10 -4.5L8 -8.0Q0 -8.5 0 0Q0 8.5 8 8.0L10 4.5" fill="none" stroke="#f5b840" stroke-width="2.3" stroke-linejoin="round" transform="translate(765.0 741.0) rotate(17.99)"/><path d="M826.7 698.5V710.5a5.0 5.0 0 0 0 10.0 0V698.5" fill="none" stroke="#f5b840" stroke-width="2.3"/><ellipse cx="831.7" cy="697.5" rx="8.5" ry="5.2" fill="#f3b437" stroke="#d39a25" stroke-width="0.7" /><ellipse cx="831.7" cy="699.1" rx="8.2" ry="3.7" fill="none" stroke="#e0a52e" stroke-width="0.9" /><ellipse cx="831.7" cy="696.3" rx="3.6" ry="1.9" fill="#c9952c" stroke="none" stroke-width="0" /><path d="M822 722a4.500 4 0 0 1 9 0V752h-9z" fill="none" stroke="#f5b840" stroke-width="2.3"/><path d="M827.5 776.7V766.2a4.2 4.2 0 0 1 8.5 0V776.7M827.5 776.7L822.7 780.5A9.0 5.5 0 0 0 840.7 780.5L836.0 776.7" fill="none" stroke="#f5b840" stroke-width="2.3" stroke-linejoin="round"/><path d="M1027.5 756.5V769.5a5.0 5.0 0 0 0 10.0 0V756.5" fill="none" stroke="#f5b840" stroke-width="2.3"/><ellipse cx="1032.5" cy="755.5" rx="8.5" ry="5.2" fill="#f3b437" stroke="#d39a25" stroke-width="0.7" /><ellipse cx="1032.5" cy="757.1" rx="8.2" ry="3.7" fill="none" stroke="#e0a52e" stroke-width="0.9" /><ellipse cx="1032.5" cy="754.3" rx="3.6" ry="1.9" fill="#c9952c" stroke="none" stroke-width="0" /><path d="M10 -4.5H58.1a4.5 4.5 0 0 1 0 9.0H10M10 -4.5L8 -8.0Q0 -8.5 0 0Q0 8.5 8 8.0L10 4.5" fill="none" stroke="#f5b840" stroke-width="2.3" stroke-linejoin="round" transform="translate(1066.0 440.0) rotate(16.70)"/><path d="M10 -4.5H58.4a4.5 4.5 0 0 1 0 9.0H10M10 -4.5L8 -8.0Q0 -8.5 0 0Q0 8.5 8 8.0L10 4.5" fill="none" stroke="#f5b840" stroke-width="2.3" stroke-linejoin="round" transform="translate(1066.0 479.5) rotate(17.57)"/><path d="M1128.0 437.7V450.7a5.0 5.0 0 0 0 10.0 0V437.7" fill="none" stroke="#f5b840" stroke-width="2.3"/><ellipse cx="1133.0" cy="436.7" rx="8.5" ry="5.2" fill="#f3b437" stroke="#d39a25" stroke-width="0.7" /><ellipse cx="1133.0" cy="438.3" rx="8.2" ry="3.7" fill="none" stroke="#e0a52e" stroke-width="0.9" /><ellipse cx="1133.0" cy="435.5" rx="3.6" ry="1.9" fill="#c9952c" stroke="none" stroke-width="0" /><path d="M1128.8 515.2V504.2a4.2 4.2 0 0 1 8.5 0V515.2M1128.8 515.2L1124.0 519.0A9.0 5.5 0 0 0 1142.0 519.0L1137.2 515.2" fill="none" stroke="#f5b840" stroke-width="2.3" stroke-linejoin="round"/><path d="M1329.5 495.5V513.5a5.0 5.0 0 0 0 10.0 0V495.5" fill="none" stroke="#f5b840" stroke-width="2.3"/><ellipse cx="1334.5" cy="494.5" rx="9.3" ry="5.7" fill="none" stroke="#f5b840" stroke-width="2.3" /><g transform="translate(1343.0 520.0) rotate(15.68)"><path d="M51.2 -4.5H4.5a4.5 4.5 0 0 0 0 9.0H51.2" fill="none" stroke="#f5b840" stroke-width="2.3"/><path d="M51.2 -4.5L53.2 -8.0Q61.2 -8.5 61.2 0Q61.2 8.5 53.2 8.0L51.2 4.5" fill="none" stroke="#f5b840" stroke-width="2.3" stroke-linejoin="round"/></g><g transform="translate(1343.0 559.5) rotate(16.14)"><path d="M51.3 -4.5H4.5a4.5 4.5 0 0 0 0 9.0H51.3" fill="none" stroke="#f5b840" stroke-width="2.3"/><path d="M51.3 -4.5L53.3 -8.0Q61.3 -8.5 61.3 0Q61.3 8.5 53.3 8.0L51.3 4.5" fill="none" stroke="#f5b840" stroke-width="2.3" stroke-linejoin="round"/></g><path d="M1330.0 573.7V562.8a4.2 4.2 0 0 1 8.5 0V573.7M1330.0 573.7L1325.3 577.5A9.0 5.5 0 0 0 1343.3 577.5L1338.5 573.7" fill="none" stroke="#f5b840" stroke-width="2.3" stroke-linejoin="round"/><path d="M1102.5 727.7V753.7a5.0 5.0 0 0 0 10.0 0V727.7" fill="none" stroke="#f5b840" stroke-width="2.3"/><ellipse cx="1107.5" cy="726.7" rx="8.5" ry="5.2" fill="#f3b437" stroke="#d39a25" stroke-width="0.7" /><ellipse cx="1107.5" cy="728.3" rx="8.2" ry="3.7" fill="none" stroke="#e0a52e" stroke-width="0.9" /><ellipse cx="1107.5" cy="725.5" rx="3.6" ry="1.9" fill="#c9952c" stroke="none" stroke-width="0" /><path d="M1137.5 699.0V805.0M1147.5 699.0V805.0" stroke="#f5b840" stroke-width="2.3" fill="none"/><path d="M1137.5 805.0A10.0 8.5 0 1 0 1147.5 805.0" fill="none" stroke="#f5b840" stroke-width="2.3"/><ellipse cx="1142.5" cy="698.0" rx="8.5" ry="5.2" fill="#f3b437" stroke="#d39a25" stroke-width="0.7" /><ellipse cx="1142.5" cy="699.6" rx="8.2" ry="3.7" fill="none" stroke="#e0a52e" stroke-width="0.9" /><ellipse cx="1142.5" cy="696.8" rx="3.6" ry="1.9" fill="#c9952c" stroke="none" stroke-width="0" /><path d="M1172.5 668.5V692.5a5.0 5.0 0 0 0 10.0 0V668.5" fill="none" stroke="#f5b840" stroke-width="2.3"/><ellipse cx="1177.5" cy="667.5" rx="8.5" ry="5.2" fill="#f3b437" stroke="#d39a25" stroke-width="0.7" /><ellipse cx="1177.5" cy="669.1" rx="8.2" ry="3.7" fill="none" stroke="#e0a52e" stroke-width="0.9" /><ellipse cx="1177.5" cy="666.3" rx="3.6" ry="1.9" fill="#c9952c" stroke="none" stroke-width="0" /><path d="M1173.0 765.7V743.2a4.2 4.2 0 0 1 8.5 0V765.7M1173.0 765.7L1168.3 769.5A9.0 5.5 0 0 0 1186.3 769.5L1181.5 765.7" fill="none" stroke="#f5b840" stroke-width="2.3" stroke-linejoin="round"/><path d="M1207.500 734V713a4.500 4 0 0 1 9 0V734M1207.500 734h-3a8 4.500 0 0 0 16 7" fill="none" stroke="#f5b840" stroke-width="2.3"/><path d="M1219.5 732.0V839.5M1229.5 732.0V839.5" stroke="#f5b840" stroke-width="2.3" fill="none"/><path d="M1219.5 839.5A10.0 8.5 0 1 0 1229.5 839.5" fill="none" stroke="#f5b840" stroke-width="2.3"/><ellipse cx="1224.5" cy="731.0" rx="8.5" ry="5.2" fill="#f3b437" stroke="#d39a25" stroke-width="0.7" /><ellipse cx="1224.5" cy="732.6" rx="8.2" ry="3.7" fill="none" stroke="#e0a52e" stroke-width="0.9" /><ellipse cx="1224.5" cy="729.8" rx="3.6" ry="1.9" fill="#c9952c" stroke="none" stroke-width="0" /><path d="M1245.8 717.0V791.0M1255.8 717.0V791.0" stroke="#f5b840" stroke-width="2.3" fill="none"/><path d="M1245.8 791.0A9.0 7.0 0 1 0 1255.8 791.0" fill="none" stroke="#f5b840" stroke-width="2.3"/><path d="M1245.8 717.0a5.0 4.0 0 0 1 10.0 0" fill="none" stroke="#f5b840" stroke-width="2.3"/><path d="M1275.8 680.0V754.5M1285.8 680.0V754.5" stroke="#f5b840" stroke-width="2.3" fill="none"/><path d="M1275.8 754.5A9.0 7.0 0 1 0 1285.8 754.5" fill="none" stroke="#f5b840" stroke-width="2.3"/><path d="M1275.8 680.0a5.0 4.0 0 0 1 10.0 0" fill="none" stroke="#f5b840" stroke-width="2.3"/><path d="M1325.0 712.0V785.5M1335.0 712.0V785.5" stroke="#f5b840" stroke-width="2.3" fill="none"/><path d="M1325.0 785.5A9.0 7.0 0 1 0 1335.0 785.5" fill="none" stroke="#f5b840" stroke-width="2.3"/><path d="M1325.0 712.0a5.0 4.0 0 0 1 10.0 0" fill="none" stroke="#f5b840" stroke-width="2.3"/><g transform="translate(1041.0 780.0) rotate(14.74)"><path d="M52.9 -4.5H4.5a4.5 4.5 0 0 0 0 9.0H52.9" fill="none" stroke="#f5b840" stroke-width="2.3"/><ellipse cx="56.9" cy="0" rx="5" ry="8.500" fill="#f2b235" stroke="#c98f1f" stroke-width="0.700"/><ellipse cx="57.9" cy="0" rx="2" ry="3.500" fill="#d99f2b"/></g><g transform="translate(1041.0 820.5) rotate(14.74)"><path d="M52.9 -4.5H4.5a4.5 4.5 0 0 0 0 9.0H52.9" fill="none" stroke="#f5b840" stroke-width="2.3"/><ellipse cx="56.9" cy="0" rx="5" ry="8.500" fill="#f2b235" stroke="#c98f1f" stroke-width="0.700"/><ellipse cx="57.9" cy="0" rx="2" ry="3.500" fill="#d99f2b"/></g><path d="M1028.2 835.7V824.8a4.2 4.2 0 0 1 8.5 0V835.7M1028.2 835.7L1023.5 839.5A9.0 5.5 0 0 0 1041.5 839.5L1036.8 835.7" fill="none" stroke="#f5b840" stroke-width="2.3" stroke-linejoin="round"/><path d="M1103.500 826V803a4.700 4 0 0 1 9.400 0V826M1103.500 826h-4a8.500 4.500 0 0 0 17 4l-4-4" fill="none" stroke="#f5b840" stroke-width="2.3"/><path d="M1306.0 882.6V869.2a5.2 5.2 0 0 1 10.5 0V882.6M1306.0 882.6L1295.3 888.5A16.0 9.0 0 0 0 1327.3 888.5L1316.5 882.6" fill="none" stroke="#f5b840" stroke-width="2.3" stroke-linejoin="round"/></svg>
<svg style="position:absolute;left:1700px;top:70px;" width="219" height="190" viewBox="0 0 219 190">
<polygon points="130,22 123,33 137,33" fill="#9a9a9a"/>
<polygon points="130,172 123,161 137,161" fill="#9a9a9a"/>
<polygon points="55,96 65,89 65,103" fill="#9a9a9a"/>
<polygon points="205,96 195,89 195,103" fill="#9a9a9a"/>
<path d="M108 32c-10 3-20 9-27 18" fill="none" stroke="#9a9a9a" stroke-width="4.500"/>
<polygon points="76,55 88,54 79,44" fill="#9a9a9a"/>
<path d="M152 32c10 3 20 9 27 18" fill="none" stroke="#9a9a9a" stroke-width="4.500"/>
<polygon points="184,55 172,54 181,44" fill="#9a9a9a"/>
<path d="M96 78l24-21 42 7 6 12-2 42-30 26-36-10-6-10z" fill="#e8edf0" stroke="#dfe5e9" stroke-width="2" stroke-linejoin="round"/>
<path d="M104 75l20-14 33 6-19 17z" fill="#fdfdfd"/>
<path d="M100 88l32 5-1 36-29-8z" fill="#fdfdfd"/>
<path d="M141 92l22-16-2 35-20 18z" fill="#fdfdfd"/>
<path d="M88 77v50" stroke="#2323c8" stroke-width="1.300"/>
<path d="M88 127l50 15" stroke="#e02020" stroke-width="1.300"/>
<path d="M88 127l30-26" stroke="#30b030" stroke-width="1"/>
<path d="M119 92l3 5 3-5M122 97v5" stroke="#7fd08a" stroke-width="0.800" fill="none"/>
</svg>
<span style="position:absolute;left:1783.0px;top:129.7px;font-size:13px;line-height:15.6px;color:#2323c8;white-space:nowrap;transform-origin:0 50%;transform:scaleX(1.0075);font-weight:bold;">Z</span>
<span style="position:absolute;left:1843.5px;top:206.7px;font-size:13px;line-height:15.6px;color:#e02020;white-space:nowrap;transform-origin:0 50%;transform:scaleX(0.9227);font-weight:bold;">X</span>
<span style="position:absolute;left:1802px;top:171px;font-size:12.500px;line-height:14px;color:#222;transform:rotate(9deg) scaleX(0.920);transform-origin:0 50%;white-space:nowrap">Front</span>
<span style="position:absolute;left:1821px;top:132px;font-size:9.500px;line-height:11px;color:#333;font-style:italic;transform:rotate(17deg) scaleX(1);transform-origin:0 50%;white-space:nowrap">Top</span>
<span style="position:absolute;left:1849px;top:172px;font-size:9.500px;line-height:11px;color:#333;font-style:italic;transform:rotate(-62deg) scaleX(1);transform-origin:0 50%;white-space:nowrap">Right</span>
<svg style="position:absolute;left:1865px;top:222px;" width="20" height="20" viewBox="0 0 20 20"><path d="M2 5l8-3 8 3v9l-8 4.500-8-4.500z" fill="#ddd" stroke="#555" stroke-width="1.100"/><path d="M2 5l8 3.500v10z" fill="#8a8a8a"/><path d="M10 8.500l8-3.500v9l-8 4.500z" fill="#b8b8b8"/><path d="M2 5l8 3.500 8-3.500M10 8.500v10" fill="none" stroke="#555" stroke-width="0.900"/></svg>
<svg style="position:absolute;left:1891px;top:229.5px;" width="9" height="6" viewBox="0 0 9 6"><polygon points="0,0.500 9,0.500 4.500,5.500" fill="#222"/></svg>
<div style="position:absolute;left:1888px;top:367px;width:31px;height:198.500px;background:#fff;border:1px solid #c8c8c8;border-right:none;box-sizing:border-box"></div>
<div style="position:absolute;left:1888px;top:400px;width:31px;height:1px;background:#c8c8c8"></div>
<div style="position:absolute;left:1888px;top:433px;width:31px;height:1px;background:#c8c8c8"></div>
<div style="position:absolute;left:1888px;top:466px;width:31px;height:1px;background:#c8c8c8"></div>
<div style="position:absolute;left:1888px;top:499px;width:31px;height:1px;background:#c8c8c8"></div>
<div style="position:absolute;left:1888px;top:532px;width:31px;height:1px;background:#c8c8c8"></div>
<svg style="position:absolute;left:1894.5px;top:374px;" width="20" height="20" viewBox="0 0 20 20"><rect x="2" y="2.500" width="16" height="15" rx="2.500" fill="#fff" stroke="#2d2d2d" stroke-width="1.500"/><path d="M5 6.500h10M7.500 10h7.500M7.500 13.500h7.500" stroke="#2d2d2d" stroke-width="1.700"/><path d="M5 10v3.500" stroke="#2d2d2d" stroke-width="1.300"/></svg>
<svg style="position:absolute;left:1893.5px;top:406px;" width="22" height="22" viewBox="0 0 22 22"><path d="M7 12l6-3 6 3v6l-6 3-6-3z" fill="#fff" stroke="#2d2d2d" stroke-width="1.400"/><path d="M7 12l6 3 6-3M13 15v6" fill="none" stroke="#2d2d2d" stroke-width="1.200"/><g fill="#1b5bbf"><rect x="2" y="2" width="2.600" height="2.600"/><rect x="5.400" y="2" width="2.600" height="2.600"/><rect x="8.800" y="2" width="2.600" height="2.600"/><rect x="2" y="5.400" width="2.600" height="2.600"/><rect x="5.400" y="5.400" width="2.600" height="2.600"/><rect x="8.800" y="5.400" width="2.600" height="2.600"/><rect x="2" y="8.800" width="2.600" height="2.600"/><rect x="5.400" y="8.800" width="2.600" height="2.600"/></g></svg>
<svg style="position:absolute;left:1894.5px;top:440px;" width="20" height="20" viewBox="0 0 20 20"><rect x="3" y="2.500" width="4" height="4" fill="#aaa" stroke="#2d2d2d" stroke-width="1"/><path d="M5 8v3h4" fill="none" stroke="#1b5bbf" stroke-width="1.200" stroke-dasharray="1.500 1"/><path d="M8.500 10.500h2.500v-2.500l1.500-1.500h5v9l-1.500 2h-7.500z" fill="#fff" stroke="#2d2d2d" stroke-width="1.300"/><path d="M11 13h3.500v-4" fill="none" stroke="#2d2d2d" stroke-width="1"/></svg>
<svg style="position:absolute;left:1894.5px;top:472.5px;" width="20" height="22" viewBox="0 0 20 22"><rect x="11.500" y="2" width="6.500" height="13" fill="none" stroke="#1b5bbf" stroke-width="1.200" stroke-dasharray="2 1.300"/><rect x="2" y="13" width="16" height="6" fill="#fff" stroke="#2d2d2d" stroke-width="1.300"/><circle cx="14.800" cy="16" r="2.300" fill="#fff" stroke="#1b5bbf" stroke-width="1.100"/><circle cx="14.800" cy="16" r="0.900" fill="#1b5bbf"/></svg>
<svg style="position:absolute;left:1894.5px;top:505.5px;" width="20" height="22" viewBox="0 0 20 22"><polygon points="10,1.500 18,7.500 15.500,18.500 4.500,18.500 2,7.500" fill="#dfe6ef"/><polygon points="10,1.500 10,11 2,7.500" fill="#2a62b8"/><polygon points="10,1.500 18,7.500 10,11" fill="#9fb8dc"/><polygon points="2,7.500 10,11 4.500,18.500" fill="#7aa0d4"/><polygon points="10,11 15.500,18.500 4.500,18.500" fill="#2a62b8"/><polygon points="18,7.500 15.500,18.500 10,11" fill="#c8c8c8"/><polygon points="10,11 7,21 13,21" fill="#fff" opacity="0.0"/></svg>
<svg style="position:absolute;left:1894.5px;top:539px;" width="20" height="20" viewBox="0 0 20 20"><g stroke="#2d2d2d" stroke-width="0.700" fill="none"><path d="M4 1.500h7.500v7.500h-7.500zM6.500 1.500v7.500M9 1.500v7.500M4 4h7.500M4 6.500h7.500"/></g><path d="M4.500 7.500c-2.500 3-2.500 7.500-.5 10.500M16 7.500c2.500 3 2.500 7.500.5 10.500" fill="none" stroke="#2d2d2d" stroke-width="1.600"/></svg>
<span style="position:absolute;left:1900.500px;top:545.500px;font-family:'Liberation Serif',serif;font-weight:bold;font-style:italic;font-size:15px;line-height:15px;color:#2d2d2d">x</span>
<div style="position:absolute;left:1888px;top:576px;width:31px;height:166.500px;background:#fff;border:1px solid #c8c8c8;border-right:none;box-sizing:border-box"></div>
<div style="position:absolute;left:1888px;top:609px;width:31px;height:1px;background:#c8c8c8"></div>
<div style="position:absolute;left:1888px;top:642px;width:31px;height:1px;background:#c8c8c8"></div>
<div style="position:absolute;left:1888px;top:675px;width:31px;height:1px;background:#c8c8c8"></div>
<div style="position:absolute;left:1888px;top:708px;width:31px;height:1px;background:#c8c8c8"></div>
<div style="position:absolute;left:1894px;top:582px;width:22px;height:22px;background:#1b58c4;border:1px solid #0c3c94;box-sizing:border-box"></div>
<span style="position:absolute;left:1895.500px;top:584.500px;font-family:'Liberation Serif',serif;font-weight:bold;font-size:15px;line-height:17px;color:#fff;transform-origin:0 50%;transform:scaleX(0.720);white-space:nowrap">MK</span>
<div style="position:absolute;left:1894px;top:615px;width:22px;height:22px;background:#e3e3e3"></div>
<svg style="position:absolute;left:1894px;top:615px;" width="22" height="22" viewBox="0 0 22 22"><path d="M11 11c-2-5-6-7-9-7 0 4 2 7 5 7.500-2 1-3 4-2 6.500 3 0 5-3 6-5.500 1 2.500 3 5.500 6 5.500 1-2.500 0-5.500-2-6.500 3-.5 5-3.500 5-7.500-3 0-7 2-9 7z" fill="#111"/></svg>
<div style="position:absolute;left:1894px;top:648px;width:22px;height:22px;background:#e3e3e3"></div>
<svg style="position:absolute;left:1894px;top:648px;" width="22" height="22" viewBox="0 0 22 22"><path d="M3 8l16-1 .5 10-16 2z" fill="#333"/><circle cx="8" cy="12.500" r="3" fill="#9fc6ee" stroke="#1b58c4" stroke-width="0.800"/><circle cx="14.500" cy="12" r="3" fill="#9fc6ee" stroke="#1b58c4" stroke-width="0.800"/><circle cx="8.500" cy="13" r="1.200" fill="#111"/><circle cx="14" cy="12.500" r="1.200" fill="#111"/><path d="M5 3v3M8 2.500v3.500M14 2.500v3.500M17 3v3" stroke="#1b58c4" stroke-width="1.500" stroke-dasharray="1.500 1"/><path d="M9 17.500h4" stroke="#ddd" stroke-width="1"/></svg>
<div style="position:absolute;left:1894px;top:681px;width:22px;height:22px;background:#4cae52;border:1px solid #3f9a44;box-sizing:border-box"></div>
<svg style="position:absolute;left:1894px;top:681px;" width="22" height="22" viewBox="0 0 22 22"><path d="M3.500 5.500c2.500-1 5-1 7 .5v11c-2-1.500-4.500-1.500-7-.500zM18.500 5.500c-2.500-1-5-1-7 .5v11c2-1.500 4.500-1.500 7-.500z" fill="#fff"/></svg>
<div style="position:absolute;left:1894px;top:714px;width:22px;height:22px;background:#1b58c4;border:1px solid #0c3c94;box-sizing:border-box"></div>
<svg style="position:absolute;left:1894px;top:714px;" width="22" height="22" viewBox="0 0 22 22"><path d="M3.500 5.500c2.500-1 5-1 7 .5v11c-2-1.500-4.500-1.500-7-.500zM18.500 5.500c-2.500-1-5-1-7 .5v11c2-1.500 4.500-1.500 7-.500z" fill="#fff"/></svg>
<svg style="position:absolute;left:1821px;top:1028px;" width="20" height="16" viewBox="0 0 20 16"><ellipse cx="11.500" cy="5.500" rx="5" ry="3.300" fill="#fff" stroke="#2d2d2d" stroke-width="1.300"/><ellipse cx="11.500" cy="5.500" rx="2.300" ry="1.300" fill="none" stroke="#2d2d2d" stroke-width="0.900"/><path d="M6.500 5.500v3.500M16.500 5.500v6c0 1.500-1 2-2 2.500" fill="none" stroke="#2d2d2d" stroke-width="1.300"/><path d="M1.500 9h13c1 0 2-.5 2-1.500v4.500c0 1.200-1 2-2 2h-13z" fill="#fff" stroke="#2d2d2d" stroke-width="1.300"/><path d="M4 12.500v1.500M6.500 12.500v1.500M9 12.500v1.500M11.500 12.500v1.500" stroke="#2d2d2d" stroke-width="0.900"/></svg>
<svg style="position:absolute;left:1854px;top:1029px;" width="22" height="15" viewBox="0 0 22 15"><path d="M1.500 13.500a9.500 9.500 0 0 1 19 0z" fill="#fff" stroke="#2d2d2d" stroke-width="1.500"/><path d="M3.800 12.500a7.200 7.200 0 0 1 14.400 0" fill="none" stroke="#2d2d2d" stroke-width="0.900" stroke-dasharray="0.800 0.800"/><path d="M6 13a5 5 0 0 1 10 0h-3a2 2 0 0 0-4 0z" fill="#fff" stroke="#2d2d2d" stroke-width="1.200"/></svg>
<svg style="position:absolute;left:1892px;top:1028px;" width="16" height="16" viewBox="0 0 16 16"><path d="M2 1.500h12" stroke="#2d2d2d" stroke-width="1.400"/><path d="M8 1.500v11.500" stroke="#2d2d2d" stroke-width="1.600"/><path d="M3.500 1.500l-2.300 8h4.600zM12.500 1.500l-2.300 8h4.600z" fill="none" stroke="#2d2d2d" stroke-width="0.900"/><rect x="1" y="9.500" width="5" height="1.800" fill="#2d2d2d"/><rect x="10" y="9.500" width="5" height="1.800" fill="#2d2d2d"/><rect x="1" y="13.500" width="14" height="1.800" fill="#2d2d2d"/></svg>
<div style="position:absolute;left:39.500px;top:1049.500px;width:1879.500px;height:29.500px;background:#d8d8d8"></div>
<svg style="position:absolute;left:48px;top:1055.5px;" width="17" height="17" viewBox="0 0 17 17"><path d="M8.500 1v15M1 8.500h15" stroke="#3a3a3a" stroke-width="2.600"/></svg>
<svg style="position:absolute;left:73px;top:1050.5px;" width="45" height="28" viewBox="0 0 45 28"><path d="M1.500 0.500h33.500l8.500 13.500-8.500 13.500h-33.500a1 1 0 0 1-1-1v-25.500a1 1 0 0 1 1-1z" fill="#ececec" stroke="#c4c4c4" stroke-width="1"/></svg>
<svg style="position:absolute;left:82px;top:1053.5px;" width="19" height="19" viewBox="0 0 19 19"><path d="M9.500 1.500l8.500 8v8.500h-5.800v-6h-5.400v6h-5.800v-8.500z" fill="#4a4a4a"/><rect x="13" y="2" width="2.800" height="5" fill="#4a4a4a"/></svg>
<svg style="position:absolute;left:107px;top:1050.5px;" width="140" height="28" viewBox="0 0 140 28"><path d="M0.500 0.500h129.500l8.500 13.500-8.500 13.500h-129.500l8.500-13.500z" fill="#fbfbfb" stroke="#c9c9c9" stroke-width="1"/></svg>
<div style="position:absolute;left:129.500px;top:1052px;width:95.500px;height:24px;overflow:hidden"><span style="position:absolute;left:0.0px;top:2.5px;font-size:15px;line-height:18.0px;color:#4a4a4a;white-space:nowrap;transform-origin:0 50%;transform:scaleX(0.9018);">Exercise 8 - Inde</span></div>
<div style="position:absolute;left:248px;top:1050px;width:198px;height:29px;background:#fff;border-bottom:2px solid #1b5bbf;box-sizing:border-box;border-radius:0 0 3px 3px"></div>
<svg style="position:absolute;left:260.5px;top:1056.5px;" width="13" height="13" viewBox="0 0 13 13"><circle cx="6.500" cy="6.500" r="6.300" fill="#6b9fd6"/><circle cx="6.500" cy="6.500" r="2.400" fill="#fff"/><rect x="5.600" y="0.800" width="1.800" height="3" fill="#fff"/><rect x="5.600" y="9.200" width="1.800" height="3" fill="#fff"/></svg>
<svg style="position:absolute;left:277px;top:1054px;" width="20" height="20" viewBox="0 0 20 20"><path d="M2 4.500l3-3h10.500a2 2 0 0 1 2 2v12l-3 3h-10.500a2 2 0 0 1-2-2z" fill="#fff" stroke="#333" stroke-width="1.300"/><rect x="4.500" y="4" width="9" height="9" fill="#8f8f8f" stroke="#444" stroke-width="1"/><path d="M2 4.500l3-0.500M14.500 18.500v-4.500h3" fill="none" stroke="#333" stroke-width="1"/></svg>
<span style="position:absolute;left:300.5px;top:1055.3px;font-size:15px;line-height:18.0px;color:#2b2b2b;white-space:nowrap;transform-origin:0 50%;transform:scaleX(0.9214);">Exercise 8 Assembly</span>
<div style="position:absolute;left:449.500px;top:1050.500px;width:199px;height:27.500px;background:#e4e4e4;border:1px solid #c9c9c9;border-top:none;box-sizing:border-box;border-radius:0 0 3px 3px"></div>
<svg style="position:absolute;left:459.5px;top:1054px;" width="19" height="20" viewBox="0 0 19 20"><path d="M2 6l2.500-2h4v14.500h-6.500z" fill="#fff" stroke="#444" stroke-width="1.300"/><path d="M9.500 3.500l3-2h4.500v15l-2.500 2h-5z" fill="#fff" stroke="#444" stroke-width="1.300"/><path d="M9.500 3.500h5v15M14.500 3.500l2.500-2" fill="none" stroke="#444" stroke-width="1"/></svg>
<span style="position:absolute;left:481.5px;top:1055.3px;font-size:15px;line-height:18.0px;color:#6e6e6e;white-space:nowrap;transform-origin:0 50%;transform:scaleX(0.9131);">Exercise 8 Part Studio</span>
</body></html>
